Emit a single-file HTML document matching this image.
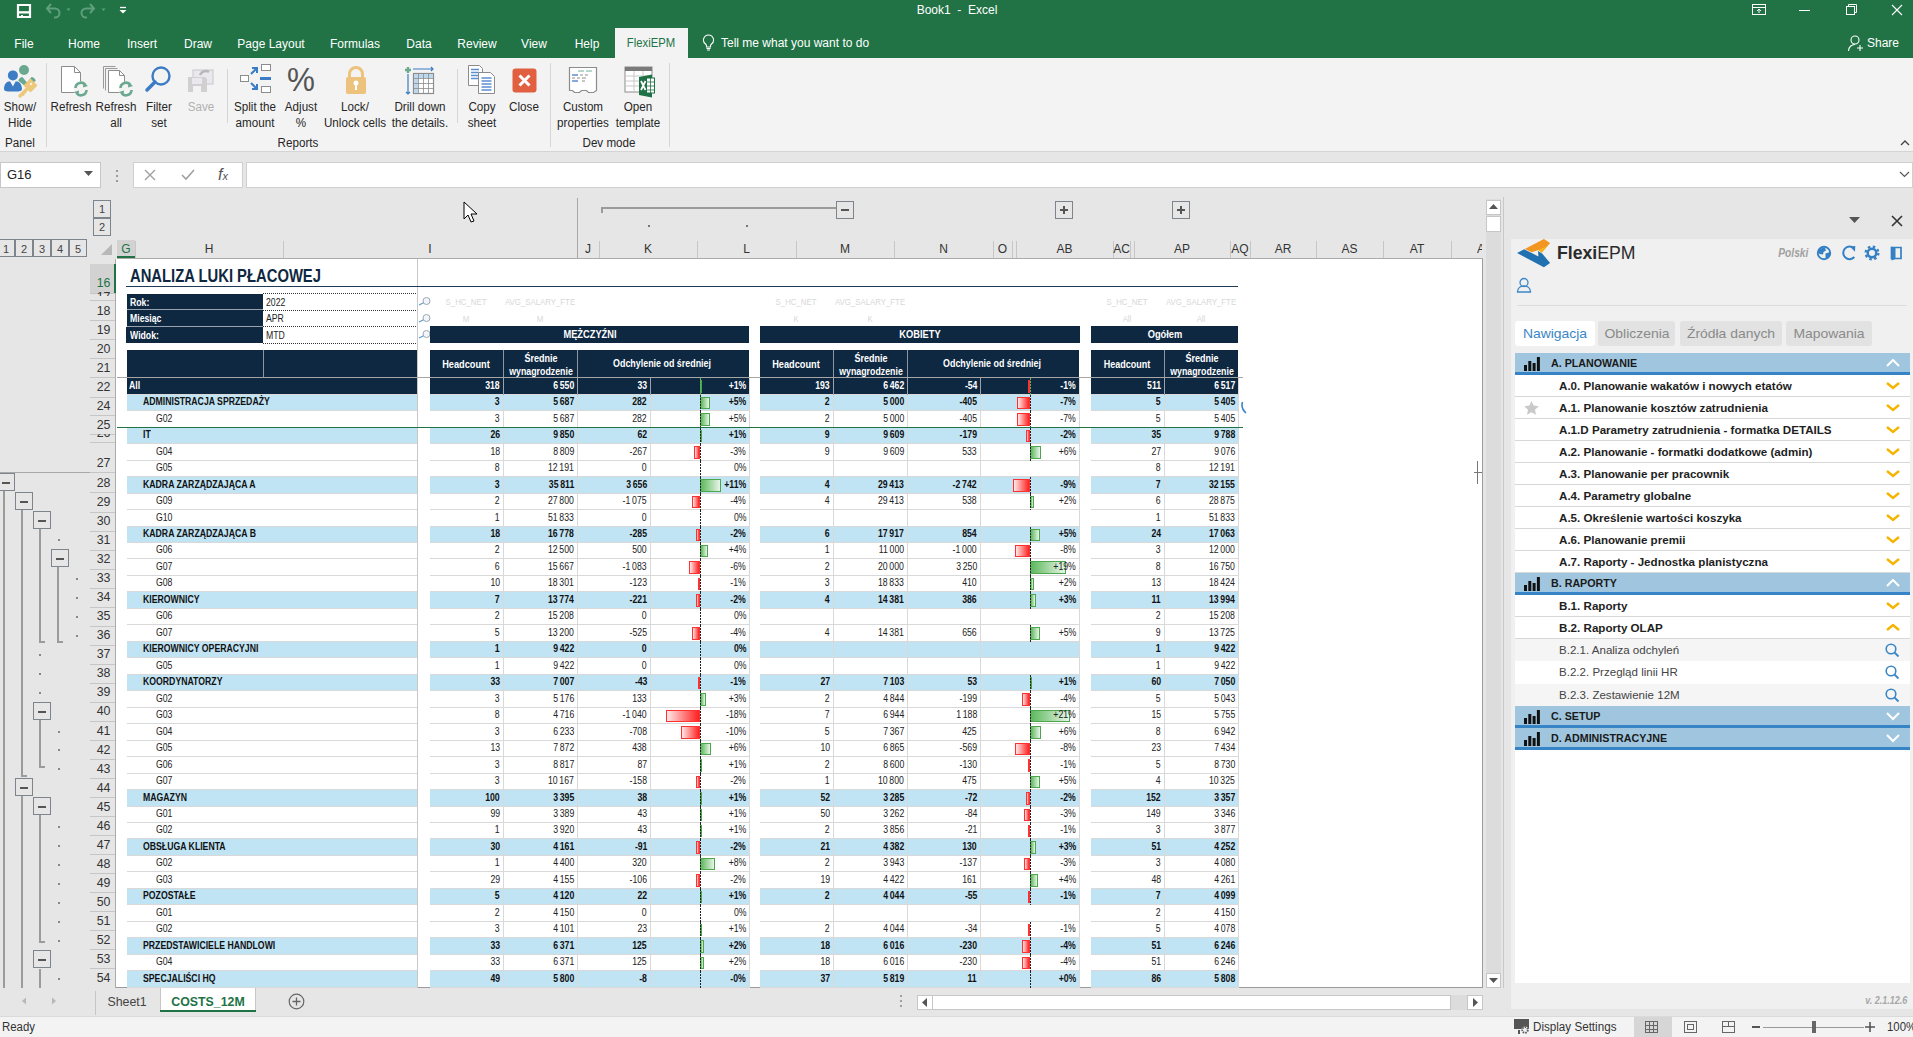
<!DOCTYPE html>
<html><head><meta charset="utf-8"><style>*{margin:0;padding:0}
html,body{width:1913px;height:1037px;overflow:hidden;background:#fff;font-family:"Liberation Sans", sans-serif;}
body div{position:absolute}
svg{display:block}
</style></head><body>
<div style="left:0px;top:0px;width:1913px;height:58px;background:#217346"></div>
<svg style="position:absolute;left:16px;top:3px" width="16" height="16" viewBox="0 0 16 16"><path d="M2 2h12v12H2z" fill="none" stroke="#fff" stroke-width="2.2"/><path d="M1 8.2h14v2.3H1z" fill="#fff"/><path d="M3 8.2l1.5 2.3M13 8.2l-1.5 2.3" stroke="#217346" stroke-width="0"/><rect x="5" y="12" width="2" height="3" fill="#fff"/></svg>
<svg style="position:absolute;left:44px;top:1px" width="100" height="18" viewBox="0 0 100 18"><path d="M7 3L3 7.5 7 12M3.5 7.5H11a4.5 4.5 0 0 1 0 9H10" fill="none" stroke="#5f9f7c" stroke-width="2"/><path d="M22.5 7.5h4l-2 2.5z" fill="#5f9f7c"/><path d="M46 3l4 4.5-4 4.5M49.5 7.5H42a4.5 4.5 0 0 0 0 9h1" fill="none" stroke="#5f9f7c" stroke-width="2"/><path d="M57.5 7.5h4l-2 2.5z" fill="#5f9f7c"/><path d="M76 6.5h6" stroke="#fff" stroke-width="1.3"/><path d="M75.5 9h7l-3.5 3.5z" fill="#fff"/></svg>
<div style="left:957px;top:0.0px;height:20px;line-height:20px;white-space:nowrap;transform:translateX(-50%) scaleX(1.0);color:#fff;font-size:12px;">Book1&nbsp; -&nbsp; Excel</div>
<svg style="position:absolute;left:1740px;top:0" width="173" height="20" viewBox="0 0 173 20"><rect x="12.5" y="4.5" width="13" height="10" fill="none" stroke="#fff"/><path d="M12.5 7.5h13M19 13V9M17 11l2-2 2 2" fill="none" stroke="#fff"/><path d="M59 10.5h11" stroke="#fff" stroke-width="1"/><rect x="106.5" y="6.5" width="8" height="8" fill="none" stroke="#fff"/><path d="M108.5 6.5v-2h8v8h-2" fill="none" stroke="#fff"/><path d="M152 5l10 10M162 5l-10 10" stroke="#fff" stroke-width="1.1"/></svg>
<div style="left:24px;top:33.5px;height:20px;line-height:20px;white-space:nowrap;transform:translateX(-50%) scaleX(1.0);color:#fff;font-size:12px;">File</div>
<div style="left:84px;top:33.5px;height:20px;line-height:20px;white-space:nowrap;transform:translateX(-50%) scaleX(1.0);color:#fff;font-size:12px;">Home</div>
<div style="left:142px;top:33.5px;height:20px;line-height:20px;white-space:nowrap;transform:translateX(-50%) scaleX(1.0);color:#fff;font-size:12px;">Insert</div>
<div style="left:198px;top:33.5px;height:20px;line-height:20px;white-space:nowrap;transform:translateX(-50%) scaleX(1.0);color:#fff;font-size:12px;">Draw</div>
<div style="left:271px;top:33.5px;height:20px;line-height:20px;white-space:nowrap;transform:translateX(-50%) scaleX(1.0);color:#fff;font-size:12px;">Page Layout</div>
<div style="left:355px;top:33.5px;height:20px;line-height:20px;white-space:nowrap;transform:translateX(-50%) scaleX(1.0);color:#fff;font-size:12px;">Formulas</div>
<div style="left:419px;top:33.5px;height:20px;line-height:20px;white-space:nowrap;transform:translateX(-50%) scaleX(1.0);color:#fff;font-size:12px;">Data</div>
<div style="left:477px;top:33.5px;height:20px;line-height:20px;white-space:nowrap;transform:translateX(-50%) scaleX(1.0);color:#fff;font-size:12px;">Review</div>
<div style="left:534px;top:33.5px;height:20px;line-height:20px;white-space:nowrap;transform:translateX(-50%) scaleX(1.0);color:#fff;font-size:12px;">View</div>
<div style="left:587px;top:33.5px;height:20px;line-height:20px;white-space:nowrap;transform:translateX(-50%) scaleX(1.0);color:#fff;font-size:12px;">Help</div>
<div style="left:615px;top:28px;width:73px;height:31px;background:#f3f3f3"></div>
<div style="left:651px;top:33.0px;height:20px;line-height:20px;white-space:nowrap;transform:translateX(-50%) scaleX(0.94);color:#217346;font-size:12px;">FlexiEPM</div>
<svg style="position:absolute;left:702px;top:34px" width="13" height="17" viewBox="0 0 13 17"><path d="M6.5 1a5 5 0 0 0-3 9c.7.6 1 1.3 1 2v1h4v-1c0-.7.3-1.4 1-2a5 5 0 0 0-3-9z" fill="none" stroke="#fff" stroke-width="1.1"/><path d="M4.5 14.5h4M5 16h3" stroke="#fff" stroke-width="1"/></svg>
<div style="left:721px;top:33.0px;height:20px;line-height:20px;white-space:nowrap;color:#fff;font-size:12px;">Tell me what you want to do</div>
<svg style="position:absolute;left:1847px;top:34px" width="18" height="18" viewBox="0 0 18 18"><circle cx="8" cy="6" r="4" fill="none" stroke="#fff" stroke-width="1.1"/><path d="M1.5 17c0-4 3-6.5 6.5-6.5" fill="none" stroke="#fff" stroke-width="1.1"/><path d="M13 11v6M10 14h6" stroke="#fff" stroke-width="1.1"/></svg>
<div style="left:1867px;top:33.0px;height:20px;line-height:20px;white-space:nowrap;color:#fff;font-size:12px;">Share</div>
<div style="left:0px;top:58px;width:1913px;height:93px;background:#f3f3f3"></div>
<div style="left:0px;top:151px;width:1913px;height:1px;background:#d4d4d4"></div>
<div style="left:46px;top:63px;width:1px;height:84px;background:#d6d6d6"></div>
<div style="left:550px;top:63px;width:1px;height:84px;background:#d6d6d6"></div>
<div style="left:669px;top:63px;width:1px;height:84px;background:#d6d6d6"></div>
<div style="left:227px;top:69px;width:1px;height:54px;background:#d6d6d6"></div>
<div style="left:457px;top:69px;width:1px;height:54px;background:#d6d6d6"></div>
<div style="left:20px;top:97.0px;height:20px;line-height:20px;white-space:nowrap;transform:translateX(-50%) scaleX(0.97);color:#262626;font-size:12px;">Show/</div>
<div style="left:20px;top:113.0px;height:20px;line-height:20px;white-space:nowrap;transform:translateX(-50%) scaleX(0.97);color:#262626;font-size:12px;">Hide</div>
<div style="left:71px;top:97.0px;height:20px;line-height:20px;white-space:nowrap;transform:translateX(-50%) scaleX(0.97);color:#262626;font-size:12px;">Refresh</div>
<div style="left:116px;top:97.0px;height:20px;line-height:20px;white-space:nowrap;transform:translateX(-50%) scaleX(0.97);color:#262626;font-size:12px;">Refresh</div>
<div style="left:116px;top:113.0px;height:20px;line-height:20px;white-space:nowrap;transform:translateX(-50%) scaleX(0.97);color:#262626;font-size:12px;">all</div>
<div style="left:159px;top:97.0px;height:20px;line-height:20px;white-space:nowrap;transform:translateX(-50%) scaleX(0.97);color:#262626;font-size:12px;">Filter</div>
<div style="left:159px;top:113.0px;height:20px;line-height:20px;white-space:nowrap;transform:translateX(-50%) scaleX(0.97);color:#262626;font-size:12px;">set</div>
<div style="left:201px;top:97.0px;height:20px;line-height:20px;white-space:nowrap;transform:translateX(-50%) scaleX(0.97);color:#b1b1b1;font-size:12px;">Save</div>
<div style="left:255px;top:97.0px;height:20px;line-height:20px;white-space:nowrap;transform:translateX(-50%) scaleX(0.97);color:#262626;font-size:12px;">Split the</div>
<div style="left:255px;top:113.0px;height:20px;line-height:20px;white-space:nowrap;transform:translateX(-50%) scaleX(0.97);color:#262626;font-size:12px;">amount</div>
<div style="left:301px;top:97.0px;height:20px;line-height:20px;white-space:nowrap;transform:translateX(-50%) scaleX(0.97);color:#262626;font-size:12px;">Adjust</div>
<div style="left:301px;top:113.0px;height:20px;line-height:20px;white-space:nowrap;transform:translateX(-50%) scaleX(0.97);color:#262626;font-size:12px;">%</div>
<div style="left:355px;top:97.0px;height:20px;line-height:20px;white-space:nowrap;transform:translateX(-50%) scaleX(0.97);color:#262626;font-size:12px;">Lock/</div>
<div style="left:355px;top:113.0px;height:20px;line-height:20px;white-space:nowrap;transform:translateX(-50%) scaleX(0.97);color:#262626;font-size:12px;">Unlock cells</div>
<div style="left:420px;top:97.0px;height:20px;line-height:20px;white-space:nowrap;transform:translateX(-50%) scaleX(0.97);color:#262626;font-size:12px;">Drill down</div>
<div style="left:420px;top:113.0px;height:20px;line-height:20px;white-space:nowrap;transform:translateX(-50%) scaleX(0.97);color:#262626;font-size:12px;">the details.</div>
<div style="left:482px;top:97.0px;height:20px;line-height:20px;white-space:nowrap;transform:translateX(-50%) scaleX(0.97);color:#262626;font-size:12px;">Copy</div>
<div style="left:482px;top:113.0px;height:20px;line-height:20px;white-space:nowrap;transform:translateX(-50%) scaleX(0.97);color:#262626;font-size:12px;">sheet</div>
<div style="left:524px;top:97.0px;height:20px;line-height:20px;white-space:nowrap;transform:translateX(-50%) scaleX(0.97);color:#262626;font-size:12px;">Close</div>
<div style="left:583px;top:97.0px;height:20px;line-height:20px;white-space:nowrap;transform:translateX(-50%) scaleX(0.97);color:#262626;font-size:12px;">Custom</div>
<div style="left:583px;top:113.0px;height:20px;line-height:20px;white-space:nowrap;transform:translateX(-50%) scaleX(0.97);color:#262626;font-size:12px;">properties</div>
<div style="left:638px;top:97.0px;height:20px;line-height:20px;white-space:nowrap;transform:translateX(-50%) scaleX(0.97);color:#262626;font-size:12px;">Open</div>
<div style="left:638px;top:113.0px;height:20px;line-height:20px;white-space:nowrap;transform:translateX(-50%) scaleX(0.97);color:#262626;font-size:12px;">template</div>
<div style="left:20px;top:133.0px;height:20px;line-height:20px;white-space:nowrap;transform:translateX(-50%) scaleX(0.97);color:#262626;font-size:12px;">Panel</div>
<div style="left:298px;top:133.0px;height:20px;line-height:20px;white-space:nowrap;transform:translateX(-50%) scaleX(0.97);color:#262626;font-size:12px;">Reports</div>
<div style="left:609px;top:133.0px;height:20px;line-height:20px;white-space:nowrap;transform:translateX(-50%) scaleX(0.97);color:#262626;font-size:12px;">Dev mode</div>
<svg style="position:absolute;left:3px;top:64px" width="36" height="34" viewBox="0 0 36 34"><circle cx="21" cy="6" r="5" fill="#6aa88f"/><path d="M15.2 16.8c1-2.6 2.6-3.8 4.2-3.8l4.6 5.6 4.6-5.6c1.6 0 3.2 1.2 4.2 3.8l-8.8 6.8z" fill="#6aa88f"/><circle cx="9.9" cy="11.4" r="5" fill="#3b7cc4"/><path d="M1 25c0-5 3-7.7 6-7.7l2.9 5.1 2.9-5.1c3 0 6.2 2.7 6.2 7.7 0 2.4-4 2.6-9 2.6s-9-.2-9-2.6z" fill="#3b7cc4"/><path d="M27.5 15.5l6 6-6 6-6-6z" fill="#edc77a" stroke="#edc77a" stroke-width="1.5" stroke-linejoin="round"/><circle cx="28" cy="20" r="1.2" fill="#f8f0e0"/><path d="M24.5 24.5l-7.5 7.5" stroke="#edc77a" stroke-width="3.2" stroke-linecap="round"/><path d="M19.5 29.5l1.8 1.8M21.5 27.5l1.5 1.5" stroke="#edc77a" stroke-width="1.8"/></svg>
<svg style="position:absolute;left:59px;top:65px" width="30" height="32" viewBox="0 0 30 32"><path d="M2.5 1.5h13l6 6v20h-19z" fill="#fff" stroke="#8c8c8c"/><path d="M15.5 1.5v6h6" fill="none" stroke="#8c8c8c"/><circle cx="22" cy="24" r="7.5" fill="#f3f3f3"/><path d="M16.5 23a5.5 5.5 0 0 1 10-3M27.5 25a5.5 5.5 0 0 1-10 3" fill="none" stroke="#6aa88f" stroke-width="2.6"/><path d="M24.5 17.5l4.5 3.5-5 1.5zM19.5 30.5l-4.5-3.5 5-1.5z" fill="#6aa88f"/></svg>
<svg style="position:absolute;left:102px;top:65px" width="34" height="34" viewBox="0 0 34 34"><path d="M1.5 1.5h12M1.5 1.5v22M3.5 3.5h12M3.5 3.5v22" fill="none" stroke="#9a9a9a"/><path d="M6.5 5.5h11l5 5v17h-16z" fill="#fff" stroke="#8c8c8c"/><path d="M17.5 5.5v5h5" fill="none" stroke="#8c8c8c"/><circle cx="24" cy="24" r="7.5" fill="#f3f3f3"/><path d="M18.5 23a5.5 5.5 0 0 1 10-3M29.5 25a5.5 5.5 0 0 1-10 3" fill="none" stroke="#6aa88f" stroke-width="2.6"/><path d="M26.5 17.5l4.5 3.5-5 1.5zM21.5 30.5l-4.5-3.5 5-1.5z" fill="#6aa88f"/></svg>
<svg style="position:absolute;left:144px;top:65px" width="30" height="30" viewBox="0 0 30 30"><circle cx="17" cy="11" r="8.5" fill="none" stroke="#3b7cc4" stroke-width="2.4"/><path d="M11 17L3 25" stroke="#3b7cc4" stroke-width="3.5" stroke-linecap="round"/></svg>
<svg style="position:absolute;left:186px;top:66px" width="30" height="30" viewBox="0 0 30 30"><rect x="7" y="4" width="20" height="14" fill="#ebe7ee" stroke="#c8c8c8"/><path d="M2 11h17l2 2v13H2z" fill="#d0d0d0"/><rect x="6" y="12" width="10" height="6" fill="#ebe7ee"/><rect x="7" y="20" width="8" height="6" fill="#f3f3f3"/><path d="M14 9c2-4 6-5 9-3" fill="none" stroke="#b8b8b8" stroke-width="2.5"/></svg>
<svg style="position:absolute;left:239px;top:63px" width="34" height="34" viewBox="0 0 34 34"><rect x="1.5" y="12.5" width="8" height="6" fill="#fff" stroke="#8c8c8c"/><rect x="22.5" y="1.5" width="9" height="6" fill="#fff" stroke="#8c8c8c"/><rect x="22.5" y="23.5" width="9" height="6" fill="#fff" stroke="#8c8c8c"/><rect x="21" y="14" width="11" height="3" fill="#3b7cc4"/><path d="M12 11l6-6M13 5h5v5M12 20l6 6M13 26h5v-5" fill="none" stroke="#3b7cc4" stroke-width="2"/></svg>
<div style="left:284px;top:60px;width:34px;height:40px;font:normal 33px/40px 'Liberation Sans',sans-serif;color:#555;text-align:center;transform:scaleX(0.95)">%</div>
<svg style="position:absolute;left:344px;top:65px" width="24" height="30" viewBox="0 0 24 30"><path d="M5.5 13V9a6.5 6.5 0 0 1 13 0v4" fill="none" stroke="#ecc27c" stroke-width="3"/><rect x="2" y="12" width="20" height="17" rx="2" fill="#ecc27c"/><circle cx="12" cy="18" r="2.5" fill="#fff"/><rect x="11" y="19" width="2" height="6" fill="#fff"/></svg>
<svg style="position:absolute;left:404px;top:64px" width="32" height="32" viewBox="0 0 32 32"><path d="M4 3v6M1 6h6" stroke="#6aa88f" stroke-width="2.4"/><path d="M9 5h20M27 3l2 2-2 2" fill="none" stroke="#3b7cc4" stroke-width="1.2"/><path d="M4 10v20M2 28l2 2 2-2" fill="none" stroke="#3b7cc4" stroke-width="1.2"/><rect x="9.5" y="9.5" width="20" height="20" fill="#fff" stroke="#8c8c8c" stroke-width="1.2"/><path d="M10 10h19v4H14v15h-4z" fill="#bdd7ee"/><path d="M14.5 10v19M19.5 10v19M24.5 10v19M10 14.5h19M10 19.5h19M10 24.5h19" stroke="#8c8c8c" stroke-width="0.8"/></svg>
<svg style="position:absolute;left:467px;top:64px" width="32" height="34" viewBox="0 0 32 34"><path d="M1.5 1.5h11l3 3v17h-14z" fill="#fff" stroke="#8c8c8c"/><path d="M4 5.5h8M4 8.5h8M4 11.5h8M4 14.5h8" stroke="#5b8fd0" stroke-width="1.3"/><path d="M11.5 8.5h12l4 4v17h-16z" fill="#fff" stroke="#8c8c8c"/><path d="M14.5 14h10M14.5 17h10M14.5 20h10M14.5 23h10M14.5 26h10" stroke="#5b8fd0" stroke-width="1.3"/></svg>
<svg style="position:absolute;left:512px;top:68px" width="25" height="25" viewBox="0 0 25 25"><rect x="0.5" y="0.5" width="24" height="24" rx="3" fill="#e06040"/><path d="M7.5 7.5l10 10M17.5 7.5l-10 10" stroke="#fff" stroke-width="3"/></svg>
<svg style="position:absolute;left:568px;top:66px" width="30" height="28" viewBox="0 0 30 28"><path d="M1.5 1.5h27v23l-3 2h-5l-2-2h-5l-2 2h-5l-2-2h-3z" fill="#fff" stroke="#8c8c8c" stroke-width="1.2"/><path d="M10 5h6M18 5h6" stroke="#9fcab9" stroke-width="1.6"/><path d="M4 9h6M4 15h6" stroke="#5b8fd0" stroke-width="1.6"/><path d="M12 9h3M17 9h3M4 12h3M9 12h3M14 12h4M14 15h3" stroke="#b5b5b5" stroke-width="1.6"/></svg>
<svg style="position:absolute;left:624px;top:66px" width="34" height="34" viewBox="0 0 34 34"><rect x="1" y="1" width="27" height="25" fill="#fff" stroke="#8c8c8c"/><rect x="1" y="1" width="27" height="4" fill="#7a7a7a"/><path d="M1 10h27M1 15h27M1 20h27M10 5v21M19 5v21" stroke="#c8c8c8"/><path d="M15 11l13-2.5v23L15 29z" fill="#1e7145"/><rect x="22.5" y="12" width="8" height="15" fill="#fff" stroke="#1e7145"/><path d="M22.5 16h8M22.5 20h8M22.5 24h8M26.5 12v15" stroke="#1e7145" stroke-width="0.8"/><path d="M17 15l4.5 9M21.5 15l-4.5 9" stroke="#fff" stroke-width="1.8"/></svg>
<svg style="position:absolute;left:1899px;top:138px" width="12" height="10" viewBox="0 0 12 10"><path d="M2 7l4-4 4 4" fill="none" stroke="#444" stroke-width="1.3"/></svg>
<div style="left:0px;top:152px;width:1913px;height:45px;background:#e6e6e6"></div>
<div style="left:0px;top:162px;width:101px;height:26px;background:#fff;border:1px solid #c6c6c6;box-sizing:border-box"></div>
<div style="left:7px;top:165.0px;height:20px;line-height:20px;white-space:nowrap;color:#222;font-size:13px;">G16</div>
<svg style="position:absolute;left:84px;top:171px" width="10" height="6"><path d="M0 0h9l-4.5 5z" fill="#555"/></svg>
<div style="left:116px;top:170px;width:2px;height:2px;background:#9a9a9a"></div>
<div style="left:116px;top:175px;width:2px;height:2px;background:#9a9a9a"></div>
<div style="left:116px;top:180px;width:2px;height:2px;background:#9a9a9a"></div>
<div style="left:133px;top:162px;width:110px;height:26px;background:#fff;border:1px solid #d0d0d0;box-sizing:border-box"></div>
<svg style="position:absolute;left:143px;top:168px" width="100" height="14" viewBox="0 0 100 14"><path d="M2 2l10 10M12 2L2 12" stroke="#a0a0a0" stroke-width="1.4"/><path d="M39 7l4 4 8-9" fill="none" stroke="#a0a0a0" stroke-width="1.6"/></svg>
<div style="left:223px;top:165.0px;height:20px;line-height:20px;white-space:nowrap;transform:translateX(-50%) scaleX(1.0);color:#555;font:14px "Liberation Serif",serif;"><i>f<span style="font-size:11px">x</span></i></div>
<div style="left:246px;top:162px;width:1667px;height:26px;background:#fff;border:1px solid #d0d0d0;box-sizing:border-box"></div>
<svg style="position:absolute;left:1899px;top:171px" width="11" height="7"><path d="M1 1l4.5 4.5L10 1" fill="none" stroke="#555" stroke-width="1.2"/></svg>
<div style="left:0px;top:197px;width:1505px;height:791px;background:#e6e6e6"></div>
<div style="left:93px;top:200px;width:18px;height:18px;border:1px solid #7d848c;box-sizing:border-box;background:#e6e6e6"></div>
<div style="left:102px;top:199.0px;height:20px;line-height:20px;white-space:nowrap;transform:translateX(-50%) scaleX(1.0);color:#444;font-size:11px;">1</div>
<div style="left:93px;top:218px;width:18px;height:18px;border:1px solid #7d848c;box-sizing:border-box;background:#e6e6e6"></div>
<div style="left:102px;top:217.0px;height:20px;line-height:20px;white-space:nowrap;transform:translateX(-50%) scaleX(1.0);color:#444;font-size:11px;">2</div>
<div style="left:-3px;top:239px;width:18px;height:18px;border:1px solid #7d848c;box-sizing:border-box;background:#e6e6e6"></div>
<div style="left:6px;top:238.5px;height:20px;line-height:20px;white-space:nowrap;transform:translateX(-50%) scaleX(1.0);color:#444;font-size:11px;">1</div>
<div style="left:15px;top:239px;width:18px;height:18px;border:1px solid #7d848c;box-sizing:border-box;background:#e6e6e6"></div>
<div style="left:24px;top:238.5px;height:20px;line-height:20px;white-space:nowrap;transform:translateX(-50%) scaleX(1.0);color:#444;font-size:11px;">2</div>
<div style="left:33px;top:239px;width:18px;height:18px;border:1px solid #7d848c;box-sizing:border-box;background:#e6e6e6"></div>
<div style="left:42px;top:238.5px;height:20px;line-height:20px;white-space:nowrap;transform:translateX(-50%) scaleX(1.0);color:#444;font-size:11px;">3</div>
<div style="left:51px;top:239px;width:18px;height:18px;border:1px solid #7d848c;box-sizing:border-box;background:#e6e6e6"></div>
<div style="left:60px;top:238.5px;height:20px;line-height:20px;white-space:nowrap;transform:translateX(-50%) scaleX(1.0);color:#444;font-size:11px;">4</div>
<div style="left:69px;top:239px;width:18px;height:18px;border:1px solid #7d848c;box-sizing:border-box;background:#e6e6e6"></div>
<div style="left:78px;top:238.5px;height:20px;line-height:20px;white-space:nowrap;transform:translateX(-50%) scaleX(1.0);color:#444;font-size:11px;">5</div>
<svg style="position:absolute;left:100px;top:243px" width="13" height="13"><path d="M12 1v11H1z" fill="#b8b8b8"/></svg>
<div style="left:117px;top:258px;width:1366px;height:1px;background:#ababab"></div>
<div style="left:117px;top:240px;width:18px;height:18px;background:#d2d2d2"></div>
<div style="left:117px;top:256px;width:18px;height:2px;background:#217346"></div>
<div style="left:135px;top:241px;width:1px;height:17px;background:#c6c6c6"></div>
<div style="left:126.0px;top:239.0px;height:20px;line-height:20px;white-space:nowrap;transform:translateX(-50%) scaleX(1.0);color:#217346;font-size:12px;">G</div>
<div style="left:283px;top:241px;width:1px;height:17px;background:#c6c6c6"></div>
<div style="left:209.0px;top:239.0px;height:20px;line-height:20px;white-space:nowrap;transform:translateX(-50%) scaleX(1.0);color:#333;font-size:12px;">H</div>
<div style="left:577px;top:241px;width:1px;height:17px;background:#c6c6c6"></div>
<div style="left:430.0px;top:239.0px;height:20px;line-height:20px;white-space:nowrap;transform:translateX(-50%) scaleX(1.0);color:#333;font-size:12px;">I</div>
<div style="left:599px;top:241px;width:1px;height:17px;background:#c6c6c6"></div>
<div style="left:588.0px;top:239.0px;height:20px;line-height:20px;white-space:nowrap;transform:translateX(-50%) scaleX(1.0);color:#333;font-size:12px;">J</div>
<div style="left:697px;top:241px;width:1px;height:17px;background:#c6c6c6"></div>
<div style="left:648.0px;top:239.0px;height:20px;line-height:20px;white-space:nowrap;transform:translateX(-50%) scaleX(1.0);color:#333;font-size:12px;">K</div>
<div style="left:796px;top:241px;width:1px;height:17px;background:#c6c6c6"></div>
<div style="left:746.5px;top:239.0px;height:20px;line-height:20px;white-space:nowrap;transform:translateX(-50%) scaleX(1.0);color:#333;font-size:12px;">L</div>
<div style="left:894px;top:241px;width:1px;height:17px;background:#c6c6c6"></div>
<div style="left:845.0px;top:239.0px;height:20px;line-height:20px;white-space:nowrap;transform:translateX(-50%) scaleX(1.0);color:#333;font-size:12px;">M</div>
<div style="left:993px;top:241px;width:1px;height:17px;background:#c6c6c6"></div>
<div style="left:943.5px;top:239.0px;height:20px;line-height:20px;white-space:nowrap;transform:translateX(-50%) scaleX(1.0);color:#333;font-size:12px;">N</div>
<div style="left:1012px;top:241px;width:1px;height:17px;background:#c6c6c6"></div>
<div style="left:1002.5px;top:239.0px;height:20px;line-height:20px;white-space:nowrap;transform:translateX(-50%) scaleX(1.0);color:#333;font-size:12px;">O</div>
<div style="left:1113px;top:241px;width:1px;height:17px;background:#c6c6c6"></div>
<div style="left:1064.5px;top:239.0px;height:20px;line-height:20px;white-space:nowrap;transform:translateX(-50%) scaleX(1.0);color:#333;font-size:12px;">AB</div>
<div style="left:1130px;top:241px;width:1px;height:17px;background:#c6c6c6"></div>
<div style="left:1121.5px;top:239.0px;height:20px;line-height:20px;white-space:nowrap;transform:translateX(-50%) scaleX(1.0);color:#333;font-size:12px;">AC</div>
<div style="left:1230px;top:241px;width:1px;height:17px;background:#c6c6c6"></div>
<div style="left:1182.0px;top:239.0px;height:20px;line-height:20px;white-space:nowrap;transform:translateX(-50%) scaleX(1.0);color:#333;font-size:12px;">AP</div>
<div style="left:1250px;top:241px;width:1px;height:17px;background:#c6c6c6"></div>
<div style="left:1240.0px;top:239.0px;height:20px;line-height:20px;white-space:nowrap;transform:translateX(-50%) scaleX(1.0);color:#333;font-size:12px;">AQ</div>
<div style="left:1316px;top:241px;width:1px;height:17px;background:#c6c6c6"></div>
<div style="left:1283.0px;top:239.0px;height:20px;line-height:20px;white-space:nowrap;transform:translateX(-50%) scaleX(1.0);color:#333;font-size:12px;">AR</div>
<div style="left:1383px;top:241px;width:1px;height:17px;background:#c6c6c6"></div>
<div style="left:1349.5px;top:239.0px;height:20px;line-height:20px;white-space:nowrap;transform:translateX(-50%) scaleX(1.0);color:#333;font-size:12px;">AS</div>
<div style="left:1451px;top:241px;width:1px;height:17px;background:#c6c6c6"></div>
<div style="left:1417.0px;top:239.0px;height:20px;line-height:20px;white-space:nowrap;transform:translateX(-50%) scaleX(1.0);color:#333;font-size:12px;">AT</div>
<div style="left:1477px;top:239.0px;height:20px;line-height:20px;white-space:nowrap;color:#333;font-size:12px;width:5px;overflow:hidden">A</div>
<div style="left:1012px;top:241px;width:1px;height:17px;background:#c6c6c6"></div>
<div style="left:1016px;top:241px;width:1px;height:17px;background:#c6c6c6"></div>
<div style="left:1130px;top:241px;width:1px;height:17px;background:#c6c6c6"></div>
<div style="left:1134px;top:241px;width:1px;height:17px;background:#c6c6c6"></div>
<div style="left:577px;top:198px;width:1px;height:61px;background:#a8a8a8"></div>
<div style="left:601px;top:207px;width:236px;height:2px;background:#9b9b9b"></div>
<div style="left:601px;top:207px;width:2px;height:6px;background:#9b9b9b"></div>
<div style="left:836px;top:201px;width:18px;height:18px;border:1px solid #7d848c;box-sizing:border-box;background:#e6e6e6"></div>
<div style="left:841px;top:209px;width:8px;height:2px;background:#555"></div>
<div style="left:1055px;top:201px;width:18px;height:18px;border:1px solid #7d848c;box-sizing:border-box;background:#e6e6e6"></div>
<div style="left:1060px;top:209px;width:8px;height:2px;background:#555"></div>
<div style="left:1063px;top:206px;width:2px;height:8px;background:#555"></div>
<div style="left:1172px;top:201px;width:18px;height:18px;border:1px solid #7d848c;box-sizing:border-box;background:#e6e6e6"></div>
<div style="left:1177px;top:209px;width:8px;height:2px;background:#555"></div>
<div style="left:1180px;top:206px;width:2px;height:8px;background:#555"></div>
<div style="left:648px;top:225px;width:2px;height:2px;background:#777"></div>
<div style="left:746px;top:225px;width:2px;height:2px;background:#777"></div>
<div style="left:115px;top:259px;width:1px;height:729px;background:#ababab"></div>
<div style="left:90px;top:264px;width:25px;height:29px;background:#d2d2d2"></div>
<div style="left:114px;top:264px;width:2px;height:29px;background:#217346"></div>
<div style="left:90px;top:293px;width:25px;height:1px;background:#c6c6c6"></div>
<div style="left:90px;top:300px;width:25px;height:1px;background:#c6c6c6"></div>
<div style="left:90px;top:320px;width:25px;height:1px;background:#c6c6c6"></div>
<div style="left:90px;top:339px;width:25px;height:1px;background:#c6c6c6"></div>
<div style="left:90px;top:358px;width:25px;height:1px;background:#c6c6c6"></div>
<div style="left:90px;top:377px;width:25px;height:1px;background:#c6c6c6"></div>
<div style="left:90px;top:397px;width:25px;height:1px;background:#c6c6c6"></div>
<div style="left:90px;top:415px;width:25px;height:1px;background:#c6c6c6"></div>
<div style="left:90px;top:434px;width:25px;height:1px;background:#c6c6c6"></div>
<div style="left:90px;top:442px;width:25px;height:1px;background:#c6c6c6"></div>
<div style="left:90px;top:472px;width:25px;height:1px;background:#c6c6c6"></div>
<div style="left:90px;top:492px;width:25px;height:1px;background:#c6c6c6"></div>
<div style="left:90px;top:512px;width:25px;height:1px;background:#c6c6c6"></div>
<div style="left:90px;top:531px;width:25px;height:1px;background:#c6c6c6"></div>
<div style="left:90px;top:550px;width:25px;height:1px;background:#c6c6c6"></div>
<div style="left:90px;top:569px;width:25px;height:1px;background:#c6c6c6"></div>
<div style="left:90px;top:588px;width:25px;height:1px;background:#c6c6c6"></div>
<div style="left:90px;top:607px;width:25px;height:1px;background:#c6c6c6"></div>
<div style="left:90px;top:626px;width:25px;height:1px;background:#c6c6c6"></div>
<div style="left:90px;top:645px;width:25px;height:1px;background:#c6c6c6"></div>
<div style="left:90px;top:664px;width:25px;height:1px;background:#c6c6c6"></div>
<div style="left:90px;top:683px;width:25px;height:1px;background:#c6c6c6"></div>
<div style="left:90px;top:702px;width:25px;height:1px;background:#c6c6c6"></div>
<div style="left:90px;top:721px;width:25px;height:1px;background:#c6c6c6"></div>
<div style="left:90px;top:740px;width:25px;height:1px;background:#c6c6c6"></div>
<div style="left:90px;top:759px;width:25px;height:1px;background:#c6c6c6"></div>
<div style="left:90px;top:778px;width:25px;height:1px;background:#c6c6c6"></div>
<div style="left:90px;top:797px;width:25px;height:1px;background:#c6c6c6"></div>
<div style="left:90px;top:816px;width:25px;height:1px;background:#c6c6c6"></div>
<div style="left:90px;top:835px;width:25px;height:1px;background:#c6c6c6"></div>
<div style="left:90px;top:854px;width:25px;height:1px;background:#c6c6c6"></div>
<div style="left:90px;top:873px;width:25px;height:1px;background:#c6c6c6"></div>
<div style="left:90px;top:892px;width:25px;height:1px;background:#c6c6c6"></div>
<div style="left:90px;top:911px;width:25px;height:1px;background:#c6c6c6"></div>
<div style="left:90px;top:930px;width:25px;height:1px;background:#c6c6c6"></div>
<div style="left:90px;top:949px;width:25px;height:1px;background:#c6c6c6"></div>
<div style="left:90px;top:968px;width:25px;height:1px;background:#c6c6c6"></div>
<div style="left:90px;top:988px;width:25px;height:1px;background:#c6c6c6"></div>
<div style="right:1802.5px;top:273.0px;height:20px;line-height:20px;white-space:nowrap;transform:scaleX(0.95);transform-origin:right;color:#217346;font-size:13px;">16</div>
<div style="right:1802.5px;top:301.0px;height:20px;line-height:20px;white-space:nowrap;transform:scaleX(0.95);transform-origin:right;color:#333;font-size:13px;">18</div>
<div style="right:1802.5px;top:320.0px;height:20px;line-height:20px;white-space:nowrap;transform:scaleX(0.95);transform-origin:right;color:#333;font-size:13px;">19</div>
<div style="right:1802.5px;top:339.0px;height:20px;line-height:20px;white-space:nowrap;transform:scaleX(0.95);transform-origin:right;color:#333;font-size:13px;">20</div>
<div style="right:1802.5px;top:358.0px;height:20px;line-height:20px;white-space:nowrap;transform:scaleX(0.95);transform-origin:right;color:#333;font-size:13px;">21</div>
<div style="right:1802.5px;top:377.0px;height:20px;line-height:20px;white-space:nowrap;transform:scaleX(0.95);transform-origin:right;color:#333;font-size:13px;">22</div>
<div style="right:1802.5px;top:396.0px;height:20px;line-height:20px;white-space:nowrap;transform:scaleX(0.95);transform-origin:right;color:#333;font-size:13px;">24</div>
<div style="right:1802.5px;top:415.0px;height:20px;line-height:20px;white-space:nowrap;transform:scaleX(0.95);transform-origin:right;color:#333;font-size:13px;">25</div>
<div style="right:1802.5px;top:453.0px;height:20px;line-height:20px;white-space:nowrap;transform:scaleX(0.95);transform-origin:right;color:#333;font-size:13px;">27</div>
<div style="right:1802.5px;top:473.0px;height:20px;line-height:20px;white-space:nowrap;transform:scaleX(0.95);transform-origin:right;color:#333;font-size:13px;">28</div>
<div style="right:1802.5px;top:492.04px;height:20px;line-height:20px;white-space:nowrap;transform:scaleX(0.95);transform-origin:right;color:#333;font-size:13px;">29</div>
<div style="right:1802.5px;top:511.08000000000004px;height:20px;line-height:20px;white-space:nowrap;transform:scaleX(0.95);transform-origin:right;color:#333;font-size:13px;">30</div>
<div style="right:1802.5px;top:530.12px;height:20px;line-height:20px;white-space:nowrap;transform:scaleX(0.95);transform-origin:right;color:#333;font-size:13px;">31</div>
<div style="right:1802.5px;top:549.16px;height:20px;line-height:20px;white-space:nowrap;transform:scaleX(0.95);transform-origin:right;color:#333;font-size:13px;">32</div>
<div style="right:1802.5px;top:568.2px;height:20px;line-height:20px;white-space:nowrap;transform:scaleX(0.95);transform-origin:right;color:#333;font-size:13px;">33</div>
<div style="right:1802.5px;top:587.24px;height:20px;line-height:20px;white-space:nowrap;transform:scaleX(0.95);transform-origin:right;color:#333;font-size:13px;">34</div>
<div style="right:1802.5px;top:606.28px;height:20px;line-height:20px;white-space:nowrap;transform:scaleX(0.95);transform-origin:right;color:#333;font-size:13px;">35</div>
<div style="right:1802.5px;top:625.3199999999999px;height:20px;line-height:20px;white-space:nowrap;transform:scaleX(0.95);transform-origin:right;color:#333;font-size:13px;">36</div>
<div style="right:1802.5px;top:644.36px;height:20px;line-height:20px;white-space:nowrap;transform:scaleX(0.95);transform-origin:right;color:#333;font-size:13px;">37</div>
<div style="right:1802.5px;top:663.4px;height:20px;line-height:20px;white-space:nowrap;transform:scaleX(0.95);transform-origin:right;color:#333;font-size:13px;">38</div>
<div style="right:1802.5px;top:682.44px;height:20px;line-height:20px;white-space:nowrap;transform:scaleX(0.95);transform-origin:right;color:#333;font-size:13px;">39</div>
<div style="right:1802.5px;top:701.48px;height:20px;line-height:20px;white-space:nowrap;transform:scaleX(0.95);transform-origin:right;color:#333;font-size:13px;">40</div>
<div style="right:1802.5px;top:720.52px;height:20px;line-height:20px;white-space:nowrap;transform:scaleX(0.95);transform-origin:right;color:#333;font-size:13px;">41</div>
<div style="right:1802.5px;top:739.56px;height:20px;line-height:20px;white-space:nowrap;transform:scaleX(0.95);transform-origin:right;color:#333;font-size:13px;">42</div>
<div style="right:1802.5px;top:758.5999999999999px;height:20px;line-height:20px;white-space:nowrap;transform:scaleX(0.95);transform-origin:right;color:#333;font-size:13px;">43</div>
<div style="right:1802.5px;top:777.64px;height:20px;line-height:20px;white-space:nowrap;transform:scaleX(0.95);transform-origin:right;color:#333;font-size:13px;">44</div>
<div style="right:1802.5px;top:796.6800000000001px;height:20px;line-height:20px;white-space:nowrap;transform:scaleX(0.95);transform-origin:right;color:#333;font-size:13px;">45</div>
<div style="right:1802.5px;top:815.72px;height:20px;line-height:20px;white-space:nowrap;transform:scaleX(0.95);transform-origin:right;color:#333;font-size:13px;">46</div>
<div style="right:1802.5px;top:834.76px;height:20px;line-height:20px;white-space:nowrap;transform:scaleX(0.95);transform-origin:right;color:#333;font-size:13px;">47</div>
<div style="right:1802.5px;top:853.8px;height:20px;line-height:20px;white-space:nowrap;transform:scaleX(0.95);transform-origin:right;color:#333;font-size:13px;">48</div>
<div style="right:1802.5px;top:872.8399999999999px;height:20px;line-height:20px;white-space:nowrap;transform:scaleX(0.95);transform-origin:right;color:#333;font-size:13px;">49</div>
<div style="right:1802.5px;top:891.88px;height:20px;line-height:20px;white-space:nowrap;transform:scaleX(0.95);transform-origin:right;color:#333;font-size:13px;">50</div>
<div style="right:1802.5px;top:910.92px;height:20px;line-height:20px;white-space:nowrap;transform:scaleX(0.95);transform-origin:right;color:#333;font-size:13px;">51</div>
<div style="right:1802.5px;top:929.96px;height:20px;line-height:20px;white-space:nowrap;transform:scaleX(0.95);transform-origin:right;color:#333;font-size:13px;">52</div>
<div style="right:1802.5px;top:949.0px;height:20px;line-height:20px;white-space:nowrap;transform:scaleX(0.95);transform-origin:right;color:#333;font-size:13px;">53</div>
<div style="right:1802.5px;top:968.04px;height:20px;line-height:20px;white-space:nowrap;transform:scaleX(0.95);transform-origin:right;color:#333;font-size:13px;">54</div>
<div style="right:1802.5px;top:287.0px;height:20px;line-height:20px;white-space:nowrap;transform:scaleX(0.95);transform-origin:right;color:#333;font-size:13px;clip-path:inset(0 0 11px 0)">17</div>
<div style="right:1802.5px;top:423.0px;height:20px;line-height:20px;white-space:nowrap;transform:scaleX(0.95);transform-origin:right;color:#333;font-size:13px;clip-path:inset(11px 0 0 0)">26</div>
<div style="left:0px;top:472px;width:90px;height:1px;background:#a8a8a8"></div>
<div style="left:3px;top:490px;width:2px;height:498px;background:#9b9b9b"></div>
<div style="left:21px;top:509px;width:2px;height:268px;background:#9b9b9b"></div>
<div style="left:21px;top:775px;width:6px;height:2px;background:#9b9b9b"></div>
<div style="left:21px;top:795px;width:2px;height:193px;background:#9b9b9b"></div>
<div style="left:39px;top:528px;width:2px;height:115px;background:#9b9b9b"></div>
<div style="left:39px;top:641px;width:6px;height:2px;background:#9b9b9b"></div>
<div style="left:57px;top:567px;width:2px;height:76px;background:#9b9b9b"></div>
<div style="left:57px;top:641px;width:6px;height:2px;background:#9b9b9b"></div>
<div style="left:39px;top:719px;width:2px;height:49px;background:#9b9b9b"></div>
<div style="left:39px;top:766px;width:6px;height:2px;background:#9b9b9b"></div>
<div style="left:39px;top:815px;width:2px;height:128px;background:#9b9b9b"></div>
<div style="left:39px;top:941px;width:6px;height:2px;background:#9b9b9b"></div>
<div style="left:39px;top:969px;width:2px;height:19px;background:#9b9b9b"></div>
<div style="left:-3px;top:473px;width:18px;height:18px;border:1px solid #7d848c;box-sizing:border-box;background:#e6e6e6"></div>
<div style="left:2px;top:482px;width:8px;height:2px;background:#555"></div>
<div style="left:15px;top:492px;width:18px;height:18px;border:1px solid #7d848c;box-sizing:border-box;background:#e6e6e6"></div>
<div style="left:20px;top:501px;width:8px;height:2px;background:#555"></div>
<div style="left:33px;top:511px;width:18px;height:18px;border:1px solid #7d848c;box-sizing:border-box;background:#e6e6e6"></div>
<div style="left:38px;top:520px;width:8px;height:2px;background:#555"></div>
<div style="left:51px;top:549px;width:18px;height:18px;border:1px solid #7d848c;box-sizing:border-box;background:#e6e6e6"></div>
<div style="left:56px;top:558px;width:8px;height:2px;background:#555"></div>
<div style="left:33px;top:702px;width:18px;height:18px;border:1px solid #7d848c;box-sizing:border-box;background:#e6e6e6"></div>
<div style="left:38px;top:711px;width:8px;height:2px;background:#555"></div>
<div style="left:15px;top:778px;width:18px;height:18px;border:1px solid #7d848c;box-sizing:border-box;background:#e6e6e6"></div>
<div style="left:20px;top:787px;width:8px;height:2px;background:#555"></div>
<div style="left:33px;top:797px;width:18px;height:18px;border:1px solid #7d848c;box-sizing:border-box;background:#e6e6e6"></div>
<div style="left:38px;top:806px;width:8px;height:2px;background:#555"></div>
<div style="left:33px;top:950px;width:18px;height:18px;border:1px solid #7d848c;box-sizing:border-box;background:#e6e6e6"></div>
<div style="left:38px;top:959px;width:8px;height:2px;background:#555"></div>
<div style="left:58px;top:539px;width:2px;height:2px;background:#888"></div>
<div style="left:39px;top:654px;width:2px;height:2px;background:#888"></div>
<div style="left:39px;top:673px;width:2px;height:2px;background:#888"></div>
<div style="left:39px;top:692px;width:2px;height:2px;background:#888"></div>
<div style="left:76px;top:578px;width:2px;height:2px;background:#888"></div>
<div style="left:76px;top:597px;width:2px;height:2px;background:#888"></div>
<div style="left:76px;top:616px;width:2px;height:2px;background:#888"></div>
<div style="left:76px;top:635px;width:2px;height:2px;background:#888"></div>
<div style="left:58px;top:731px;width:2px;height:2px;background:#888"></div>
<div style="left:58px;top:749px;width:2px;height:2px;background:#888"></div>
<div style="left:58px;top:768px;width:2px;height:2px;background:#888"></div>
<div style="left:58px;top:826px;width:2px;height:2px;background:#888"></div>
<div style="left:58px;top:845px;width:2px;height:2px;background:#888"></div>
<div style="left:58px;top:864px;width:2px;height:2px;background:#888"></div>
<div style="left:58px;top:883px;width:2px;height:2px;background:#888"></div>
<div style="left:58px;top:902px;width:2px;height:2px;background:#888"></div>
<div style="left:58px;top:921px;width:2px;height:2px;background:#888"></div>
<div style="left:58px;top:940px;width:2px;height:2px;background:#888"></div>
<div style="left:58px;top:978px;width:2px;height:2px;background:#888"></div>
<div style="left:1486px;top:199px;width:15px;height:789px;background:#dcdcdc"></div>
<div style="left:1486px;top:200px;width:15px;height:15px;background:#fff;border:1px solid #c6c6c6;box-sizing:border-box"></div>
<svg style="position:absolute;left:1489px;top:204px" width="9" height="6"><path d="M0 5h9L4.5 0z" fill="#555"/></svg>
<div style="left:1486px;top:216px;width:15px;height:16px;background:#fff;border:1px solid #c6c6c6;box-sizing:border-box"></div>
<div style="left:1486px;top:973px;width:15px;height:15px;background:#fff;border:1px solid #c6c6c6;box-sizing:border-box"></div>
<svg style="position:absolute;left:1489px;top:978px" width="9" height="6"><path d="M0 0h9L4.5 5z" fill="#555"/></svg>
<div style="left:1503px;top:197px;width:1px;height:813px;background:#c8c8c8"></div>
<div style="left:116px;top:259px;width:1367px;height:729px;background:#fff"></div>
<div style="left:1482px;top:259px;width:1px;height:729px;background:#9b9b9b"></div>
<div style="left:116px;top:987px;width:1367px;height:1px;background:#9b9b9b"></div>
<div style="left:417px;top:259px;width:1px;height:729px;background:#c8c8c8"></div>
<div style="left:130px;top:265.7px;height:20px;line-height:20px;white-space:nowrap;transform:scaleX(0.822);transform-origin:left;color:#0e2841;font-size:18px;font-weight:bold;">ANALIZA LUKI PŁACOWEJ</div>
<div style="left:126px;top:286px;width:1112px;height:1px;background:#1f3a55"></div>
<div style="left:127px;top:294px;width:136px;height:15px;background:#0e2841"></div>
<div style="left:130px;top:292.5px;height:20px;line-height:20px;white-space:nowrap;transform:scaleX(0.87);transform-origin:left;color:#fff;font-size:10px;font-weight:bold;">Rok:</div>
<div style="left:266px;top:292.8px;height:20px;line-height:20px;white-space:nowrap;transform:scaleX(0.87);transform-origin:left;color:#222;font-size:10px;">2022</div>
<div style="left:127px;top:310px;width:136px;height:16px;background:#0e2841"></div>
<div style="left:130px;top:309.0px;height:20px;line-height:20px;white-space:nowrap;transform:scaleX(0.87);transform-origin:left;color:#fff;font-size:10px;font-weight:bold;">Miesiąc</div>
<div style="left:266px;top:309.3px;height:20px;line-height:20px;white-space:nowrap;transform:scaleX(0.87);transform-origin:left;color:#222;font-size:10px;">APR</div>
<div style="left:126px;top:327px;width:137px;height:16px;background:#0e2841"></div>
<div style="left:130px;top:326.0px;height:20px;line-height:20px;white-space:nowrap;transform:scaleX(0.87);transform-origin:left;color:#fff;font-size:10px;font-weight:bold;">Widok:</div>
<div style="left:266px;top:326.3px;height:20px;line-height:20px;white-space:nowrap;transform:scaleX(0.87);transform-origin:left;color:#222;font-size:10px;">MTD</div>
<div style="left:263px;top:293px;width:154px;height:1px;background:repeating-linear-gradient(90deg,#333 0 1px,transparent 1px 2px)"></div>
<div style="left:263px;top:310px;width:154px;height:1px;background:repeating-linear-gradient(90deg,#333 0 1px,transparent 1px 2px)"></div>
<div style="left:263px;top:326px;width:154px;height:1px;background:repeating-linear-gradient(90deg,#333 0 1px,transparent 1px 2px)"></div>
<div style="left:263px;top:343px;width:154px;height:1px;background:repeating-linear-gradient(90deg,#333 0 1px,transparent 1px 2px)"></div>
<div style="left:127px;top:309px;width:136px;height:1px;background:#9aa3ad"></div>
<div style="left:127px;top:326px;width:136px;height:1px;background:#9aa3ad"></div>
<svg style="position:absolute;left:418px;top:296.0px" width="13" height="12"><path d="M1 9c2-1 4-2 6-3" stroke="#5b9bd5" stroke-width="1.2" fill="none"/><circle cx="8.5" cy="5" r="3.5" fill="#f4f4ff" stroke="#9aa" stroke-width="1"/></svg>
<svg style="position:absolute;left:418px;top:312.5px" width="13" height="12"><path d="M1 9c2-1 4-2 6-3" stroke="#5b9bd5" stroke-width="1.2" fill="none"/><circle cx="8.5" cy="5" r="3.5" fill="#f4f4ff" stroke="#9aa" stroke-width="1"/></svg>
<svg style="position:absolute;left:418px;top:329.0px" width="13" height="12"><path d="M1 9c2-1 4-2 6-3" stroke="#5b9bd5" stroke-width="1.2" fill="none"/><circle cx="8.5" cy="5" r="3.5" fill="#f4f4ff" stroke="#9aa" stroke-width="1"/></svg>
<div style="left:127px;top:350px;width:290px;height:27px;background:#0e2841"></div>
<div style="left:263px;top:350px;width:1px;height:27px;background:#8a96a3"></div>
<div style="left:430px;top:326px;width:319px;height:17px;background:#0e2841"></div>
<div style="left:589.5px;top:325.0px;height:20px;line-height:20px;white-space:nowrap;transform:translateX(-50%) scaleX(0.93);color:#fff;font-size:10px;font-weight:bold;">MĘŻCZYŹNI</div>
<div style="left:760px;top:326px;width:320px;height:17px;background:#0e2841"></div>
<div style="left:920.0px;top:325.0px;height:20px;line-height:20px;white-space:nowrap;transform:translateX(-50%) scaleX(0.93);color:#fff;font-size:10px;font-weight:bold;">KOBIETY</div>
<div style="left:1091px;top:326px;width:147px;height:17px;background:#0e2841"></div>
<div style="left:1164.5px;top:325.0px;height:20px;line-height:20px;white-space:nowrap;transform:translateX(-50%) scaleX(0.93);color:#fff;font-size:10px;font-weight:bold;">Ogółem</div>
<div style="left:466px;top:292.0px;height:20px;line-height:20px;white-space:nowrap;transform:translateX(-50%) scaleX(0.87);color:#d8d8d8;font-size:9px;">S_HC_NET</div>
<div style="left:540px;top:292.0px;height:20px;line-height:20px;white-space:nowrap;transform:translateX(-50%) scaleX(0.87);color:#d8d8d8;font-size:9px;">AVG_SALARY_FTE</div>
<div style="left:466px;top:309.0px;height:20px;line-height:20px;white-space:nowrap;transform:translateX(-50%) scaleX(0.87);color:#d8d8d8;font-size:9px;">M</div>
<div style="left:540px;top:309.0px;height:20px;line-height:20px;white-space:nowrap;transform:translateX(-50%) scaleX(0.87);color:#d8d8d8;font-size:9px;">M</div>
<div style="left:796px;top:292.0px;height:20px;line-height:20px;white-space:nowrap;transform:translateX(-50%) scaleX(0.87);color:#d8d8d8;font-size:9px;">S_HC_NET</div>
<div style="left:870px;top:292.0px;height:20px;line-height:20px;white-space:nowrap;transform:translateX(-50%) scaleX(0.87);color:#d8d8d8;font-size:9px;">AVG_SALARY_FTE</div>
<div style="left:796px;top:309.0px;height:20px;line-height:20px;white-space:nowrap;transform:translateX(-50%) scaleX(0.87);color:#d8d8d8;font-size:9px;">K</div>
<div style="left:870px;top:309.0px;height:20px;line-height:20px;white-space:nowrap;transform:translateX(-50%) scaleX(0.87);color:#d8d8d8;font-size:9px;">K</div>
<div style="left:1127px;top:292.0px;height:20px;line-height:20px;white-space:nowrap;transform:translateX(-50%) scaleX(0.87);color:#d8d8d8;font-size:9px;">S_HC_NET</div>
<div style="left:1201px;top:292.0px;height:20px;line-height:20px;white-space:nowrap;transform:translateX(-50%) scaleX(0.87);color:#d8d8d8;font-size:9px;">AVG_SALARY_FTE</div>
<div style="left:1127px;top:309.0px;height:20px;line-height:20px;white-space:nowrap;transform:translateX(-50%) scaleX(0.87);color:#d8d8d8;font-size:9px;">All</div>
<div style="left:1201px;top:309.0px;height:20px;line-height:20px;white-space:nowrap;transform:translateX(-50%) scaleX(0.87);color:#d8d8d8;font-size:9px;">All</div>
<div style="left:430px;top:350px;width:319px;height:27px;background:#0e2841"></div>
<div style="left:503px;top:350px;width:1px;height:27px;background:#8a96a3"></div>
<div style="left:577px;top:350px;width:1px;height:27px;background:#8a96a3"></div>
<div style="left:466.0px;top:355.0px;height:20px;line-height:20px;white-space:nowrap;transform:translateX(-50%) scaleX(0.92);color:#fff;font-size:10px;font-weight:bold;">Headcount</div>
<div style="left:541.0px;top:352.5px;height:12px;line-height:12px;white-space:nowrap;transform:translateX(-50%) scaleX(0.9);color:#fff;font-size:10px;font-weight:bold;">Średnie</div>
<div style="left:541.0px;top:366.0px;height:12px;line-height:12px;white-space:nowrap;transform:translateX(-50%) scaleX(0.88);color:#fff;font-size:10px;font-weight:bold;">wynagrodzenie</div>
<div style="left:662.0px;top:354.0px;height:20px;line-height:20px;white-space:nowrap;transform:translateX(-50%) scaleX(0.89);color:#fff;font-size:10px;font-weight:bold;">Odchylenie od średniej</div>
<div style="left:760px;top:350px;width:319px;height:27px;background:#0e2841"></div>
<div style="left:833px;top:350px;width:1px;height:27px;background:#8a96a3"></div>
<div style="left:907px;top:350px;width:1px;height:27px;background:#8a96a3"></div>
<div style="left:796.0px;top:355.0px;height:20px;line-height:20px;white-space:nowrap;transform:translateX(-50%) scaleX(0.92);color:#fff;font-size:10px;font-weight:bold;">Headcount</div>
<div style="left:871.0px;top:352.5px;height:12px;line-height:12px;white-space:nowrap;transform:translateX(-50%) scaleX(0.9);color:#fff;font-size:10px;font-weight:bold;">Średnie</div>
<div style="left:871.0px;top:366.0px;height:12px;line-height:12px;white-space:nowrap;transform:translateX(-50%) scaleX(0.88);color:#fff;font-size:10px;font-weight:bold;">wynagrodzenie</div>
<div style="left:992.0px;top:354.0px;height:20px;line-height:20px;white-space:nowrap;transform:translateX(-50%) scaleX(0.89);color:#fff;font-size:10px;font-weight:bold;">Odchylenie od średniej</div>
<div style="left:1091px;top:350px;width:147px;height:27px;background:#0e2841"></div>
<div style="left:1164px;top:350px;width:1px;height:27px;background:#8a96a3"></div>
<div style="left:1127px;top:355.0px;height:20px;line-height:20px;white-space:nowrap;transform:translateX(-50%) scaleX(0.9);color:#fff;font-size:10px;font-weight:bold;">Headcount</div>
<div style="left:1201.5px;top:352.5px;height:12px;line-height:12px;white-space:nowrap;transform:translateX(-50%) scaleX(0.9);color:#fff;font-size:10px;font-weight:bold;">Średnie</div>
<div style="left:1201.5px;top:366.0px;height:12px;line-height:12px;white-space:nowrap;transform:translateX(-50%) scaleX(0.88);color:#fff;font-size:10px;font-weight:bold;">wynagrodzenie</div>
<div style="left:127px;top:378px;width:290px;height:16px;background:#0e2841"></div>
<div style="left:127px;top:394px;width:290px;height:1px;background:#d9d9d9"></div>
<div style="left:129px;top:375.9px;height:20px;line-height:20px;white-space:nowrap;transform:scaleX(0.87);transform-origin:left;color:#fff;font-size:10px;font-weight:bold;">All</div>
<div style="left:430px;top:378px;width:319px;height:16px;background:#0e2841"></div>
<div style="left:430px;top:394px;width:319px;height:1px;background:#d9d9d9"></div>
<div style="left:503px;top:378px;width:1px;height:17px;background:#9aa3ad"></div>
<div style="left:577px;top:378px;width:1px;height:17px;background:#9aa3ad"></div>
<div style="left:650px;top:378px;width:1px;height:17px;background:#9aa3ad"></div>
<div style="left:749px;top:378px;width:1px;height:17px;background:#d9d9d9"></div>
<div style="right:1413px;top:375.9px;height:20px;line-height:20px;white-space:nowrap;transform:scaleX(0.87);transform-origin:right;color:#fff;font-size:10px;font-weight:bold;">318</div>
<div style="right:1339px;top:375.9px;height:20px;line-height:20px;white-space:nowrap;transform:scaleX(0.87);transform-origin:right;color:#fff;font-size:10px;font-weight:bold;">6<span style="display:inline-block;width:2px"></span>550</div>
<div style="right:1266px;top:375.9px;height:20px;line-height:20px;white-space:nowrap;transform:scaleX(0.87);transform-origin:right;color:#fff;font-size:10px;font-weight:bold;">33</div>
<div style="left:700px;top:380px;width:1.9px;height:13px;background:linear-gradient(90deg,#5cb85c,#e8f5e8);border:1px solid #4ca64c;box-sizing:border-box"></div>
<div style="left:700px;top:378px;width:1px;height:17px;background:repeating-linear-gradient(180deg,#5cb85c 0 2px,transparent 2px 3px)"></div>
<div style="right:1167px;top:375.9px;height:20px;line-height:20px;white-space:nowrap;transform:scaleX(0.87);transform-origin:right;color:#fff;font-size:10px;font-weight:bold;">+1%</div>
<div style="left:760px;top:378px;width:319px;height:16px;background:#0e2841"></div>
<div style="left:760px;top:394px;width:319px;height:1px;background:#d9d9d9"></div>
<div style="left:833px;top:378px;width:1px;height:17px;background:#9aa3ad"></div>
<div style="left:907px;top:378px;width:1px;height:17px;background:#9aa3ad"></div>
<div style="left:980px;top:378px;width:1px;height:17px;background:#9aa3ad"></div>
<div style="left:1079px;top:378px;width:1px;height:17px;background:#d9d9d9"></div>
<div style="right:1083px;top:375.9px;height:20px;line-height:20px;white-space:nowrap;transform:scaleX(0.87);transform-origin:right;color:#fff;font-size:10px;font-weight:bold;">193</div>
<div style="right:1009px;top:375.9px;height:20px;line-height:20px;white-space:nowrap;transform:scaleX(0.87);transform-origin:right;color:#fff;font-size:10px;font-weight:bold;">6<span style="display:inline-block;width:2px"></span>462</div>
<div style="right:936px;top:375.9px;height:20px;line-height:20px;white-space:nowrap;transform:scaleX(0.87);transform-origin:right;color:#fff;font-size:10px;font-weight:bold;">-54</div>
<div style="left:1028.1px;top:380px;width:1.9px;height:13px;background:linear-gradient(90deg,#ffe8e8,#ff2020);border:1px solid #ff3030;box-sizing:border-box"></div>
<div style="left:1030px;top:378px;width:1px;height:17px;background:repeating-linear-gradient(180deg,#5cb85c 0 2px,transparent 2px 3px)"></div>
<div style="right:837px;top:375.9px;height:20px;line-height:20px;white-space:nowrap;transform:scaleX(0.87);transform-origin:right;color:#fff;font-size:10px;font-weight:bold;">-1%</div>
<div style="left:1091px;top:378px;width:147px;height:16px;background:#0e2841"></div>
<div style="left:1091px;top:394px;width:147px;height:1px;background:#d9d9d9"></div>
<div style="left:1164px;top:378px;width:1px;height:17px;background:#9aa3ad"></div>
<div style="left:1238px;top:378px;width:1px;height:17px;background:#d9d9d9"></div>
<div style="right:752px;top:375.9px;height:20px;line-height:20px;white-space:nowrap;transform:scaleX(0.87);transform-origin:right;color:#fff;font-size:10px;font-weight:bold;">511</div>
<div style="right:678px;top:375.9px;height:20px;line-height:20px;white-space:nowrap;transform:scaleX(0.87);transform-origin:right;color:#fff;font-size:10px;font-weight:bold;">6<span style="display:inline-block;width:2px"></span>517</div>
<div style="left:127px;top:395px;width:290px;height:15px;background:#c1e4f5"></div>
<div style="left:127px;top:410px;width:290px;height:1px;background:#d9d9d9"></div>
<div style="left:143px;top:392.4px;height:20px;line-height:20px;white-space:nowrap;transform:scaleX(0.87);transform-origin:left;color:#111;font-size:10px;font-weight:bold;">ADMINISTRACJA SPRZEDAŻY</div>
<div style="left:430px;top:395px;width:319px;height:15px;background:#c1e4f5"></div>
<div style="left:430px;top:410px;width:319px;height:1px;background:#d9d9d9"></div>
<div style="left:503px;top:395px;width:1px;height:16px;background:#d9d9d9"></div>
<div style="left:577px;top:395px;width:1px;height:16px;background:#d9d9d9"></div>
<div style="left:650px;top:395px;width:1px;height:16px;background:#d9d9d9"></div>
<div style="left:749px;top:395px;width:1px;height:16px;background:#d9d9d9"></div>
<div style="right:1413px;top:392.4px;height:20px;line-height:20px;white-space:nowrap;transform:scaleX(0.87);transform-origin:right;color:#111;font-size:10px;font-weight:bold;">3</div>
<div style="right:1339px;top:392.4px;height:20px;line-height:20px;white-space:nowrap;transform:scaleX(0.87);transform-origin:right;color:#111;font-size:10px;font-weight:bold;">5<span style="display:inline-block;width:2px"></span>687</div>
<div style="right:1266px;top:392.4px;height:20px;line-height:20px;white-space:nowrap;transform:scaleX(0.87);transform-origin:right;color:#111;font-size:10px;font-weight:bold;">282</div>
<div style="left:700px;top:397px;width:9.5px;height:12px;background:linear-gradient(90deg,#5cb85c,#e8f5e8);border:1px solid #4ca64c;box-sizing:border-box"></div>
<div style="left:700px;top:395px;width:1px;height:16px;background:repeating-linear-gradient(180deg,#222 0 2px,transparent 2px 3px)"></div>
<div style="right:1167px;top:392.4px;height:20px;line-height:20px;white-space:nowrap;transform:scaleX(0.87);transform-origin:right;color:#111;font-size:10px;font-weight:bold;">+5%</div>
<div style="left:760px;top:395px;width:319px;height:15px;background:#c1e4f5"></div>
<div style="left:760px;top:410px;width:319px;height:1px;background:#d9d9d9"></div>
<div style="left:833px;top:395px;width:1px;height:16px;background:#d9d9d9"></div>
<div style="left:907px;top:395px;width:1px;height:16px;background:#d9d9d9"></div>
<div style="left:980px;top:395px;width:1px;height:16px;background:#d9d9d9"></div>
<div style="left:1079px;top:395px;width:1px;height:16px;background:#d9d9d9"></div>
<div style="right:1083px;top:392.4px;height:20px;line-height:20px;white-space:nowrap;transform:scaleX(0.87);transform-origin:right;color:#111;font-size:10px;font-weight:bold;">2</div>
<div style="right:1009px;top:392.4px;height:20px;line-height:20px;white-space:nowrap;transform:scaleX(0.87);transform-origin:right;color:#111;font-size:10px;font-weight:bold;">5<span style="display:inline-block;width:2px"></span>000</div>
<div style="right:936px;top:392.4px;height:20px;line-height:20px;white-space:nowrap;transform:scaleX(0.87);transform-origin:right;color:#111;font-size:10px;font-weight:bold;">-405</div>
<div style="left:1016.7px;top:397px;width:13.299999999999999px;height:12px;background:linear-gradient(90deg,#ffe8e8,#ff2020);border:1px solid #ff3030;box-sizing:border-box"></div>
<div style="left:1030px;top:395px;width:1px;height:16px;background:repeating-linear-gradient(180deg,#222 0 2px,transparent 2px 3px)"></div>
<div style="right:837px;top:392.4px;height:20px;line-height:20px;white-space:nowrap;transform:scaleX(0.87);transform-origin:right;color:#111;font-size:10px;font-weight:bold;">-7%</div>
<div style="left:1091px;top:395px;width:147px;height:15px;background:#c1e4f5"></div>
<div style="left:1091px;top:410px;width:147px;height:1px;background:#d9d9d9"></div>
<div style="left:1164px;top:395px;width:1px;height:16px;background:#d9d9d9"></div>
<div style="left:1238px;top:395px;width:1px;height:16px;background:#d9d9d9"></div>
<div style="right:752px;top:392.4px;height:20px;line-height:20px;white-space:nowrap;transform:scaleX(0.87);transform-origin:right;color:#111;font-size:10px;font-weight:bold;">5</div>
<div style="right:678px;top:392.4px;height:20px;line-height:20px;white-space:nowrap;transform:scaleX(0.87);transform-origin:right;color:#111;font-size:10px;font-weight:bold;">5<span style="display:inline-block;width:2px"></span>405</div>
<div style="left:127px;top:411px;width:290px;height:16px;background:#fff"></div>
<div style="left:127px;top:427px;width:290px;height:1px;background:#d9d9d9"></div>
<div style="left:156px;top:408.9px;height:20px;line-height:20px;white-space:nowrap;transform:scaleX(0.87);transform-origin:left;color:#222;font-size:10px;">G02</div>
<div style="left:430px;top:411px;width:319px;height:16px;background:#fff"></div>
<div style="left:430px;top:427px;width:319px;height:1px;background:#d9d9d9"></div>
<div style="left:503px;top:411px;width:1px;height:17px;background:#d9d9d9"></div>
<div style="left:577px;top:411px;width:1px;height:17px;background:#d9d9d9"></div>
<div style="left:650px;top:411px;width:1px;height:17px;background:#d9d9d9"></div>
<div style="left:749px;top:411px;width:1px;height:17px;background:#d9d9d9"></div>
<div style="right:1413px;top:408.9px;height:20px;line-height:20px;white-space:nowrap;transform:scaleX(0.87);transform-origin:right;color:#222;font-size:10px;">3</div>
<div style="right:1339px;top:408.9px;height:20px;line-height:20px;white-space:nowrap;transform:scaleX(0.87);transform-origin:right;color:#222;font-size:10px;">5<span style="display:inline-block;width:2px"></span>687</div>
<div style="right:1266px;top:408.9px;height:20px;line-height:20px;white-space:nowrap;transform:scaleX(0.87);transform-origin:right;color:#222;font-size:10px;">282</div>
<div style="left:700px;top:413px;width:9.5px;height:13px;background:linear-gradient(90deg,#5cb85c,#e8f5e8);border:1px solid #4ca64c;box-sizing:border-box"></div>
<div style="left:700px;top:411px;width:1px;height:17px;background:repeating-linear-gradient(180deg,#222 0 2px,transparent 2px 3px)"></div>
<div style="right:1167px;top:408.9px;height:20px;line-height:20px;white-space:nowrap;transform:scaleX(0.87);transform-origin:right;color:#222;font-size:10px;">+5%</div>
<div style="left:760px;top:411px;width:319px;height:16px;background:#fff"></div>
<div style="left:760px;top:427px;width:319px;height:1px;background:#d9d9d9"></div>
<div style="left:833px;top:411px;width:1px;height:17px;background:#d9d9d9"></div>
<div style="left:907px;top:411px;width:1px;height:17px;background:#d9d9d9"></div>
<div style="left:980px;top:411px;width:1px;height:17px;background:#d9d9d9"></div>
<div style="left:1079px;top:411px;width:1px;height:17px;background:#d9d9d9"></div>
<div style="right:1083px;top:408.9px;height:20px;line-height:20px;white-space:nowrap;transform:scaleX(0.87);transform-origin:right;color:#222;font-size:10px;">2</div>
<div style="right:1009px;top:408.9px;height:20px;line-height:20px;white-space:nowrap;transform:scaleX(0.87);transform-origin:right;color:#222;font-size:10px;">5<span style="display:inline-block;width:2px"></span>000</div>
<div style="right:936px;top:408.9px;height:20px;line-height:20px;white-space:nowrap;transform:scaleX(0.87);transform-origin:right;color:#222;font-size:10px;">-405</div>
<div style="left:1016.7px;top:413px;width:13.299999999999999px;height:13px;background:linear-gradient(90deg,#ffe8e8,#ff2020);border:1px solid #ff3030;box-sizing:border-box"></div>
<div style="left:1030px;top:411px;width:1px;height:17px;background:repeating-linear-gradient(180deg,#222 0 2px,transparent 2px 3px)"></div>
<div style="right:837px;top:408.9px;height:20px;line-height:20px;white-space:nowrap;transform:scaleX(0.87);transform-origin:right;color:#222;font-size:10px;">-7%</div>
<div style="left:1091px;top:411px;width:147px;height:16px;background:#fff"></div>
<div style="left:1091px;top:427px;width:147px;height:1px;background:#d9d9d9"></div>
<div style="left:1164px;top:411px;width:1px;height:17px;background:#d9d9d9"></div>
<div style="left:1238px;top:411px;width:1px;height:17px;background:#d9d9d9"></div>
<div style="right:752px;top:408.9px;height:20px;line-height:20px;white-space:nowrap;transform:scaleX(0.87);transform-origin:right;color:#222;font-size:10px;">5</div>
<div style="right:678px;top:408.9px;height:20px;line-height:20px;white-space:nowrap;transform:scaleX(0.87);transform-origin:right;color:#222;font-size:10px;">5<span style="display:inline-block;width:2px"></span>405</div>
<div style="left:127px;top:428px;width:290px;height:15px;background:#c1e4f5"></div>
<div style="left:127px;top:443px;width:290px;height:1px;background:#d9d9d9"></div>
<div style="left:143px;top:425.4px;height:20px;line-height:20px;white-space:nowrap;transform:scaleX(0.87);transform-origin:left;color:#111;font-size:10px;font-weight:bold;">IT</div>
<div style="left:430px;top:428px;width:319px;height:15px;background:#c1e4f5"></div>
<div style="left:430px;top:443px;width:319px;height:1px;background:#d9d9d9"></div>
<div style="left:503px;top:428px;width:1px;height:16px;background:#d9d9d9"></div>
<div style="left:577px;top:428px;width:1px;height:16px;background:#d9d9d9"></div>
<div style="left:650px;top:428px;width:1px;height:16px;background:#d9d9d9"></div>
<div style="left:749px;top:428px;width:1px;height:16px;background:#d9d9d9"></div>
<div style="right:1413px;top:425.4px;height:20px;line-height:20px;white-space:nowrap;transform:scaleX(0.87);transform-origin:right;color:#111;font-size:10px;font-weight:bold;">26</div>
<div style="right:1339px;top:425.4px;height:20px;line-height:20px;white-space:nowrap;transform:scaleX(0.87);transform-origin:right;color:#111;font-size:10px;font-weight:bold;">9<span style="display:inline-block;width:2px"></span>850</div>
<div style="right:1266px;top:425.4px;height:20px;line-height:20px;white-space:nowrap;transform:scaleX(0.87);transform-origin:right;color:#111;font-size:10px;font-weight:bold;">62</div>
<div style="left:700px;top:430px;width:1.9px;height:12px;background:linear-gradient(90deg,#5cb85c,#e8f5e8);border:1px solid #4ca64c;box-sizing:border-box"></div>
<div style="left:700px;top:428px;width:1px;height:16px;background:repeating-linear-gradient(180deg,#222 0 2px,transparent 2px 3px)"></div>
<div style="right:1167px;top:425.4px;height:20px;line-height:20px;white-space:nowrap;transform:scaleX(0.87);transform-origin:right;color:#111;font-size:10px;font-weight:bold;">+1%</div>
<div style="left:760px;top:428px;width:319px;height:15px;background:#c1e4f5"></div>
<div style="left:760px;top:443px;width:319px;height:1px;background:#d9d9d9"></div>
<div style="left:833px;top:428px;width:1px;height:16px;background:#d9d9d9"></div>
<div style="left:907px;top:428px;width:1px;height:16px;background:#d9d9d9"></div>
<div style="left:980px;top:428px;width:1px;height:16px;background:#d9d9d9"></div>
<div style="left:1079px;top:428px;width:1px;height:16px;background:#d9d9d9"></div>
<div style="right:1083px;top:425.4px;height:20px;line-height:20px;white-space:nowrap;transform:scaleX(0.87);transform-origin:right;color:#111;font-size:10px;font-weight:bold;">9</div>
<div style="right:1009px;top:425.4px;height:20px;line-height:20px;white-space:nowrap;transform:scaleX(0.87);transform-origin:right;color:#111;font-size:10px;font-weight:bold;">9<span style="display:inline-block;width:2px"></span>609</div>
<div style="right:936px;top:425.4px;height:20px;line-height:20px;white-space:nowrap;transform:scaleX(0.87);transform-origin:right;color:#111;font-size:10px;font-weight:bold;">-179</div>
<div style="left:1026.2px;top:430px;width:3.8px;height:12px;background:linear-gradient(90deg,#ffe8e8,#ff2020);border:1px solid #ff3030;box-sizing:border-box"></div>
<div style="left:1030px;top:428px;width:1px;height:16px;background:repeating-linear-gradient(180deg,#222 0 2px,transparent 2px 3px)"></div>
<div style="right:837px;top:425.4px;height:20px;line-height:20px;white-space:nowrap;transform:scaleX(0.87);transform-origin:right;color:#111;font-size:10px;font-weight:bold;">-2%</div>
<div style="left:1091px;top:428px;width:147px;height:15px;background:#c1e4f5"></div>
<div style="left:1091px;top:443px;width:147px;height:1px;background:#d9d9d9"></div>
<div style="left:1164px;top:428px;width:1px;height:16px;background:#d9d9d9"></div>
<div style="left:1238px;top:428px;width:1px;height:16px;background:#d9d9d9"></div>
<div style="right:752px;top:425.4px;height:20px;line-height:20px;white-space:nowrap;transform:scaleX(0.87);transform-origin:right;color:#111;font-size:10px;font-weight:bold;">35</div>
<div style="right:678px;top:425.4px;height:20px;line-height:20px;white-space:nowrap;transform:scaleX(0.87);transform-origin:right;color:#111;font-size:10px;font-weight:bold;">9<span style="display:inline-block;width:2px"></span>788</div>
<div style="left:127px;top:444px;width:290px;height:16px;background:#fff"></div>
<div style="left:127px;top:460px;width:290px;height:1px;background:#d9d9d9"></div>
<div style="left:156px;top:441.9px;height:20px;line-height:20px;white-space:nowrap;transform:scaleX(0.87);transform-origin:left;color:#222;font-size:10px;">G04</div>
<div style="left:430px;top:444px;width:319px;height:16px;background:#fff"></div>
<div style="left:430px;top:460px;width:319px;height:1px;background:#d9d9d9"></div>
<div style="left:503px;top:444px;width:1px;height:17px;background:#d9d9d9"></div>
<div style="left:577px;top:444px;width:1px;height:17px;background:#d9d9d9"></div>
<div style="left:650px;top:444px;width:1px;height:17px;background:#d9d9d9"></div>
<div style="left:749px;top:444px;width:1px;height:17px;background:#d9d9d9"></div>
<div style="right:1413px;top:441.9px;height:20px;line-height:20px;white-space:nowrap;transform:scaleX(0.87);transform-origin:right;color:#222;font-size:10px;">18</div>
<div style="right:1339px;top:441.9px;height:20px;line-height:20px;white-space:nowrap;transform:scaleX(0.87);transform-origin:right;color:#222;font-size:10px;">8<span style="display:inline-block;width:2px"></span>809</div>
<div style="right:1266px;top:441.9px;height:20px;line-height:20px;white-space:nowrap;transform:scaleX(0.87);transform-origin:right;color:#222;font-size:10px;">-267</div>
<div style="left:694.3px;top:446px;width:5.699999999999999px;height:13px;background:linear-gradient(90deg,#ffe8e8,#ff2020);border:1px solid #ff3030;box-sizing:border-box"></div>
<div style="left:700px;top:444px;width:1px;height:17px;background:repeating-linear-gradient(180deg,#222 0 2px,transparent 2px 3px)"></div>
<div style="right:1167px;top:441.9px;height:20px;line-height:20px;white-space:nowrap;transform:scaleX(0.87);transform-origin:right;color:#222;font-size:10px;">-3%</div>
<div style="left:760px;top:444px;width:319px;height:16px;background:#fff"></div>
<div style="left:760px;top:460px;width:319px;height:1px;background:#d9d9d9"></div>
<div style="left:833px;top:444px;width:1px;height:17px;background:#d9d9d9"></div>
<div style="left:907px;top:444px;width:1px;height:17px;background:#d9d9d9"></div>
<div style="left:980px;top:444px;width:1px;height:17px;background:#d9d9d9"></div>
<div style="left:1079px;top:444px;width:1px;height:17px;background:#d9d9d9"></div>
<div style="right:1083px;top:441.9px;height:20px;line-height:20px;white-space:nowrap;transform:scaleX(0.87);transform-origin:right;color:#222;font-size:10px;">9</div>
<div style="right:1009px;top:441.9px;height:20px;line-height:20px;white-space:nowrap;transform:scaleX(0.87);transform-origin:right;color:#222;font-size:10px;">9<span style="display:inline-block;width:2px"></span>609</div>
<div style="right:936px;top:441.9px;height:20px;line-height:20px;white-space:nowrap;transform:scaleX(0.87);transform-origin:right;color:#222;font-size:10px;">533</div>
<div style="left:1030px;top:446px;width:11.399999999999999px;height:13px;background:linear-gradient(90deg,#5cb85c,#e8f5e8);border:1px solid #4ca64c;box-sizing:border-box"></div>
<div style="left:1030px;top:444px;width:1px;height:17px;background:repeating-linear-gradient(180deg,#222 0 2px,transparent 2px 3px)"></div>
<div style="right:837px;top:441.9px;height:20px;line-height:20px;white-space:nowrap;transform:scaleX(0.87);transform-origin:right;color:#222;font-size:10px;">+6%</div>
<div style="left:1091px;top:444px;width:147px;height:16px;background:#fff"></div>
<div style="left:1091px;top:460px;width:147px;height:1px;background:#d9d9d9"></div>
<div style="left:1164px;top:444px;width:1px;height:17px;background:#d9d9d9"></div>
<div style="left:1238px;top:444px;width:1px;height:17px;background:#d9d9d9"></div>
<div style="right:752px;top:441.9px;height:20px;line-height:20px;white-space:nowrap;transform:scaleX(0.87);transform-origin:right;color:#222;font-size:10px;">27</div>
<div style="right:678px;top:441.9px;height:20px;line-height:20px;white-space:nowrap;transform:scaleX(0.87);transform-origin:right;color:#222;font-size:10px;">9<span style="display:inline-block;width:2px"></span>076</div>
<div style="left:127px;top:461px;width:290px;height:15px;background:#fff"></div>
<div style="left:127px;top:476px;width:290px;height:1px;background:#d9d9d9"></div>
<div style="left:156px;top:458.4px;height:20px;line-height:20px;white-space:nowrap;transform:scaleX(0.87);transform-origin:left;color:#222;font-size:10px;">G05</div>
<div style="left:430px;top:461px;width:319px;height:15px;background:#fff"></div>
<div style="left:430px;top:476px;width:319px;height:1px;background:#d9d9d9"></div>
<div style="left:503px;top:461px;width:1px;height:16px;background:#d9d9d9"></div>
<div style="left:577px;top:461px;width:1px;height:16px;background:#d9d9d9"></div>
<div style="left:650px;top:461px;width:1px;height:16px;background:#d9d9d9"></div>
<div style="left:749px;top:461px;width:1px;height:16px;background:#d9d9d9"></div>
<div style="right:1413px;top:458.4px;height:20px;line-height:20px;white-space:nowrap;transform:scaleX(0.87);transform-origin:right;color:#222;font-size:10px;">8</div>
<div style="right:1339px;top:458.4px;height:20px;line-height:20px;white-space:nowrap;transform:scaleX(0.87);transform-origin:right;color:#222;font-size:10px;">12<span style="display:inline-block;width:2px"></span>191</div>
<div style="right:1266px;top:458.4px;height:20px;line-height:20px;white-space:nowrap;transform:scaleX(0.87);transform-origin:right;color:#222;font-size:10px;">0</div>
<div style="left:700px;top:461px;width:1px;height:16px;background:repeating-linear-gradient(180deg,#222 0 2px,transparent 2px 3px)"></div>
<div style="right:1167px;top:458.4px;height:20px;line-height:20px;white-space:nowrap;transform:scaleX(0.87);transform-origin:right;color:#222;font-size:10px;">0%</div>
<div style="left:760px;top:461px;width:319px;height:15px;background:#fff"></div>
<div style="left:760px;top:476px;width:319px;height:1px;background:#d9d9d9"></div>
<div style="left:833px;top:461px;width:1px;height:16px;background:#d9d9d9"></div>
<div style="left:907px;top:461px;width:1px;height:16px;background:#d9d9d9"></div>
<div style="left:980px;top:461px;width:1px;height:16px;background:#d9d9d9"></div>
<div style="left:1079px;top:461px;width:1px;height:16px;background:#d9d9d9"></div>
<div style="left:1091px;top:461px;width:147px;height:15px;background:#fff"></div>
<div style="left:1091px;top:476px;width:147px;height:1px;background:#d9d9d9"></div>
<div style="left:1164px;top:461px;width:1px;height:16px;background:#d9d9d9"></div>
<div style="left:1238px;top:461px;width:1px;height:16px;background:#d9d9d9"></div>
<div style="right:752px;top:458.4px;height:20px;line-height:20px;white-space:nowrap;transform:scaleX(0.87);transform-origin:right;color:#222;font-size:10px;">8</div>
<div style="right:678px;top:458.4px;height:20px;line-height:20px;white-space:nowrap;transform:scaleX(0.87);transform-origin:right;color:#222;font-size:10px;">12<span style="display:inline-block;width:2px"></span>191</div>
<div style="left:127px;top:477px;width:290px;height:16px;background:#c1e4f5"></div>
<div style="left:127px;top:493px;width:290px;height:1px;background:#d9d9d9"></div>
<div style="left:143px;top:474.9px;height:20px;line-height:20px;white-space:nowrap;transform:scaleX(0.87);transform-origin:left;color:#111;font-size:10px;font-weight:bold;">KADRA ZARZĄDZAJĄCA A</div>
<div style="left:430px;top:477px;width:319px;height:16px;background:#c1e4f5"></div>
<div style="left:430px;top:493px;width:319px;height:1px;background:#d9d9d9"></div>
<div style="left:503px;top:477px;width:1px;height:17px;background:#d9d9d9"></div>
<div style="left:577px;top:477px;width:1px;height:17px;background:#d9d9d9"></div>
<div style="left:650px;top:477px;width:1px;height:17px;background:#d9d9d9"></div>
<div style="left:749px;top:477px;width:1px;height:17px;background:#d9d9d9"></div>
<div style="right:1413px;top:474.9px;height:20px;line-height:20px;white-space:nowrap;transform:scaleX(0.87);transform-origin:right;color:#111;font-size:10px;font-weight:bold;">3</div>
<div style="right:1339px;top:474.9px;height:20px;line-height:20px;white-space:nowrap;transform:scaleX(0.87);transform-origin:right;color:#111;font-size:10px;font-weight:bold;">35<span style="display:inline-block;width:2px"></span>811</div>
<div style="right:1266px;top:474.9px;height:20px;line-height:20px;white-space:nowrap;transform:scaleX(0.87);transform-origin:right;color:#111;font-size:10px;font-weight:bold;">3<span style="display:inline-block;width:2px"></span>656</div>
<div style="left:700px;top:479px;width:20.9px;height:13px;background:linear-gradient(90deg,#5cb85c,#e8f5e8);border:1px solid #4ca64c;box-sizing:border-box"></div>
<div style="left:700px;top:477px;width:1px;height:17px;background:repeating-linear-gradient(180deg,#222 0 2px,transparent 2px 3px)"></div>
<div style="right:1167px;top:474.9px;height:20px;line-height:20px;white-space:nowrap;transform:scaleX(0.87);transform-origin:right;color:#111;font-size:10px;font-weight:bold;">+11%</div>
<div style="left:760px;top:477px;width:319px;height:16px;background:#c1e4f5"></div>
<div style="left:760px;top:493px;width:319px;height:1px;background:#d9d9d9"></div>
<div style="left:833px;top:477px;width:1px;height:17px;background:#d9d9d9"></div>
<div style="left:907px;top:477px;width:1px;height:17px;background:#d9d9d9"></div>
<div style="left:980px;top:477px;width:1px;height:17px;background:#d9d9d9"></div>
<div style="left:1079px;top:477px;width:1px;height:17px;background:#d9d9d9"></div>
<div style="right:1083px;top:474.9px;height:20px;line-height:20px;white-space:nowrap;transform:scaleX(0.87);transform-origin:right;color:#111;font-size:10px;font-weight:bold;">4</div>
<div style="right:1009px;top:474.9px;height:20px;line-height:20px;white-space:nowrap;transform:scaleX(0.87);transform-origin:right;color:#111;font-size:10px;font-weight:bold;">29<span style="display:inline-block;width:2px"></span>413</div>
<div style="right:936px;top:474.9px;height:20px;line-height:20px;white-space:nowrap;transform:scaleX(0.87);transform-origin:right;color:#111;font-size:10px;font-weight:bold;">-2<span style="display:inline-block;width:2px"></span>742</div>
<div style="left:1012.9px;top:479px;width:17.099999999999998px;height:13px;background:linear-gradient(90deg,#ffe8e8,#ff2020);border:1px solid #ff3030;box-sizing:border-box"></div>
<div style="left:1030px;top:477px;width:1px;height:17px;background:repeating-linear-gradient(180deg,#222 0 2px,transparent 2px 3px)"></div>
<div style="right:837px;top:474.9px;height:20px;line-height:20px;white-space:nowrap;transform:scaleX(0.87);transform-origin:right;color:#111;font-size:10px;font-weight:bold;">-9%</div>
<div style="left:1091px;top:477px;width:147px;height:16px;background:#c1e4f5"></div>
<div style="left:1091px;top:493px;width:147px;height:1px;background:#d9d9d9"></div>
<div style="left:1164px;top:477px;width:1px;height:17px;background:#d9d9d9"></div>
<div style="left:1238px;top:477px;width:1px;height:17px;background:#d9d9d9"></div>
<div style="right:752px;top:474.9px;height:20px;line-height:20px;white-space:nowrap;transform:scaleX(0.87);transform-origin:right;color:#111;font-size:10px;font-weight:bold;">7</div>
<div style="right:678px;top:474.9px;height:20px;line-height:20px;white-space:nowrap;transform:scaleX(0.87);transform-origin:right;color:#111;font-size:10px;font-weight:bold;">32<span style="display:inline-block;width:2px"></span>155</div>
<div style="left:127px;top:494px;width:290px;height:15px;background:#fff"></div>
<div style="left:127px;top:509px;width:290px;height:1px;background:#d9d9d9"></div>
<div style="left:156px;top:491.4px;height:20px;line-height:20px;white-space:nowrap;transform:scaleX(0.87);transform-origin:left;color:#222;font-size:10px;">G09</div>
<div style="left:430px;top:494px;width:319px;height:15px;background:#fff"></div>
<div style="left:430px;top:509px;width:319px;height:1px;background:#d9d9d9"></div>
<div style="left:503px;top:494px;width:1px;height:16px;background:#d9d9d9"></div>
<div style="left:577px;top:494px;width:1px;height:16px;background:#d9d9d9"></div>
<div style="left:650px;top:494px;width:1px;height:16px;background:#d9d9d9"></div>
<div style="left:749px;top:494px;width:1px;height:16px;background:#d9d9d9"></div>
<div style="right:1413px;top:491.4px;height:20px;line-height:20px;white-space:nowrap;transform:scaleX(0.87);transform-origin:right;color:#222;font-size:10px;">2</div>
<div style="right:1339px;top:491.4px;height:20px;line-height:20px;white-space:nowrap;transform:scaleX(0.87);transform-origin:right;color:#222;font-size:10px;">27<span style="display:inline-block;width:2px"></span>800</div>
<div style="right:1266px;top:491.4px;height:20px;line-height:20px;white-space:nowrap;transform:scaleX(0.87);transform-origin:right;color:#222;font-size:10px;">-1<span style="display:inline-block;width:2px"></span>075</div>
<div style="left:692.4px;top:496px;width:7.6px;height:12px;background:linear-gradient(90deg,#ffe8e8,#ff2020);border:1px solid #ff3030;box-sizing:border-box"></div>
<div style="left:700px;top:494px;width:1px;height:16px;background:repeating-linear-gradient(180deg,#222 0 2px,transparent 2px 3px)"></div>
<div style="right:1167px;top:491.4px;height:20px;line-height:20px;white-space:nowrap;transform:scaleX(0.87);transform-origin:right;color:#222;font-size:10px;">-4%</div>
<div style="left:760px;top:494px;width:319px;height:15px;background:#fff"></div>
<div style="left:760px;top:509px;width:319px;height:1px;background:#d9d9d9"></div>
<div style="left:833px;top:494px;width:1px;height:16px;background:#d9d9d9"></div>
<div style="left:907px;top:494px;width:1px;height:16px;background:#d9d9d9"></div>
<div style="left:980px;top:494px;width:1px;height:16px;background:#d9d9d9"></div>
<div style="left:1079px;top:494px;width:1px;height:16px;background:#d9d9d9"></div>
<div style="right:1083px;top:491.4px;height:20px;line-height:20px;white-space:nowrap;transform:scaleX(0.87);transform-origin:right;color:#222;font-size:10px;">4</div>
<div style="right:1009px;top:491.4px;height:20px;line-height:20px;white-space:nowrap;transform:scaleX(0.87);transform-origin:right;color:#222;font-size:10px;">29<span style="display:inline-block;width:2px"></span>413</div>
<div style="right:936px;top:491.4px;height:20px;line-height:20px;white-space:nowrap;transform:scaleX(0.87);transform-origin:right;color:#222;font-size:10px;">538</div>
<div style="left:1030px;top:496px;width:3.8px;height:12px;background:linear-gradient(90deg,#5cb85c,#e8f5e8);border:1px solid #4ca64c;box-sizing:border-box"></div>
<div style="left:1030px;top:494px;width:1px;height:16px;background:repeating-linear-gradient(180deg,#222 0 2px,transparent 2px 3px)"></div>
<div style="right:837px;top:491.4px;height:20px;line-height:20px;white-space:nowrap;transform:scaleX(0.87);transform-origin:right;color:#222;font-size:10px;">+2%</div>
<div style="left:1091px;top:494px;width:147px;height:15px;background:#fff"></div>
<div style="left:1091px;top:509px;width:147px;height:1px;background:#d9d9d9"></div>
<div style="left:1164px;top:494px;width:1px;height:16px;background:#d9d9d9"></div>
<div style="left:1238px;top:494px;width:1px;height:16px;background:#d9d9d9"></div>
<div style="right:752px;top:491.4px;height:20px;line-height:20px;white-space:nowrap;transform:scaleX(0.87);transform-origin:right;color:#222;font-size:10px;">6</div>
<div style="right:678px;top:491.4px;height:20px;line-height:20px;white-space:nowrap;transform:scaleX(0.87);transform-origin:right;color:#222;font-size:10px;">28<span style="display:inline-block;width:2px"></span>875</div>
<div style="left:127px;top:510px;width:290px;height:16px;background:#fff"></div>
<div style="left:127px;top:526px;width:290px;height:1px;background:#d9d9d9"></div>
<div style="left:156px;top:507.9px;height:20px;line-height:20px;white-space:nowrap;transform:scaleX(0.87);transform-origin:left;color:#222;font-size:10px;">G10</div>
<div style="left:430px;top:510px;width:319px;height:16px;background:#fff"></div>
<div style="left:430px;top:526px;width:319px;height:1px;background:#d9d9d9"></div>
<div style="left:503px;top:510px;width:1px;height:17px;background:#d9d9d9"></div>
<div style="left:577px;top:510px;width:1px;height:17px;background:#d9d9d9"></div>
<div style="left:650px;top:510px;width:1px;height:17px;background:#d9d9d9"></div>
<div style="left:749px;top:510px;width:1px;height:17px;background:#d9d9d9"></div>
<div style="right:1413px;top:507.9px;height:20px;line-height:20px;white-space:nowrap;transform:scaleX(0.87);transform-origin:right;color:#222;font-size:10px;">1</div>
<div style="right:1339px;top:507.9px;height:20px;line-height:20px;white-space:nowrap;transform:scaleX(0.87);transform-origin:right;color:#222;font-size:10px;">51<span style="display:inline-block;width:2px"></span>833</div>
<div style="right:1266px;top:507.9px;height:20px;line-height:20px;white-space:nowrap;transform:scaleX(0.87);transform-origin:right;color:#222;font-size:10px;">0</div>
<div style="left:700px;top:510px;width:1px;height:17px;background:repeating-linear-gradient(180deg,#222 0 2px,transparent 2px 3px)"></div>
<div style="right:1167px;top:507.9px;height:20px;line-height:20px;white-space:nowrap;transform:scaleX(0.87);transform-origin:right;color:#222;font-size:10px;">0%</div>
<div style="left:760px;top:510px;width:319px;height:16px;background:#fff"></div>
<div style="left:760px;top:526px;width:319px;height:1px;background:#d9d9d9"></div>
<div style="left:833px;top:510px;width:1px;height:17px;background:#d9d9d9"></div>
<div style="left:907px;top:510px;width:1px;height:17px;background:#d9d9d9"></div>
<div style="left:980px;top:510px;width:1px;height:17px;background:#d9d9d9"></div>
<div style="left:1079px;top:510px;width:1px;height:17px;background:#d9d9d9"></div>
<div style="left:1091px;top:510px;width:147px;height:16px;background:#fff"></div>
<div style="left:1091px;top:526px;width:147px;height:1px;background:#d9d9d9"></div>
<div style="left:1164px;top:510px;width:1px;height:17px;background:#d9d9d9"></div>
<div style="left:1238px;top:510px;width:1px;height:17px;background:#d9d9d9"></div>
<div style="right:752px;top:507.9px;height:20px;line-height:20px;white-space:nowrap;transform:scaleX(0.87);transform-origin:right;color:#222;font-size:10px;">1</div>
<div style="right:678px;top:507.9px;height:20px;line-height:20px;white-space:nowrap;transform:scaleX(0.87);transform-origin:right;color:#222;font-size:10px;">51<span style="display:inline-block;width:2px"></span>833</div>
<div style="left:127px;top:527px;width:290px;height:15px;background:#c1e4f5"></div>
<div style="left:127px;top:542px;width:290px;height:1px;background:#d9d9d9"></div>
<div style="left:143px;top:524.4px;height:20px;line-height:20px;white-space:nowrap;transform:scaleX(0.87);transform-origin:left;color:#111;font-size:10px;font-weight:bold;">KADRA ZARZĄDZAJĄCA B</div>
<div style="left:430px;top:527px;width:319px;height:15px;background:#c1e4f5"></div>
<div style="left:430px;top:542px;width:319px;height:1px;background:#d9d9d9"></div>
<div style="left:503px;top:527px;width:1px;height:16px;background:#d9d9d9"></div>
<div style="left:577px;top:527px;width:1px;height:16px;background:#d9d9d9"></div>
<div style="left:650px;top:527px;width:1px;height:16px;background:#d9d9d9"></div>
<div style="left:749px;top:527px;width:1px;height:16px;background:#d9d9d9"></div>
<div style="right:1413px;top:524.4px;height:20px;line-height:20px;white-space:nowrap;transform:scaleX(0.87);transform-origin:right;color:#111;font-size:10px;font-weight:bold;">18</div>
<div style="right:1339px;top:524.4px;height:20px;line-height:20px;white-space:nowrap;transform:scaleX(0.87);transform-origin:right;color:#111;font-size:10px;font-weight:bold;">16<span style="display:inline-block;width:2px"></span>778</div>
<div style="right:1266px;top:524.4px;height:20px;line-height:20px;white-space:nowrap;transform:scaleX(0.87);transform-origin:right;color:#111;font-size:10px;font-weight:bold;">-285</div>
<div style="left:696.2px;top:529px;width:3.8px;height:12px;background:linear-gradient(90deg,#ffe8e8,#ff2020);border:1px solid #ff3030;box-sizing:border-box"></div>
<div style="left:700px;top:527px;width:1px;height:16px;background:repeating-linear-gradient(180deg,#222 0 2px,transparent 2px 3px)"></div>
<div style="right:1167px;top:524.4px;height:20px;line-height:20px;white-space:nowrap;transform:scaleX(0.87);transform-origin:right;color:#111;font-size:10px;font-weight:bold;">-2%</div>
<div style="left:760px;top:527px;width:319px;height:15px;background:#c1e4f5"></div>
<div style="left:760px;top:542px;width:319px;height:1px;background:#d9d9d9"></div>
<div style="left:833px;top:527px;width:1px;height:16px;background:#d9d9d9"></div>
<div style="left:907px;top:527px;width:1px;height:16px;background:#d9d9d9"></div>
<div style="left:980px;top:527px;width:1px;height:16px;background:#d9d9d9"></div>
<div style="left:1079px;top:527px;width:1px;height:16px;background:#d9d9d9"></div>
<div style="right:1083px;top:524.4px;height:20px;line-height:20px;white-space:nowrap;transform:scaleX(0.87);transform-origin:right;color:#111;font-size:10px;font-weight:bold;">6</div>
<div style="right:1009px;top:524.4px;height:20px;line-height:20px;white-space:nowrap;transform:scaleX(0.87);transform-origin:right;color:#111;font-size:10px;font-weight:bold;">17<span style="display:inline-block;width:2px"></span>917</div>
<div style="right:936px;top:524.4px;height:20px;line-height:20px;white-space:nowrap;transform:scaleX(0.87);transform-origin:right;color:#111;font-size:10px;font-weight:bold;">854</div>
<div style="left:1030px;top:529px;width:9.5px;height:12px;background:linear-gradient(90deg,#5cb85c,#e8f5e8);border:1px solid #4ca64c;box-sizing:border-box"></div>
<div style="left:1030px;top:527px;width:1px;height:16px;background:repeating-linear-gradient(180deg,#222 0 2px,transparent 2px 3px)"></div>
<div style="right:837px;top:524.4px;height:20px;line-height:20px;white-space:nowrap;transform:scaleX(0.87);transform-origin:right;color:#111;font-size:10px;font-weight:bold;">+5%</div>
<div style="left:1091px;top:527px;width:147px;height:15px;background:#c1e4f5"></div>
<div style="left:1091px;top:542px;width:147px;height:1px;background:#d9d9d9"></div>
<div style="left:1164px;top:527px;width:1px;height:16px;background:#d9d9d9"></div>
<div style="left:1238px;top:527px;width:1px;height:16px;background:#d9d9d9"></div>
<div style="right:752px;top:524.4px;height:20px;line-height:20px;white-space:nowrap;transform:scaleX(0.87);transform-origin:right;color:#111;font-size:10px;font-weight:bold;">24</div>
<div style="right:678px;top:524.4px;height:20px;line-height:20px;white-space:nowrap;transform:scaleX(0.87);transform-origin:right;color:#111;font-size:10px;font-weight:bold;">17<span style="display:inline-block;width:2px"></span>063</div>
<div style="left:127px;top:543px;width:290px;height:15px;background:#fff"></div>
<div style="left:127px;top:558px;width:290px;height:1px;background:#d9d9d9"></div>
<div style="left:156px;top:540.4px;height:20px;line-height:20px;white-space:nowrap;transform:scaleX(0.87);transform-origin:left;color:#222;font-size:10px;">G06</div>
<div style="left:430px;top:543px;width:319px;height:15px;background:#fff"></div>
<div style="left:430px;top:558px;width:319px;height:1px;background:#d9d9d9"></div>
<div style="left:503px;top:543px;width:1px;height:16px;background:#d9d9d9"></div>
<div style="left:577px;top:543px;width:1px;height:16px;background:#d9d9d9"></div>
<div style="left:650px;top:543px;width:1px;height:16px;background:#d9d9d9"></div>
<div style="left:749px;top:543px;width:1px;height:16px;background:#d9d9d9"></div>
<div style="right:1413px;top:540.4px;height:20px;line-height:20px;white-space:nowrap;transform:scaleX(0.87);transform-origin:right;color:#222;font-size:10px;">2</div>
<div style="right:1339px;top:540.4px;height:20px;line-height:20px;white-space:nowrap;transform:scaleX(0.87);transform-origin:right;color:#222;font-size:10px;">12<span style="display:inline-block;width:2px"></span>500</div>
<div style="right:1266px;top:540.4px;height:20px;line-height:20px;white-space:nowrap;transform:scaleX(0.87);transform-origin:right;color:#222;font-size:10px;">500</div>
<div style="left:700px;top:545px;width:7.6px;height:12px;background:linear-gradient(90deg,#5cb85c,#e8f5e8);border:1px solid #4ca64c;box-sizing:border-box"></div>
<div style="left:700px;top:543px;width:1px;height:16px;background:repeating-linear-gradient(180deg,#222 0 2px,transparent 2px 3px)"></div>
<div style="right:1167px;top:540.4px;height:20px;line-height:20px;white-space:nowrap;transform:scaleX(0.87);transform-origin:right;color:#222;font-size:10px;">+4%</div>
<div style="left:760px;top:543px;width:319px;height:15px;background:#fff"></div>
<div style="left:760px;top:558px;width:319px;height:1px;background:#d9d9d9"></div>
<div style="left:833px;top:543px;width:1px;height:16px;background:#d9d9d9"></div>
<div style="left:907px;top:543px;width:1px;height:16px;background:#d9d9d9"></div>
<div style="left:980px;top:543px;width:1px;height:16px;background:#d9d9d9"></div>
<div style="left:1079px;top:543px;width:1px;height:16px;background:#d9d9d9"></div>
<div style="right:1083px;top:540.4px;height:20px;line-height:20px;white-space:nowrap;transform:scaleX(0.87);transform-origin:right;color:#222;font-size:10px;">1</div>
<div style="right:1009px;top:540.4px;height:20px;line-height:20px;white-space:nowrap;transform:scaleX(0.87);transform-origin:right;color:#222;font-size:10px;">11<span style="display:inline-block;width:2px"></span>000</div>
<div style="right:936px;top:540.4px;height:20px;line-height:20px;white-space:nowrap;transform:scaleX(0.87);transform-origin:right;color:#222;font-size:10px;">-1<span style="display:inline-block;width:2px"></span>000</div>
<div style="left:1014.8px;top:545px;width:15.2px;height:12px;background:linear-gradient(90deg,#ffe8e8,#ff2020);border:1px solid #ff3030;box-sizing:border-box"></div>
<div style="left:1030px;top:543px;width:1px;height:16px;background:repeating-linear-gradient(180deg,#222 0 2px,transparent 2px 3px)"></div>
<div style="right:837px;top:540.4px;height:20px;line-height:20px;white-space:nowrap;transform:scaleX(0.87);transform-origin:right;color:#222;font-size:10px;">-8%</div>
<div style="left:1091px;top:543px;width:147px;height:15px;background:#fff"></div>
<div style="left:1091px;top:558px;width:147px;height:1px;background:#d9d9d9"></div>
<div style="left:1164px;top:543px;width:1px;height:16px;background:#d9d9d9"></div>
<div style="left:1238px;top:543px;width:1px;height:16px;background:#d9d9d9"></div>
<div style="right:752px;top:540.4px;height:20px;line-height:20px;white-space:nowrap;transform:scaleX(0.87);transform-origin:right;color:#222;font-size:10px;">3</div>
<div style="right:678px;top:540.4px;height:20px;line-height:20px;white-space:nowrap;transform:scaleX(0.87);transform-origin:right;color:#222;font-size:10px;">12<span style="display:inline-block;width:2px"></span>000</div>
<div style="left:127px;top:559px;width:290px;height:16px;background:#fff"></div>
<div style="left:127px;top:575px;width:290px;height:1px;background:#d9d9d9"></div>
<div style="left:156px;top:556.9px;height:20px;line-height:20px;white-space:nowrap;transform:scaleX(0.87);transform-origin:left;color:#222;font-size:10px;">G07</div>
<div style="left:430px;top:559px;width:319px;height:16px;background:#fff"></div>
<div style="left:430px;top:575px;width:319px;height:1px;background:#d9d9d9"></div>
<div style="left:503px;top:559px;width:1px;height:17px;background:#d9d9d9"></div>
<div style="left:577px;top:559px;width:1px;height:17px;background:#d9d9d9"></div>
<div style="left:650px;top:559px;width:1px;height:17px;background:#d9d9d9"></div>
<div style="left:749px;top:559px;width:1px;height:17px;background:#d9d9d9"></div>
<div style="right:1413px;top:556.9px;height:20px;line-height:20px;white-space:nowrap;transform:scaleX(0.87);transform-origin:right;color:#222;font-size:10px;">6</div>
<div style="right:1339px;top:556.9px;height:20px;line-height:20px;white-space:nowrap;transform:scaleX(0.87);transform-origin:right;color:#222;font-size:10px;">15<span style="display:inline-block;width:2px"></span>667</div>
<div style="right:1266px;top:556.9px;height:20px;line-height:20px;white-space:nowrap;transform:scaleX(0.87);transform-origin:right;color:#222;font-size:10px;">-1<span style="display:inline-block;width:2px"></span>083</div>
<div style="left:688.6px;top:561px;width:11.399999999999999px;height:13px;background:linear-gradient(90deg,#ffe8e8,#ff2020);border:1px solid #ff3030;box-sizing:border-box"></div>
<div style="left:700px;top:559px;width:1px;height:17px;background:repeating-linear-gradient(180deg,#222 0 2px,transparent 2px 3px)"></div>
<div style="right:1167px;top:556.9px;height:20px;line-height:20px;white-space:nowrap;transform:scaleX(0.87);transform-origin:right;color:#222;font-size:10px;">-6%</div>
<div style="left:760px;top:559px;width:319px;height:16px;background:#fff"></div>
<div style="left:760px;top:575px;width:319px;height:1px;background:#d9d9d9"></div>
<div style="left:833px;top:559px;width:1px;height:17px;background:#d9d9d9"></div>
<div style="left:907px;top:559px;width:1px;height:17px;background:#d9d9d9"></div>
<div style="left:980px;top:559px;width:1px;height:17px;background:#d9d9d9"></div>
<div style="left:1079px;top:559px;width:1px;height:17px;background:#d9d9d9"></div>
<div style="right:1083px;top:556.9px;height:20px;line-height:20px;white-space:nowrap;transform:scaleX(0.87);transform-origin:right;color:#222;font-size:10px;">2</div>
<div style="right:1009px;top:556.9px;height:20px;line-height:20px;white-space:nowrap;transform:scaleX(0.87);transform-origin:right;color:#222;font-size:10px;">20<span style="display:inline-block;width:2px"></span>000</div>
<div style="right:936px;top:556.9px;height:20px;line-height:20px;white-space:nowrap;transform:scaleX(0.87);transform-origin:right;color:#222;font-size:10px;">3<span style="display:inline-block;width:2px"></span>250</div>
<div style="left:1030px;top:561px;width:36.1px;height:13px;background:linear-gradient(90deg,#5cb85c,#e8f5e8);border:1px solid #4ca64c;box-sizing:border-box"></div>
<div style="left:1030px;top:559px;width:1px;height:17px;background:repeating-linear-gradient(180deg,#222 0 2px,transparent 2px 3px)"></div>
<div style="right:837px;top:556.9px;height:20px;line-height:20px;white-space:nowrap;transform:scaleX(0.87);transform-origin:right;color:#222;font-size:10px;">+19%</div>
<div style="left:1091px;top:559px;width:147px;height:16px;background:#fff"></div>
<div style="left:1091px;top:575px;width:147px;height:1px;background:#d9d9d9"></div>
<div style="left:1164px;top:559px;width:1px;height:17px;background:#d9d9d9"></div>
<div style="left:1238px;top:559px;width:1px;height:17px;background:#d9d9d9"></div>
<div style="right:752px;top:556.9px;height:20px;line-height:20px;white-space:nowrap;transform:scaleX(0.87);transform-origin:right;color:#222;font-size:10px;">8</div>
<div style="right:678px;top:556.9px;height:20px;line-height:20px;white-space:nowrap;transform:scaleX(0.87);transform-origin:right;color:#222;font-size:10px;">16<span style="display:inline-block;width:2px"></span>750</div>
<div style="left:127px;top:576px;width:290px;height:15px;background:#fff"></div>
<div style="left:127px;top:591px;width:290px;height:1px;background:#d9d9d9"></div>
<div style="left:156px;top:573.4px;height:20px;line-height:20px;white-space:nowrap;transform:scaleX(0.87);transform-origin:left;color:#222;font-size:10px;">G08</div>
<div style="left:430px;top:576px;width:319px;height:15px;background:#fff"></div>
<div style="left:430px;top:591px;width:319px;height:1px;background:#d9d9d9"></div>
<div style="left:503px;top:576px;width:1px;height:16px;background:#d9d9d9"></div>
<div style="left:577px;top:576px;width:1px;height:16px;background:#d9d9d9"></div>
<div style="left:650px;top:576px;width:1px;height:16px;background:#d9d9d9"></div>
<div style="left:749px;top:576px;width:1px;height:16px;background:#d9d9d9"></div>
<div style="right:1413px;top:573.4px;height:20px;line-height:20px;white-space:nowrap;transform:scaleX(0.87);transform-origin:right;color:#222;font-size:10px;">10</div>
<div style="right:1339px;top:573.4px;height:20px;line-height:20px;white-space:nowrap;transform:scaleX(0.87);transform-origin:right;color:#222;font-size:10px;">18<span style="display:inline-block;width:2px"></span>301</div>
<div style="right:1266px;top:573.4px;height:20px;line-height:20px;white-space:nowrap;transform:scaleX(0.87);transform-origin:right;color:#222;font-size:10px;">-123</div>
<div style="left:698.1px;top:578px;width:1.9px;height:12px;background:linear-gradient(90deg,#ffe8e8,#ff2020);border:1px solid #ff3030;box-sizing:border-box"></div>
<div style="left:700px;top:576px;width:1px;height:16px;background:repeating-linear-gradient(180deg,#222 0 2px,transparent 2px 3px)"></div>
<div style="right:1167px;top:573.4px;height:20px;line-height:20px;white-space:nowrap;transform:scaleX(0.87);transform-origin:right;color:#222;font-size:10px;">-1%</div>
<div style="left:760px;top:576px;width:319px;height:15px;background:#fff"></div>
<div style="left:760px;top:591px;width:319px;height:1px;background:#d9d9d9"></div>
<div style="left:833px;top:576px;width:1px;height:16px;background:#d9d9d9"></div>
<div style="left:907px;top:576px;width:1px;height:16px;background:#d9d9d9"></div>
<div style="left:980px;top:576px;width:1px;height:16px;background:#d9d9d9"></div>
<div style="left:1079px;top:576px;width:1px;height:16px;background:#d9d9d9"></div>
<div style="right:1083px;top:573.4px;height:20px;line-height:20px;white-space:nowrap;transform:scaleX(0.87);transform-origin:right;color:#222;font-size:10px;">3</div>
<div style="right:1009px;top:573.4px;height:20px;line-height:20px;white-space:nowrap;transform:scaleX(0.87);transform-origin:right;color:#222;font-size:10px;">18<span style="display:inline-block;width:2px"></span>833</div>
<div style="right:936px;top:573.4px;height:20px;line-height:20px;white-space:nowrap;transform:scaleX(0.87);transform-origin:right;color:#222;font-size:10px;">410</div>
<div style="left:1030px;top:578px;width:3.8px;height:12px;background:linear-gradient(90deg,#5cb85c,#e8f5e8);border:1px solid #4ca64c;box-sizing:border-box"></div>
<div style="left:1030px;top:576px;width:1px;height:16px;background:repeating-linear-gradient(180deg,#222 0 2px,transparent 2px 3px)"></div>
<div style="right:837px;top:573.4px;height:20px;line-height:20px;white-space:nowrap;transform:scaleX(0.87);transform-origin:right;color:#222;font-size:10px;">+2%</div>
<div style="left:1091px;top:576px;width:147px;height:15px;background:#fff"></div>
<div style="left:1091px;top:591px;width:147px;height:1px;background:#d9d9d9"></div>
<div style="left:1164px;top:576px;width:1px;height:16px;background:#d9d9d9"></div>
<div style="left:1238px;top:576px;width:1px;height:16px;background:#d9d9d9"></div>
<div style="right:752px;top:573.4px;height:20px;line-height:20px;white-space:nowrap;transform:scaleX(0.87);transform-origin:right;color:#222;font-size:10px;">13</div>
<div style="right:678px;top:573.4px;height:20px;line-height:20px;white-space:nowrap;transform:scaleX(0.87);transform-origin:right;color:#222;font-size:10px;">18<span style="display:inline-block;width:2px"></span>424</div>
<div style="left:127px;top:592px;width:290px;height:16px;background:#c1e4f5"></div>
<div style="left:127px;top:608px;width:290px;height:1px;background:#d9d9d9"></div>
<div style="left:143px;top:589.9px;height:20px;line-height:20px;white-space:nowrap;transform:scaleX(0.87);transform-origin:left;color:#111;font-size:10px;font-weight:bold;">KIEROWNICY</div>
<div style="left:430px;top:592px;width:319px;height:16px;background:#c1e4f5"></div>
<div style="left:430px;top:608px;width:319px;height:1px;background:#d9d9d9"></div>
<div style="left:503px;top:592px;width:1px;height:17px;background:#d9d9d9"></div>
<div style="left:577px;top:592px;width:1px;height:17px;background:#d9d9d9"></div>
<div style="left:650px;top:592px;width:1px;height:17px;background:#d9d9d9"></div>
<div style="left:749px;top:592px;width:1px;height:17px;background:#d9d9d9"></div>
<div style="right:1413px;top:589.9px;height:20px;line-height:20px;white-space:nowrap;transform:scaleX(0.87);transform-origin:right;color:#111;font-size:10px;font-weight:bold;">7</div>
<div style="right:1339px;top:589.9px;height:20px;line-height:20px;white-space:nowrap;transform:scaleX(0.87);transform-origin:right;color:#111;font-size:10px;font-weight:bold;">13<span style="display:inline-block;width:2px"></span>774</div>
<div style="right:1266px;top:589.9px;height:20px;line-height:20px;white-space:nowrap;transform:scaleX(0.87);transform-origin:right;color:#111;font-size:10px;font-weight:bold;">-221</div>
<div style="left:696.2px;top:594px;width:3.8px;height:13px;background:linear-gradient(90deg,#ffe8e8,#ff2020);border:1px solid #ff3030;box-sizing:border-box"></div>
<div style="left:700px;top:592px;width:1px;height:17px;background:repeating-linear-gradient(180deg,#222 0 2px,transparent 2px 3px)"></div>
<div style="right:1167px;top:589.9px;height:20px;line-height:20px;white-space:nowrap;transform:scaleX(0.87);transform-origin:right;color:#111;font-size:10px;font-weight:bold;">-2%</div>
<div style="left:760px;top:592px;width:319px;height:16px;background:#c1e4f5"></div>
<div style="left:760px;top:608px;width:319px;height:1px;background:#d9d9d9"></div>
<div style="left:833px;top:592px;width:1px;height:17px;background:#d9d9d9"></div>
<div style="left:907px;top:592px;width:1px;height:17px;background:#d9d9d9"></div>
<div style="left:980px;top:592px;width:1px;height:17px;background:#d9d9d9"></div>
<div style="left:1079px;top:592px;width:1px;height:17px;background:#d9d9d9"></div>
<div style="right:1083px;top:589.9px;height:20px;line-height:20px;white-space:nowrap;transform:scaleX(0.87);transform-origin:right;color:#111;font-size:10px;font-weight:bold;">4</div>
<div style="right:1009px;top:589.9px;height:20px;line-height:20px;white-space:nowrap;transform:scaleX(0.87);transform-origin:right;color:#111;font-size:10px;font-weight:bold;">14<span style="display:inline-block;width:2px"></span>381</div>
<div style="right:936px;top:589.9px;height:20px;line-height:20px;white-space:nowrap;transform:scaleX(0.87);transform-origin:right;color:#111;font-size:10px;font-weight:bold;">386</div>
<div style="left:1030px;top:594px;width:5.699999999999999px;height:13px;background:linear-gradient(90deg,#5cb85c,#e8f5e8);border:1px solid #4ca64c;box-sizing:border-box"></div>
<div style="left:1030px;top:592px;width:1px;height:17px;background:repeating-linear-gradient(180deg,#222 0 2px,transparent 2px 3px)"></div>
<div style="right:837px;top:589.9px;height:20px;line-height:20px;white-space:nowrap;transform:scaleX(0.87);transform-origin:right;color:#111;font-size:10px;font-weight:bold;">+3%</div>
<div style="left:1091px;top:592px;width:147px;height:16px;background:#c1e4f5"></div>
<div style="left:1091px;top:608px;width:147px;height:1px;background:#d9d9d9"></div>
<div style="left:1164px;top:592px;width:1px;height:17px;background:#d9d9d9"></div>
<div style="left:1238px;top:592px;width:1px;height:17px;background:#d9d9d9"></div>
<div style="right:752px;top:589.9px;height:20px;line-height:20px;white-space:nowrap;transform:scaleX(0.87);transform-origin:right;color:#111;font-size:10px;font-weight:bold;">11</div>
<div style="right:678px;top:589.9px;height:20px;line-height:20px;white-space:nowrap;transform:scaleX(0.87);transform-origin:right;color:#111;font-size:10px;font-weight:bold;">13<span style="display:inline-block;width:2px"></span>994</div>
<div style="left:127px;top:609px;width:290px;height:15px;background:#fff"></div>
<div style="left:127px;top:624px;width:290px;height:1px;background:#d9d9d9"></div>
<div style="left:156px;top:606.4px;height:20px;line-height:20px;white-space:nowrap;transform:scaleX(0.87);transform-origin:left;color:#222;font-size:10px;">G06</div>
<div style="left:430px;top:609px;width:319px;height:15px;background:#fff"></div>
<div style="left:430px;top:624px;width:319px;height:1px;background:#d9d9d9"></div>
<div style="left:503px;top:609px;width:1px;height:16px;background:#d9d9d9"></div>
<div style="left:577px;top:609px;width:1px;height:16px;background:#d9d9d9"></div>
<div style="left:650px;top:609px;width:1px;height:16px;background:#d9d9d9"></div>
<div style="left:749px;top:609px;width:1px;height:16px;background:#d9d9d9"></div>
<div style="right:1413px;top:606.4px;height:20px;line-height:20px;white-space:nowrap;transform:scaleX(0.87);transform-origin:right;color:#222;font-size:10px;">2</div>
<div style="right:1339px;top:606.4px;height:20px;line-height:20px;white-space:nowrap;transform:scaleX(0.87);transform-origin:right;color:#222;font-size:10px;">15<span style="display:inline-block;width:2px"></span>208</div>
<div style="right:1266px;top:606.4px;height:20px;line-height:20px;white-space:nowrap;transform:scaleX(0.87);transform-origin:right;color:#222;font-size:10px;">0</div>
<div style="left:700px;top:609px;width:1px;height:16px;background:repeating-linear-gradient(180deg,#222 0 2px,transparent 2px 3px)"></div>
<div style="right:1167px;top:606.4px;height:20px;line-height:20px;white-space:nowrap;transform:scaleX(0.87);transform-origin:right;color:#222;font-size:10px;">0%</div>
<div style="left:760px;top:609px;width:319px;height:15px;background:#fff"></div>
<div style="left:760px;top:624px;width:319px;height:1px;background:#d9d9d9"></div>
<div style="left:833px;top:609px;width:1px;height:16px;background:#d9d9d9"></div>
<div style="left:907px;top:609px;width:1px;height:16px;background:#d9d9d9"></div>
<div style="left:980px;top:609px;width:1px;height:16px;background:#d9d9d9"></div>
<div style="left:1079px;top:609px;width:1px;height:16px;background:#d9d9d9"></div>
<div style="left:1091px;top:609px;width:147px;height:15px;background:#fff"></div>
<div style="left:1091px;top:624px;width:147px;height:1px;background:#d9d9d9"></div>
<div style="left:1164px;top:609px;width:1px;height:16px;background:#d9d9d9"></div>
<div style="left:1238px;top:609px;width:1px;height:16px;background:#d9d9d9"></div>
<div style="right:752px;top:606.4px;height:20px;line-height:20px;white-space:nowrap;transform:scaleX(0.87);transform-origin:right;color:#222;font-size:10px;">2</div>
<div style="right:678px;top:606.4px;height:20px;line-height:20px;white-space:nowrap;transform:scaleX(0.87);transform-origin:right;color:#222;font-size:10px;">15<span style="display:inline-block;width:2px"></span>208</div>
<div style="left:127px;top:625px;width:290px;height:16px;background:#fff"></div>
<div style="left:127px;top:641px;width:290px;height:1px;background:#d9d9d9"></div>
<div style="left:156px;top:622.9px;height:20px;line-height:20px;white-space:nowrap;transform:scaleX(0.87);transform-origin:left;color:#222;font-size:10px;">G07</div>
<div style="left:430px;top:625px;width:319px;height:16px;background:#fff"></div>
<div style="left:430px;top:641px;width:319px;height:1px;background:#d9d9d9"></div>
<div style="left:503px;top:625px;width:1px;height:17px;background:#d9d9d9"></div>
<div style="left:577px;top:625px;width:1px;height:17px;background:#d9d9d9"></div>
<div style="left:650px;top:625px;width:1px;height:17px;background:#d9d9d9"></div>
<div style="left:749px;top:625px;width:1px;height:17px;background:#d9d9d9"></div>
<div style="right:1413px;top:622.9px;height:20px;line-height:20px;white-space:nowrap;transform:scaleX(0.87);transform-origin:right;color:#222;font-size:10px;">5</div>
<div style="right:1339px;top:622.9px;height:20px;line-height:20px;white-space:nowrap;transform:scaleX(0.87);transform-origin:right;color:#222;font-size:10px;">13<span style="display:inline-block;width:2px"></span>200</div>
<div style="right:1266px;top:622.9px;height:20px;line-height:20px;white-space:nowrap;transform:scaleX(0.87);transform-origin:right;color:#222;font-size:10px;">-525</div>
<div style="left:692.4px;top:627px;width:7.6px;height:13px;background:linear-gradient(90deg,#ffe8e8,#ff2020);border:1px solid #ff3030;box-sizing:border-box"></div>
<div style="left:700px;top:625px;width:1px;height:17px;background:repeating-linear-gradient(180deg,#222 0 2px,transparent 2px 3px)"></div>
<div style="right:1167px;top:622.9px;height:20px;line-height:20px;white-space:nowrap;transform:scaleX(0.87);transform-origin:right;color:#222;font-size:10px;">-4%</div>
<div style="left:760px;top:625px;width:319px;height:16px;background:#fff"></div>
<div style="left:760px;top:641px;width:319px;height:1px;background:#d9d9d9"></div>
<div style="left:833px;top:625px;width:1px;height:17px;background:#d9d9d9"></div>
<div style="left:907px;top:625px;width:1px;height:17px;background:#d9d9d9"></div>
<div style="left:980px;top:625px;width:1px;height:17px;background:#d9d9d9"></div>
<div style="left:1079px;top:625px;width:1px;height:17px;background:#d9d9d9"></div>
<div style="right:1083px;top:622.9px;height:20px;line-height:20px;white-space:nowrap;transform:scaleX(0.87);transform-origin:right;color:#222;font-size:10px;">4</div>
<div style="right:1009px;top:622.9px;height:20px;line-height:20px;white-space:nowrap;transform:scaleX(0.87);transform-origin:right;color:#222;font-size:10px;">14<span style="display:inline-block;width:2px"></span>381</div>
<div style="right:936px;top:622.9px;height:20px;line-height:20px;white-space:nowrap;transform:scaleX(0.87);transform-origin:right;color:#222;font-size:10px;">656</div>
<div style="left:1030px;top:627px;width:9.5px;height:13px;background:linear-gradient(90deg,#5cb85c,#e8f5e8);border:1px solid #4ca64c;box-sizing:border-box"></div>
<div style="left:1030px;top:625px;width:1px;height:17px;background:repeating-linear-gradient(180deg,#222 0 2px,transparent 2px 3px)"></div>
<div style="right:837px;top:622.9px;height:20px;line-height:20px;white-space:nowrap;transform:scaleX(0.87);transform-origin:right;color:#222;font-size:10px;">+5%</div>
<div style="left:1091px;top:625px;width:147px;height:16px;background:#fff"></div>
<div style="left:1091px;top:641px;width:147px;height:1px;background:#d9d9d9"></div>
<div style="left:1164px;top:625px;width:1px;height:17px;background:#d9d9d9"></div>
<div style="left:1238px;top:625px;width:1px;height:17px;background:#d9d9d9"></div>
<div style="right:752px;top:622.9px;height:20px;line-height:20px;white-space:nowrap;transform:scaleX(0.87);transform-origin:right;color:#222;font-size:10px;">9</div>
<div style="right:678px;top:622.9px;height:20px;line-height:20px;white-space:nowrap;transform:scaleX(0.87);transform-origin:right;color:#222;font-size:10px;">13<span style="display:inline-block;width:2px"></span>725</div>
<div style="left:127px;top:642px;width:290px;height:15px;background:#c1e4f5"></div>
<div style="left:127px;top:657px;width:290px;height:1px;background:#d9d9d9"></div>
<div style="left:143px;top:639.4px;height:20px;line-height:20px;white-space:nowrap;transform:scaleX(0.87);transform-origin:left;color:#111;font-size:10px;font-weight:bold;">KIEROWNICY OPERACYJNI</div>
<div style="left:430px;top:642px;width:319px;height:15px;background:#c1e4f5"></div>
<div style="left:430px;top:657px;width:319px;height:1px;background:#d9d9d9"></div>
<div style="left:503px;top:642px;width:1px;height:16px;background:#d9d9d9"></div>
<div style="left:577px;top:642px;width:1px;height:16px;background:#d9d9d9"></div>
<div style="left:650px;top:642px;width:1px;height:16px;background:#d9d9d9"></div>
<div style="left:749px;top:642px;width:1px;height:16px;background:#d9d9d9"></div>
<div style="right:1413px;top:639.4px;height:20px;line-height:20px;white-space:nowrap;transform:scaleX(0.87);transform-origin:right;color:#111;font-size:10px;font-weight:bold;">1</div>
<div style="right:1339px;top:639.4px;height:20px;line-height:20px;white-space:nowrap;transform:scaleX(0.87);transform-origin:right;color:#111;font-size:10px;font-weight:bold;">9<span style="display:inline-block;width:2px"></span>422</div>
<div style="right:1266px;top:639.4px;height:20px;line-height:20px;white-space:nowrap;transform:scaleX(0.87);transform-origin:right;color:#111;font-size:10px;font-weight:bold;">0</div>
<div style="left:700px;top:642px;width:1px;height:16px;background:repeating-linear-gradient(180deg,#222 0 2px,transparent 2px 3px)"></div>
<div style="right:1167px;top:639.4px;height:20px;line-height:20px;white-space:nowrap;transform:scaleX(0.87);transform-origin:right;color:#111;font-size:10px;font-weight:bold;">0%</div>
<div style="left:760px;top:642px;width:319px;height:15px;background:#c1e4f5"></div>
<div style="left:760px;top:657px;width:319px;height:1px;background:#d9d9d9"></div>
<div style="left:833px;top:642px;width:1px;height:16px;background:#d9d9d9"></div>
<div style="left:907px;top:642px;width:1px;height:16px;background:#d9d9d9"></div>
<div style="left:980px;top:642px;width:1px;height:16px;background:#d9d9d9"></div>
<div style="left:1079px;top:642px;width:1px;height:16px;background:#d9d9d9"></div>
<div style="left:1091px;top:642px;width:147px;height:15px;background:#c1e4f5"></div>
<div style="left:1091px;top:657px;width:147px;height:1px;background:#d9d9d9"></div>
<div style="left:1164px;top:642px;width:1px;height:16px;background:#d9d9d9"></div>
<div style="left:1238px;top:642px;width:1px;height:16px;background:#d9d9d9"></div>
<div style="right:752px;top:639.4px;height:20px;line-height:20px;white-space:nowrap;transform:scaleX(0.87);transform-origin:right;color:#111;font-size:10px;font-weight:bold;">1</div>
<div style="right:678px;top:639.4px;height:20px;line-height:20px;white-space:nowrap;transform:scaleX(0.87);transform-origin:right;color:#111;font-size:10px;font-weight:bold;">9<span style="display:inline-block;width:2px"></span>422</div>
<div style="left:127px;top:658px;width:290px;height:16px;background:#fff"></div>
<div style="left:127px;top:674px;width:290px;height:1px;background:#d9d9d9"></div>
<div style="left:156px;top:655.9px;height:20px;line-height:20px;white-space:nowrap;transform:scaleX(0.87);transform-origin:left;color:#222;font-size:10px;">G05</div>
<div style="left:430px;top:658px;width:319px;height:16px;background:#fff"></div>
<div style="left:430px;top:674px;width:319px;height:1px;background:#d9d9d9"></div>
<div style="left:503px;top:658px;width:1px;height:17px;background:#d9d9d9"></div>
<div style="left:577px;top:658px;width:1px;height:17px;background:#d9d9d9"></div>
<div style="left:650px;top:658px;width:1px;height:17px;background:#d9d9d9"></div>
<div style="left:749px;top:658px;width:1px;height:17px;background:#d9d9d9"></div>
<div style="right:1413px;top:655.9px;height:20px;line-height:20px;white-space:nowrap;transform:scaleX(0.87);transform-origin:right;color:#222;font-size:10px;">1</div>
<div style="right:1339px;top:655.9px;height:20px;line-height:20px;white-space:nowrap;transform:scaleX(0.87);transform-origin:right;color:#222;font-size:10px;">9<span style="display:inline-block;width:2px"></span>422</div>
<div style="right:1266px;top:655.9px;height:20px;line-height:20px;white-space:nowrap;transform:scaleX(0.87);transform-origin:right;color:#222;font-size:10px;">0</div>
<div style="left:700px;top:658px;width:1px;height:17px;background:repeating-linear-gradient(180deg,#222 0 2px,transparent 2px 3px)"></div>
<div style="right:1167px;top:655.9px;height:20px;line-height:20px;white-space:nowrap;transform:scaleX(0.87);transform-origin:right;color:#222;font-size:10px;">0%</div>
<div style="left:760px;top:658px;width:319px;height:16px;background:#fff"></div>
<div style="left:760px;top:674px;width:319px;height:1px;background:#d9d9d9"></div>
<div style="left:833px;top:658px;width:1px;height:17px;background:#d9d9d9"></div>
<div style="left:907px;top:658px;width:1px;height:17px;background:#d9d9d9"></div>
<div style="left:980px;top:658px;width:1px;height:17px;background:#d9d9d9"></div>
<div style="left:1079px;top:658px;width:1px;height:17px;background:#d9d9d9"></div>
<div style="left:1091px;top:658px;width:147px;height:16px;background:#fff"></div>
<div style="left:1091px;top:674px;width:147px;height:1px;background:#d9d9d9"></div>
<div style="left:1164px;top:658px;width:1px;height:17px;background:#d9d9d9"></div>
<div style="left:1238px;top:658px;width:1px;height:17px;background:#d9d9d9"></div>
<div style="right:752px;top:655.9px;height:20px;line-height:20px;white-space:nowrap;transform:scaleX(0.87);transform-origin:right;color:#222;font-size:10px;">1</div>
<div style="right:678px;top:655.9px;height:20px;line-height:20px;white-space:nowrap;transform:scaleX(0.87);transform-origin:right;color:#222;font-size:10px;">9<span style="display:inline-block;width:2px"></span>422</div>
<div style="left:127px;top:675px;width:290px;height:15px;background:#c1e4f5"></div>
<div style="left:127px;top:690px;width:290px;height:1px;background:#d9d9d9"></div>
<div style="left:143px;top:672.4px;height:20px;line-height:20px;white-space:nowrap;transform:scaleX(0.87);transform-origin:left;color:#111;font-size:10px;font-weight:bold;">KOORDYNATORZY</div>
<div style="left:430px;top:675px;width:319px;height:15px;background:#c1e4f5"></div>
<div style="left:430px;top:690px;width:319px;height:1px;background:#d9d9d9"></div>
<div style="left:503px;top:675px;width:1px;height:16px;background:#d9d9d9"></div>
<div style="left:577px;top:675px;width:1px;height:16px;background:#d9d9d9"></div>
<div style="left:650px;top:675px;width:1px;height:16px;background:#d9d9d9"></div>
<div style="left:749px;top:675px;width:1px;height:16px;background:#d9d9d9"></div>
<div style="right:1413px;top:672.4px;height:20px;line-height:20px;white-space:nowrap;transform:scaleX(0.87);transform-origin:right;color:#111;font-size:10px;font-weight:bold;">33</div>
<div style="right:1339px;top:672.4px;height:20px;line-height:20px;white-space:nowrap;transform:scaleX(0.87);transform-origin:right;color:#111;font-size:10px;font-weight:bold;">7<span style="display:inline-block;width:2px"></span>007</div>
<div style="right:1266px;top:672.4px;height:20px;line-height:20px;white-space:nowrap;transform:scaleX(0.87);transform-origin:right;color:#111;font-size:10px;font-weight:bold;">-43</div>
<div style="left:698.1px;top:677px;width:1.9px;height:12px;background:linear-gradient(90deg,#ffe8e8,#ff2020);border:1px solid #ff3030;box-sizing:border-box"></div>
<div style="left:700px;top:675px;width:1px;height:16px;background:repeating-linear-gradient(180deg,#222 0 2px,transparent 2px 3px)"></div>
<div style="right:1167px;top:672.4px;height:20px;line-height:20px;white-space:nowrap;transform:scaleX(0.87);transform-origin:right;color:#111;font-size:10px;font-weight:bold;">-1%</div>
<div style="left:760px;top:675px;width:319px;height:15px;background:#c1e4f5"></div>
<div style="left:760px;top:690px;width:319px;height:1px;background:#d9d9d9"></div>
<div style="left:833px;top:675px;width:1px;height:16px;background:#d9d9d9"></div>
<div style="left:907px;top:675px;width:1px;height:16px;background:#d9d9d9"></div>
<div style="left:980px;top:675px;width:1px;height:16px;background:#d9d9d9"></div>
<div style="left:1079px;top:675px;width:1px;height:16px;background:#d9d9d9"></div>
<div style="right:1083px;top:672.4px;height:20px;line-height:20px;white-space:nowrap;transform:scaleX(0.87);transform-origin:right;color:#111;font-size:10px;font-weight:bold;">27</div>
<div style="right:1009px;top:672.4px;height:20px;line-height:20px;white-space:nowrap;transform:scaleX(0.87);transform-origin:right;color:#111;font-size:10px;font-weight:bold;">7<span style="display:inline-block;width:2px"></span>103</div>
<div style="right:936px;top:672.4px;height:20px;line-height:20px;white-space:nowrap;transform:scaleX(0.87);transform-origin:right;color:#111;font-size:10px;font-weight:bold;">53</div>
<div style="left:1030px;top:677px;width:1.9px;height:12px;background:linear-gradient(90deg,#5cb85c,#e8f5e8);border:1px solid #4ca64c;box-sizing:border-box"></div>
<div style="left:1030px;top:675px;width:1px;height:16px;background:repeating-linear-gradient(180deg,#222 0 2px,transparent 2px 3px)"></div>
<div style="right:837px;top:672.4px;height:20px;line-height:20px;white-space:nowrap;transform:scaleX(0.87);transform-origin:right;color:#111;font-size:10px;font-weight:bold;">+1%</div>
<div style="left:1091px;top:675px;width:147px;height:15px;background:#c1e4f5"></div>
<div style="left:1091px;top:690px;width:147px;height:1px;background:#d9d9d9"></div>
<div style="left:1164px;top:675px;width:1px;height:16px;background:#d9d9d9"></div>
<div style="left:1238px;top:675px;width:1px;height:16px;background:#d9d9d9"></div>
<div style="right:752px;top:672.4px;height:20px;line-height:20px;white-space:nowrap;transform:scaleX(0.87);transform-origin:right;color:#111;font-size:10px;font-weight:bold;">60</div>
<div style="right:678px;top:672.4px;height:20px;line-height:20px;white-space:nowrap;transform:scaleX(0.87);transform-origin:right;color:#111;font-size:10px;font-weight:bold;">7<span style="display:inline-block;width:2px"></span>050</div>
<div style="left:127px;top:691px;width:290px;height:16px;background:#fff"></div>
<div style="left:127px;top:707px;width:290px;height:1px;background:#d9d9d9"></div>
<div style="left:156px;top:688.9px;height:20px;line-height:20px;white-space:nowrap;transform:scaleX(0.87);transform-origin:left;color:#222;font-size:10px;">G02</div>
<div style="left:430px;top:691px;width:319px;height:16px;background:#fff"></div>
<div style="left:430px;top:707px;width:319px;height:1px;background:#d9d9d9"></div>
<div style="left:503px;top:691px;width:1px;height:17px;background:#d9d9d9"></div>
<div style="left:577px;top:691px;width:1px;height:17px;background:#d9d9d9"></div>
<div style="left:650px;top:691px;width:1px;height:17px;background:#d9d9d9"></div>
<div style="left:749px;top:691px;width:1px;height:17px;background:#d9d9d9"></div>
<div style="right:1413px;top:688.9px;height:20px;line-height:20px;white-space:nowrap;transform:scaleX(0.87);transform-origin:right;color:#222;font-size:10px;">3</div>
<div style="right:1339px;top:688.9px;height:20px;line-height:20px;white-space:nowrap;transform:scaleX(0.87);transform-origin:right;color:#222;font-size:10px;">5<span style="display:inline-block;width:2px"></span>176</div>
<div style="right:1266px;top:688.9px;height:20px;line-height:20px;white-space:nowrap;transform:scaleX(0.87);transform-origin:right;color:#222;font-size:10px;">133</div>
<div style="left:700px;top:693px;width:5.699999999999999px;height:13px;background:linear-gradient(90deg,#5cb85c,#e8f5e8);border:1px solid #4ca64c;box-sizing:border-box"></div>
<div style="left:700px;top:691px;width:1px;height:17px;background:repeating-linear-gradient(180deg,#222 0 2px,transparent 2px 3px)"></div>
<div style="right:1167px;top:688.9px;height:20px;line-height:20px;white-space:nowrap;transform:scaleX(0.87);transform-origin:right;color:#222;font-size:10px;">+3%</div>
<div style="left:760px;top:691px;width:319px;height:16px;background:#fff"></div>
<div style="left:760px;top:707px;width:319px;height:1px;background:#d9d9d9"></div>
<div style="left:833px;top:691px;width:1px;height:17px;background:#d9d9d9"></div>
<div style="left:907px;top:691px;width:1px;height:17px;background:#d9d9d9"></div>
<div style="left:980px;top:691px;width:1px;height:17px;background:#d9d9d9"></div>
<div style="left:1079px;top:691px;width:1px;height:17px;background:#d9d9d9"></div>
<div style="right:1083px;top:688.9px;height:20px;line-height:20px;white-space:nowrap;transform:scaleX(0.87);transform-origin:right;color:#222;font-size:10px;">2</div>
<div style="right:1009px;top:688.9px;height:20px;line-height:20px;white-space:nowrap;transform:scaleX(0.87);transform-origin:right;color:#222;font-size:10px;">4<span style="display:inline-block;width:2px"></span>844</div>
<div style="right:936px;top:688.9px;height:20px;line-height:20px;white-space:nowrap;transform:scaleX(0.87);transform-origin:right;color:#222;font-size:10px;">-199</div>
<div style="left:1022.4px;top:693px;width:7.6px;height:13px;background:linear-gradient(90deg,#ffe8e8,#ff2020);border:1px solid #ff3030;box-sizing:border-box"></div>
<div style="left:1030px;top:691px;width:1px;height:17px;background:repeating-linear-gradient(180deg,#222 0 2px,transparent 2px 3px)"></div>
<div style="right:837px;top:688.9px;height:20px;line-height:20px;white-space:nowrap;transform:scaleX(0.87);transform-origin:right;color:#222;font-size:10px;">-4%</div>
<div style="left:1091px;top:691px;width:147px;height:16px;background:#fff"></div>
<div style="left:1091px;top:707px;width:147px;height:1px;background:#d9d9d9"></div>
<div style="left:1164px;top:691px;width:1px;height:17px;background:#d9d9d9"></div>
<div style="left:1238px;top:691px;width:1px;height:17px;background:#d9d9d9"></div>
<div style="right:752px;top:688.9px;height:20px;line-height:20px;white-space:nowrap;transform:scaleX(0.87);transform-origin:right;color:#222;font-size:10px;">5</div>
<div style="right:678px;top:688.9px;height:20px;line-height:20px;white-space:nowrap;transform:scaleX(0.87);transform-origin:right;color:#222;font-size:10px;">5<span style="display:inline-block;width:2px"></span>043</div>
<div style="left:127px;top:708px;width:290px;height:15px;background:#fff"></div>
<div style="left:127px;top:723px;width:290px;height:1px;background:#d9d9d9"></div>
<div style="left:156px;top:705.4px;height:20px;line-height:20px;white-space:nowrap;transform:scaleX(0.87);transform-origin:left;color:#222;font-size:10px;">G03</div>
<div style="left:430px;top:708px;width:319px;height:15px;background:#fff"></div>
<div style="left:430px;top:723px;width:319px;height:1px;background:#d9d9d9"></div>
<div style="left:503px;top:708px;width:1px;height:16px;background:#d9d9d9"></div>
<div style="left:577px;top:708px;width:1px;height:16px;background:#d9d9d9"></div>
<div style="left:650px;top:708px;width:1px;height:16px;background:#d9d9d9"></div>
<div style="left:749px;top:708px;width:1px;height:16px;background:#d9d9d9"></div>
<div style="right:1413px;top:705.4px;height:20px;line-height:20px;white-space:nowrap;transform:scaleX(0.87);transform-origin:right;color:#222;font-size:10px;">8</div>
<div style="right:1339px;top:705.4px;height:20px;line-height:20px;white-space:nowrap;transform:scaleX(0.87);transform-origin:right;color:#222;font-size:10px;">4<span style="display:inline-block;width:2px"></span>716</div>
<div style="right:1266px;top:705.4px;height:20px;line-height:20px;white-space:nowrap;transform:scaleX(0.87);transform-origin:right;color:#222;font-size:10px;">-1<span style="display:inline-block;width:2px"></span>040</div>
<div style="left:665.8px;top:710px;width:34.199999999999996px;height:12px;background:linear-gradient(90deg,#ffe8e8,#ff2020);border:1px solid #ff3030;box-sizing:border-box"></div>
<div style="left:700px;top:708px;width:1px;height:16px;background:repeating-linear-gradient(180deg,#222 0 2px,transparent 2px 3px)"></div>
<div style="right:1167px;top:705.4px;height:20px;line-height:20px;white-space:nowrap;transform:scaleX(0.87);transform-origin:right;color:#222;font-size:10px;">-18%</div>
<div style="left:760px;top:708px;width:319px;height:15px;background:#fff"></div>
<div style="left:760px;top:723px;width:319px;height:1px;background:#d9d9d9"></div>
<div style="left:833px;top:708px;width:1px;height:16px;background:#d9d9d9"></div>
<div style="left:907px;top:708px;width:1px;height:16px;background:#d9d9d9"></div>
<div style="left:980px;top:708px;width:1px;height:16px;background:#d9d9d9"></div>
<div style="left:1079px;top:708px;width:1px;height:16px;background:#d9d9d9"></div>
<div style="right:1083px;top:705.4px;height:20px;line-height:20px;white-space:nowrap;transform:scaleX(0.87);transform-origin:right;color:#222;font-size:10px;">7</div>
<div style="right:1009px;top:705.4px;height:20px;line-height:20px;white-space:nowrap;transform:scaleX(0.87);transform-origin:right;color:#222;font-size:10px;">6<span style="display:inline-block;width:2px"></span>944</div>
<div style="right:936px;top:705.4px;height:20px;line-height:20px;white-space:nowrap;transform:scaleX(0.87);transform-origin:right;color:#222;font-size:10px;">1<span style="display:inline-block;width:2px"></span>188</div>
<div style="left:1030px;top:710px;width:39.9px;height:12px;background:linear-gradient(90deg,#5cb85c,#e8f5e8);border:1px solid #4ca64c;box-sizing:border-box"></div>
<div style="left:1030px;top:708px;width:1px;height:16px;background:repeating-linear-gradient(180deg,#222 0 2px,transparent 2px 3px)"></div>
<div style="right:837px;top:705.4px;height:20px;line-height:20px;white-space:nowrap;transform:scaleX(0.87);transform-origin:right;color:#222;font-size:10px;">+21%</div>
<div style="left:1091px;top:708px;width:147px;height:15px;background:#fff"></div>
<div style="left:1091px;top:723px;width:147px;height:1px;background:#d9d9d9"></div>
<div style="left:1164px;top:708px;width:1px;height:16px;background:#d9d9d9"></div>
<div style="left:1238px;top:708px;width:1px;height:16px;background:#d9d9d9"></div>
<div style="right:752px;top:705.4px;height:20px;line-height:20px;white-space:nowrap;transform:scaleX(0.87);transform-origin:right;color:#222;font-size:10px;">15</div>
<div style="right:678px;top:705.4px;height:20px;line-height:20px;white-space:nowrap;transform:scaleX(0.87);transform-origin:right;color:#222;font-size:10px;">5<span style="display:inline-block;width:2px"></span>755</div>
<div style="left:127px;top:724px;width:290px;height:16px;background:#fff"></div>
<div style="left:127px;top:740px;width:290px;height:1px;background:#d9d9d9"></div>
<div style="left:156px;top:721.9px;height:20px;line-height:20px;white-space:nowrap;transform:scaleX(0.87);transform-origin:left;color:#222;font-size:10px;">G04</div>
<div style="left:430px;top:724px;width:319px;height:16px;background:#fff"></div>
<div style="left:430px;top:740px;width:319px;height:1px;background:#d9d9d9"></div>
<div style="left:503px;top:724px;width:1px;height:17px;background:#d9d9d9"></div>
<div style="left:577px;top:724px;width:1px;height:17px;background:#d9d9d9"></div>
<div style="left:650px;top:724px;width:1px;height:17px;background:#d9d9d9"></div>
<div style="left:749px;top:724px;width:1px;height:17px;background:#d9d9d9"></div>
<div style="right:1413px;top:721.9px;height:20px;line-height:20px;white-space:nowrap;transform:scaleX(0.87);transform-origin:right;color:#222;font-size:10px;">3</div>
<div style="right:1339px;top:721.9px;height:20px;line-height:20px;white-space:nowrap;transform:scaleX(0.87);transform-origin:right;color:#222;font-size:10px;">6<span style="display:inline-block;width:2px"></span>233</div>
<div style="right:1266px;top:721.9px;height:20px;line-height:20px;white-space:nowrap;transform:scaleX(0.87);transform-origin:right;color:#222;font-size:10px;">-708</div>
<div style="left:681.0px;top:726px;width:19.0px;height:13px;background:linear-gradient(90deg,#ffe8e8,#ff2020);border:1px solid #ff3030;box-sizing:border-box"></div>
<div style="left:700px;top:724px;width:1px;height:17px;background:repeating-linear-gradient(180deg,#222 0 2px,transparent 2px 3px)"></div>
<div style="right:1167px;top:721.9px;height:20px;line-height:20px;white-space:nowrap;transform:scaleX(0.87);transform-origin:right;color:#222;font-size:10px;">-10%</div>
<div style="left:760px;top:724px;width:319px;height:16px;background:#fff"></div>
<div style="left:760px;top:740px;width:319px;height:1px;background:#d9d9d9"></div>
<div style="left:833px;top:724px;width:1px;height:17px;background:#d9d9d9"></div>
<div style="left:907px;top:724px;width:1px;height:17px;background:#d9d9d9"></div>
<div style="left:980px;top:724px;width:1px;height:17px;background:#d9d9d9"></div>
<div style="left:1079px;top:724px;width:1px;height:17px;background:#d9d9d9"></div>
<div style="right:1083px;top:721.9px;height:20px;line-height:20px;white-space:nowrap;transform:scaleX(0.87);transform-origin:right;color:#222;font-size:10px;">5</div>
<div style="right:1009px;top:721.9px;height:20px;line-height:20px;white-space:nowrap;transform:scaleX(0.87);transform-origin:right;color:#222;font-size:10px;">7<span style="display:inline-block;width:2px"></span>367</div>
<div style="right:936px;top:721.9px;height:20px;line-height:20px;white-space:nowrap;transform:scaleX(0.87);transform-origin:right;color:#222;font-size:10px;">425</div>
<div style="left:1030px;top:726px;width:11.399999999999999px;height:13px;background:linear-gradient(90deg,#5cb85c,#e8f5e8);border:1px solid #4ca64c;box-sizing:border-box"></div>
<div style="left:1030px;top:724px;width:1px;height:17px;background:repeating-linear-gradient(180deg,#222 0 2px,transparent 2px 3px)"></div>
<div style="right:837px;top:721.9px;height:20px;line-height:20px;white-space:nowrap;transform:scaleX(0.87);transform-origin:right;color:#222;font-size:10px;">+6%</div>
<div style="left:1091px;top:724px;width:147px;height:16px;background:#fff"></div>
<div style="left:1091px;top:740px;width:147px;height:1px;background:#d9d9d9"></div>
<div style="left:1164px;top:724px;width:1px;height:17px;background:#d9d9d9"></div>
<div style="left:1238px;top:724px;width:1px;height:17px;background:#d9d9d9"></div>
<div style="right:752px;top:721.9px;height:20px;line-height:20px;white-space:nowrap;transform:scaleX(0.87);transform-origin:right;color:#222;font-size:10px;">8</div>
<div style="right:678px;top:721.9px;height:20px;line-height:20px;white-space:nowrap;transform:scaleX(0.87);transform-origin:right;color:#222;font-size:10px;">6<span style="display:inline-block;width:2px"></span>942</div>
<div style="left:127px;top:741px;width:290px;height:15px;background:#fff"></div>
<div style="left:127px;top:756px;width:290px;height:1px;background:#d9d9d9"></div>
<div style="left:156px;top:738.4px;height:20px;line-height:20px;white-space:nowrap;transform:scaleX(0.87);transform-origin:left;color:#222;font-size:10px;">G05</div>
<div style="left:430px;top:741px;width:319px;height:15px;background:#fff"></div>
<div style="left:430px;top:756px;width:319px;height:1px;background:#d9d9d9"></div>
<div style="left:503px;top:741px;width:1px;height:16px;background:#d9d9d9"></div>
<div style="left:577px;top:741px;width:1px;height:16px;background:#d9d9d9"></div>
<div style="left:650px;top:741px;width:1px;height:16px;background:#d9d9d9"></div>
<div style="left:749px;top:741px;width:1px;height:16px;background:#d9d9d9"></div>
<div style="right:1413px;top:738.4px;height:20px;line-height:20px;white-space:nowrap;transform:scaleX(0.87);transform-origin:right;color:#222;font-size:10px;">13</div>
<div style="right:1339px;top:738.4px;height:20px;line-height:20px;white-space:nowrap;transform:scaleX(0.87);transform-origin:right;color:#222;font-size:10px;">7<span style="display:inline-block;width:2px"></span>872</div>
<div style="right:1266px;top:738.4px;height:20px;line-height:20px;white-space:nowrap;transform:scaleX(0.87);transform-origin:right;color:#222;font-size:10px;">438</div>
<div style="left:700px;top:743px;width:11.399999999999999px;height:12px;background:linear-gradient(90deg,#5cb85c,#e8f5e8);border:1px solid #4ca64c;box-sizing:border-box"></div>
<div style="left:700px;top:741px;width:1px;height:16px;background:repeating-linear-gradient(180deg,#222 0 2px,transparent 2px 3px)"></div>
<div style="right:1167px;top:738.4px;height:20px;line-height:20px;white-space:nowrap;transform:scaleX(0.87);transform-origin:right;color:#222;font-size:10px;">+6%</div>
<div style="left:760px;top:741px;width:319px;height:15px;background:#fff"></div>
<div style="left:760px;top:756px;width:319px;height:1px;background:#d9d9d9"></div>
<div style="left:833px;top:741px;width:1px;height:16px;background:#d9d9d9"></div>
<div style="left:907px;top:741px;width:1px;height:16px;background:#d9d9d9"></div>
<div style="left:980px;top:741px;width:1px;height:16px;background:#d9d9d9"></div>
<div style="left:1079px;top:741px;width:1px;height:16px;background:#d9d9d9"></div>
<div style="right:1083px;top:738.4px;height:20px;line-height:20px;white-space:nowrap;transform:scaleX(0.87);transform-origin:right;color:#222;font-size:10px;">10</div>
<div style="right:1009px;top:738.4px;height:20px;line-height:20px;white-space:nowrap;transform:scaleX(0.87);transform-origin:right;color:#222;font-size:10px;">6<span style="display:inline-block;width:2px"></span>865</div>
<div style="right:936px;top:738.4px;height:20px;line-height:20px;white-space:nowrap;transform:scaleX(0.87);transform-origin:right;color:#222;font-size:10px;">-569</div>
<div style="left:1014.8px;top:743px;width:15.2px;height:12px;background:linear-gradient(90deg,#ffe8e8,#ff2020);border:1px solid #ff3030;box-sizing:border-box"></div>
<div style="left:1030px;top:741px;width:1px;height:16px;background:repeating-linear-gradient(180deg,#222 0 2px,transparent 2px 3px)"></div>
<div style="right:837px;top:738.4px;height:20px;line-height:20px;white-space:nowrap;transform:scaleX(0.87);transform-origin:right;color:#222;font-size:10px;">-8%</div>
<div style="left:1091px;top:741px;width:147px;height:15px;background:#fff"></div>
<div style="left:1091px;top:756px;width:147px;height:1px;background:#d9d9d9"></div>
<div style="left:1164px;top:741px;width:1px;height:16px;background:#d9d9d9"></div>
<div style="left:1238px;top:741px;width:1px;height:16px;background:#d9d9d9"></div>
<div style="right:752px;top:738.4px;height:20px;line-height:20px;white-space:nowrap;transform:scaleX(0.87);transform-origin:right;color:#222;font-size:10px;">23</div>
<div style="right:678px;top:738.4px;height:20px;line-height:20px;white-space:nowrap;transform:scaleX(0.87);transform-origin:right;color:#222;font-size:10px;">7<span style="display:inline-block;width:2px"></span>434</div>
<div style="left:127px;top:757px;width:290px;height:16px;background:#fff"></div>
<div style="left:127px;top:773px;width:290px;height:1px;background:#d9d9d9"></div>
<div style="left:156px;top:754.9px;height:20px;line-height:20px;white-space:nowrap;transform:scaleX(0.87);transform-origin:left;color:#222;font-size:10px;">G06</div>
<div style="left:430px;top:757px;width:319px;height:16px;background:#fff"></div>
<div style="left:430px;top:773px;width:319px;height:1px;background:#d9d9d9"></div>
<div style="left:503px;top:757px;width:1px;height:17px;background:#d9d9d9"></div>
<div style="left:577px;top:757px;width:1px;height:17px;background:#d9d9d9"></div>
<div style="left:650px;top:757px;width:1px;height:17px;background:#d9d9d9"></div>
<div style="left:749px;top:757px;width:1px;height:17px;background:#d9d9d9"></div>
<div style="right:1413px;top:754.9px;height:20px;line-height:20px;white-space:nowrap;transform:scaleX(0.87);transform-origin:right;color:#222;font-size:10px;">3</div>
<div style="right:1339px;top:754.9px;height:20px;line-height:20px;white-space:nowrap;transform:scaleX(0.87);transform-origin:right;color:#222;font-size:10px;">8<span style="display:inline-block;width:2px"></span>817</div>
<div style="right:1266px;top:754.9px;height:20px;line-height:20px;white-space:nowrap;transform:scaleX(0.87);transform-origin:right;color:#222;font-size:10px;">87</div>
<div style="left:700px;top:759px;width:1.9px;height:13px;background:linear-gradient(90deg,#5cb85c,#e8f5e8);border:1px solid #4ca64c;box-sizing:border-box"></div>
<div style="left:700px;top:757px;width:1px;height:17px;background:repeating-linear-gradient(180deg,#222 0 2px,transparent 2px 3px)"></div>
<div style="right:1167px;top:754.9px;height:20px;line-height:20px;white-space:nowrap;transform:scaleX(0.87);transform-origin:right;color:#222;font-size:10px;">+1%</div>
<div style="left:760px;top:757px;width:319px;height:16px;background:#fff"></div>
<div style="left:760px;top:773px;width:319px;height:1px;background:#d9d9d9"></div>
<div style="left:833px;top:757px;width:1px;height:17px;background:#d9d9d9"></div>
<div style="left:907px;top:757px;width:1px;height:17px;background:#d9d9d9"></div>
<div style="left:980px;top:757px;width:1px;height:17px;background:#d9d9d9"></div>
<div style="left:1079px;top:757px;width:1px;height:17px;background:#d9d9d9"></div>
<div style="right:1083px;top:754.9px;height:20px;line-height:20px;white-space:nowrap;transform:scaleX(0.87);transform-origin:right;color:#222;font-size:10px;">2</div>
<div style="right:1009px;top:754.9px;height:20px;line-height:20px;white-space:nowrap;transform:scaleX(0.87);transform-origin:right;color:#222;font-size:10px;">8<span style="display:inline-block;width:2px"></span>600</div>
<div style="right:936px;top:754.9px;height:20px;line-height:20px;white-space:nowrap;transform:scaleX(0.87);transform-origin:right;color:#222;font-size:10px;">-130</div>
<div style="left:1028.1px;top:759px;width:1.9px;height:13px;background:linear-gradient(90deg,#ffe8e8,#ff2020);border:1px solid #ff3030;box-sizing:border-box"></div>
<div style="left:1030px;top:757px;width:1px;height:17px;background:repeating-linear-gradient(180deg,#222 0 2px,transparent 2px 3px)"></div>
<div style="right:837px;top:754.9px;height:20px;line-height:20px;white-space:nowrap;transform:scaleX(0.87);transform-origin:right;color:#222;font-size:10px;">-1%</div>
<div style="left:1091px;top:757px;width:147px;height:16px;background:#fff"></div>
<div style="left:1091px;top:773px;width:147px;height:1px;background:#d9d9d9"></div>
<div style="left:1164px;top:757px;width:1px;height:17px;background:#d9d9d9"></div>
<div style="left:1238px;top:757px;width:1px;height:17px;background:#d9d9d9"></div>
<div style="right:752px;top:754.9px;height:20px;line-height:20px;white-space:nowrap;transform:scaleX(0.87);transform-origin:right;color:#222;font-size:10px;">5</div>
<div style="right:678px;top:754.9px;height:20px;line-height:20px;white-space:nowrap;transform:scaleX(0.87);transform-origin:right;color:#222;font-size:10px;">8<span style="display:inline-block;width:2px"></span>730</div>
<div style="left:127px;top:774px;width:290px;height:15px;background:#fff"></div>
<div style="left:127px;top:789px;width:290px;height:1px;background:#d9d9d9"></div>
<div style="left:156px;top:771.4px;height:20px;line-height:20px;white-space:nowrap;transform:scaleX(0.87);transform-origin:left;color:#222;font-size:10px;">G07</div>
<div style="left:430px;top:774px;width:319px;height:15px;background:#fff"></div>
<div style="left:430px;top:789px;width:319px;height:1px;background:#d9d9d9"></div>
<div style="left:503px;top:774px;width:1px;height:16px;background:#d9d9d9"></div>
<div style="left:577px;top:774px;width:1px;height:16px;background:#d9d9d9"></div>
<div style="left:650px;top:774px;width:1px;height:16px;background:#d9d9d9"></div>
<div style="left:749px;top:774px;width:1px;height:16px;background:#d9d9d9"></div>
<div style="right:1413px;top:771.4px;height:20px;line-height:20px;white-space:nowrap;transform:scaleX(0.87);transform-origin:right;color:#222;font-size:10px;">3</div>
<div style="right:1339px;top:771.4px;height:20px;line-height:20px;white-space:nowrap;transform:scaleX(0.87);transform-origin:right;color:#222;font-size:10px;">10<span style="display:inline-block;width:2px"></span>167</div>
<div style="right:1266px;top:771.4px;height:20px;line-height:20px;white-space:nowrap;transform:scaleX(0.87);transform-origin:right;color:#222;font-size:10px;">-158</div>
<div style="left:696.2px;top:776px;width:3.8px;height:12px;background:linear-gradient(90deg,#ffe8e8,#ff2020);border:1px solid #ff3030;box-sizing:border-box"></div>
<div style="left:700px;top:774px;width:1px;height:16px;background:repeating-linear-gradient(180deg,#222 0 2px,transparent 2px 3px)"></div>
<div style="right:1167px;top:771.4px;height:20px;line-height:20px;white-space:nowrap;transform:scaleX(0.87);transform-origin:right;color:#222;font-size:10px;">-2%</div>
<div style="left:760px;top:774px;width:319px;height:15px;background:#fff"></div>
<div style="left:760px;top:789px;width:319px;height:1px;background:#d9d9d9"></div>
<div style="left:833px;top:774px;width:1px;height:16px;background:#d9d9d9"></div>
<div style="left:907px;top:774px;width:1px;height:16px;background:#d9d9d9"></div>
<div style="left:980px;top:774px;width:1px;height:16px;background:#d9d9d9"></div>
<div style="left:1079px;top:774px;width:1px;height:16px;background:#d9d9d9"></div>
<div style="right:1083px;top:771.4px;height:20px;line-height:20px;white-space:nowrap;transform:scaleX(0.87);transform-origin:right;color:#222;font-size:10px;">1</div>
<div style="right:1009px;top:771.4px;height:20px;line-height:20px;white-space:nowrap;transform:scaleX(0.87);transform-origin:right;color:#222;font-size:10px;">10<span style="display:inline-block;width:2px"></span>800</div>
<div style="right:936px;top:771.4px;height:20px;line-height:20px;white-space:nowrap;transform:scaleX(0.87);transform-origin:right;color:#222;font-size:10px;">475</div>
<div style="left:1030px;top:776px;width:9.5px;height:12px;background:linear-gradient(90deg,#5cb85c,#e8f5e8);border:1px solid #4ca64c;box-sizing:border-box"></div>
<div style="left:1030px;top:774px;width:1px;height:16px;background:repeating-linear-gradient(180deg,#222 0 2px,transparent 2px 3px)"></div>
<div style="right:837px;top:771.4px;height:20px;line-height:20px;white-space:nowrap;transform:scaleX(0.87);transform-origin:right;color:#222;font-size:10px;">+5%</div>
<div style="left:1091px;top:774px;width:147px;height:15px;background:#fff"></div>
<div style="left:1091px;top:789px;width:147px;height:1px;background:#d9d9d9"></div>
<div style="left:1164px;top:774px;width:1px;height:16px;background:#d9d9d9"></div>
<div style="left:1238px;top:774px;width:1px;height:16px;background:#d9d9d9"></div>
<div style="right:752px;top:771.4px;height:20px;line-height:20px;white-space:nowrap;transform:scaleX(0.87);transform-origin:right;color:#222;font-size:10px;">4</div>
<div style="right:678px;top:771.4px;height:20px;line-height:20px;white-space:nowrap;transform:scaleX(0.87);transform-origin:right;color:#222;font-size:10px;">10<span style="display:inline-block;width:2px"></span>325</div>
<div style="left:127px;top:790px;width:290px;height:16px;background:#c1e4f5"></div>
<div style="left:127px;top:806px;width:290px;height:1px;background:#d9d9d9"></div>
<div style="left:143px;top:787.9px;height:20px;line-height:20px;white-space:nowrap;transform:scaleX(0.87);transform-origin:left;color:#111;font-size:10px;font-weight:bold;">MAGAZYN</div>
<div style="left:430px;top:790px;width:319px;height:16px;background:#c1e4f5"></div>
<div style="left:430px;top:806px;width:319px;height:1px;background:#d9d9d9"></div>
<div style="left:503px;top:790px;width:1px;height:17px;background:#d9d9d9"></div>
<div style="left:577px;top:790px;width:1px;height:17px;background:#d9d9d9"></div>
<div style="left:650px;top:790px;width:1px;height:17px;background:#d9d9d9"></div>
<div style="left:749px;top:790px;width:1px;height:17px;background:#d9d9d9"></div>
<div style="right:1413px;top:787.9px;height:20px;line-height:20px;white-space:nowrap;transform:scaleX(0.87);transform-origin:right;color:#111;font-size:10px;font-weight:bold;">100</div>
<div style="right:1339px;top:787.9px;height:20px;line-height:20px;white-space:nowrap;transform:scaleX(0.87);transform-origin:right;color:#111;font-size:10px;font-weight:bold;">3<span style="display:inline-block;width:2px"></span>395</div>
<div style="right:1266px;top:787.9px;height:20px;line-height:20px;white-space:nowrap;transform:scaleX(0.87);transform-origin:right;color:#111;font-size:10px;font-weight:bold;">38</div>
<div style="left:700px;top:792px;width:1.9px;height:13px;background:linear-gradient(90deg,#5cb85c,#e8f5e8);border:1px solid #4ca64c;box-sizing:border-box"></div>
<div style="left:700px;top:790px;width:1px;height:17px;background:repeating-linear-gradient(180deg,#222 0 2px,transparent 2px 3px)"></div>
<div style="right:1167px;top:787.9px;height:20px;line-height:20px;white-space:nowrap;transform:scaleX(0.87);transform-origin:right;color:#111;font-size:10px;font-weight:bold;">+1%</div>
<div style="left:760px;top:790px;width:319px;height:16px;background:#c1e4f5"></div>
<div style="left:760px;top:806px;width:319px;height:1px;background:#d9d9d9"></div>
<div style="left:833px;top:790px;width:1px;height:17px;background:#d9d9d9"></div>
<div style="left:907px;top:790px;width:1px;height:17px;background:#d9d9d9"></div>
<div style="left:980px;top:790px;width:1px;height:17px;background:#d9d9d9"></div>
<div style="left:1079px;top:790px;width:1px;height:17px;background:#d9d9d9"></div>
<div style="right:1083px;top:787.9px;height:20px;line-height:20px;white-space:nowrap;transform:scaleX(0.87);transform-origin:right;color:#111;font-size:10px;font-weight:bold;">52</div>
<div style="right:1009px;top:787.9px;height:20px;line-height:20px;white-space:nowrap;transform:scaleX(0.87);transform-origin:right;color:#111;font-size:10px;font-weight:bold;">3<span style="display:inline-block;width:2px"></span>285</div>
<div style="right:936px;top:787.9px;height:20px;line-height:20px;white-space:nowrap;transform:scaleX(0.87);transform-origin:right;color:#111;font-size:10px;font-weight:bold;">-72</div>
<div style="left:1026.2px;top:792px;width:3.8px;height:13px;background:linear-gradient(90deg,#ffe8e8,#ff2020);border:1px solid #ff3030;box-sizing:border-box"></div>
<div style="left:1030px;top:790px;width:1px;height:17px;background:repeating-linear-gradient(180deg,#222 0 2px,transparent 2px 3px)"></div>
<div style="right:837px;top:787.9px;height:20px;line-height:20px;white-space:nowrap;transform:scaleX(0.87);transform-origin:right;color:#111;font-size:10px;font-weight:bold;">-2%</div>
<div style="left:1091px;top:790px;width:147px;height:16px;background:#c1e4f5"></div>
<div style="left:1091px;top:806px;width:147px;height:1px;background:#d9d9d9"></div>
<div style="left:1164px;top:790px;width:1px;height:17px;background:#d9d9d9"></div>
<div style="left:1238px;top:790px;width:1px;height:17px;background:#d9d9d9"></div>
<div style="right:752px;top:787.9px;height:20px;line-height:20px;white-space:nowrap;transform:scaleX(0.87);transform-origin:right;color:#111;font-size:10px;font-weight:bold;">152</div>
<div style="right:678px;top:787.9px;height:20px;line-height:20px;white-space:nowrap;transform:scaleX(0.87);transform-origin:right;color:#111;font-size:10px;font-weight:bold;">3<span style="display:inline-block;width:2px"></span>357</div>
<div style="left:127px;top:807px;width:290px;height:15px;background:#fff"></div>
<div style="left:127px;top:822px;width:290px;height:1px;background:#d9d9d9"></div>
<div style="left:156px;top:804.4px;height:20px;line-height:20px;white-space:nowrap;transform:scaleX(0.87);transform-origin:left;color:#222;font-size:10px;">G01</div>
<div style="left:430px;top:807px;width:319px;height:15px;background:#fff"></div>
<div style="left:430px;top:822px;width:319px;height:1px;background:#d9d9d9"></div>
<div style="left:503px;top:807px;width:1px;height:16px;background:#d9d9d9"></div>
<div style="left:577px;top:807px;width:1px;height:16px;background:#d9d9d9"></div>
<div style="left:650px;top:807px;width:1px;height:16px;background:#d9d9d9"></div>
<div style="left:749px;top:807px;width:1px;height:16px;background:#d9d9d9"></div>
<div style="right:1413px;top:804.4px;height:20px;line-height:20px;white-space:nowrap;transform:scaleX(0.87);transform-origin:right;color:#222;font-size:10px;">99</div>
<div style="right:1339px;top:804.4px;height:20px;line-height:20px;white-space:nowrap;transform:scaleX(0.87);transform-origin:right;color:#222;font-size:10px;">3<span style="display:inline-block;width:2px"></span>389</div>
<div style="right:1266px;top:804.4px;height:20px;line-height:20px;white-space:nowrap;transform:scaleX(0.87);transform-origin:right;color:#222;font-size:10px;">43</div>
<div style="left:700px;top:809px;width:1.9px;height:12px;background:linear-gradient(90deg,#5cb85c,#e8f5e8);border:1px solid #4ca64c;box-sizing:border-box"></div>
<div style="left:700px;top:807px;width:1px;height:16px;background:repeating-linear-gradient(180deg,#222 0 2px,transparent 2px 3px)"></div>
<div style="right:1167px;top:804.4px;height:20px;line-height:20px;white-space:nowrap;transform:scaleX(0.87);transform-origin:right;color:#222;font-size:10px;">+1%</div>
<div style="left:760px;top:807px;width:319px;height:15px;background:#fff"></div>
<div style="left:760px;top:822px;width:319px;height:1px;background:#d9d9d9"></div>
<div style="left:833px;top:807px;width:1px;height:16px;background:#d9d9d9"></div>
<div style="left:907px;top:807px;width:1px;height:16px;background:#d9d9d9"></div>
<div style="left:980px;top:807px;width:1px;height:16px;background:#d9d9d9"></div>
<div style="left:1079px;top:807px;width:1px;height:16px;background:#d9d9d9"></div>
<div style="right:1083px;top:804.4px;height:20px;line-height:20px;white-space:nowrap;transform:scaleX(0.87);transform-origin:right;color:#222;font-size:10px;">50</div>
<div style="right:1009px;top:804.4px;height:20px;line-height:20px;white-space:nowrap;transform:scaleX(0.87);transform-origin:right;color:#222;font-size:10px;">3<span style="display:inline-block;width:2px"></span>262</div>
<div style="right:936px;top:804.4px;height:20px;line-height:20px;white-space:nowrap;transform:scaleX(0.87);transform-origin:right;color:#222;font-size:10px;">-84</div>
<div style="left:1024.3px;top:809px;width:5.699999999999999px;height:12px;background:linear-gradient(90deg,#ffe8e8,#ff2020);border:1px solid #ff3030;box-sizing:border-box"></div>
<div style="left:1030px;top:807px;width:1px;height:16px;background:repeating-linear-gradient(180deg,#222 0 2px,transparent 2px 3px)"></div>
<div style="right:837px;top:804.4px;height:20px;line-height:20px;white-space:nowrap;transform:scaleX(0.87);transform-origin:right;color:#222;font-size:10px;">-3%</div>
<div style="left:1091px;top:807px;width:147px;height:15px;background:#fff"></div>
<div style="left:1091px;top:822px;width:147px;height:1px;background:#d9d9d9"></div>
<div style="left:1164px;top:807px;width:1px;height:16px;background:#d9d9d9"></div>
<div style="left:1238px;top:807px;width:1px;height:16px;background:#d9d9d9"></div>
<div style="right:752px;top:804.4px;height:20px;line-height:20px;white-space:nowrap;transform:scaleX(0.87);transform-origin:right;color:#222;font-size:10px;">149</div>
<div style="right:678px;top:804.4px;height:20px;line-height:20px;white-space:nowrap;transform:scaleX(0.87);transform-origin:right;color:#222;font-size:10px;">3<span style="display:inline-block;width:2px"></span>346</div>
<div style="left:127px;top:823px;width:290px;height:15px;background:#fff"></div>
<div style="left:127px;top:838px;width:290px;height:1px;background:#d9d9d9"></div>
<div style="left:156px;top:820.4px;height:20px;line-height:20px;white-space:nowrap;transform:scaleX(0.87);transform-origin:left;color:#222;font-size:10px;">G02</div>
<div style="left:430px;top:823px;width:319px;height:15px;background:#fff"></div>
<div style="left:430px;top:838px;width:319px;height:1px;background:#d9d9d9"></div>
<div style="left:503px;top:823px;width:1px;height:16px;background:#d9d9d9"></div>
<div style="left:577px;top:823px;width:1px;height:16px;background:#d9d9d9"></div>
<div style="left:650px;top:823px;width:1px;height:16px;background:#d9d9d9"></div>
<div style="left:749px;top:823px;width:1px;height:16px;background:#d9d9d9"></div>
<div style="right:1413px;top:820.4px;height:20px;line-height:20px;white-space:nowrap;transform:scaleX(0.87);transform-origin:right;color:#222;font-size:10px;">1</div>
<div style="right:1339px;top:820.4px;height:20px;line-height:20px;white-space:nowrap;transform:scaleX(0.87);transform-origin:right;color:#222;font-size:10px;">3<span style="display:inline-block;width:2px"></span>920</div>
<div style="right:1266px;top:820.4px;height:20px;line-height:20px;white-space:nowrap;transform:scaleX(0.87);transform-origin:right;color:#222;font-size:10px;">43</div>
<div style="left:700px;top:825px;width:1.9px;height:12px;background:linear-gradient(90deg,#5cb85c,#e8f5e8);border:1px solid #4ca64c;box-sizing:border-box"></div>
<div style="left:700px;top:823px;width:1px;height:16px;background:repeating-linear-gradient(180deg,#222 0 2px,transparent 2px 3px)"></div>
<div style="right:1167px;top:820.4px;height:20px;line-height:20px;white-space:nowrap;transform:scaleX(0.87);transform-origin:right;color:#222;font-size:10px;">+1%</div>
<div style="left:760px;top:823px;width:319px;height:15px;background:#fff"></div>
<div style="left:760px;top:838px;width:319px;height:1px;background:#d9d9d9"></div>
<div style="left:833px;top:823px;width:1px;height:16px;background:#d9d9d9"></div>
<div style="left:907px;top:823px;width:1px;height:16px;background:#d9d9d9"></div>
<div style="left:980px;top:823px;width:1px;height:16px;background:#d9d9d9"></div>
<div style="left:1079px;top:823px;width:1px;height:16px;background:#d9d9d9"></div>
<div style="right:1083px;top:820.4px;height:20px;line-height:20px;white-space:nowrap;transform:scaleX(0.87);transform-origin:right;color:#222;font-size:10px;">2</div>
<div style="right:1009px;top:820.4px;height:20px;line-height:20px;white-space:nowrap;transform:scaleX(0.87);transform-origin:right;color:#222;font-size:10px;">3<span style="display:inline-block;width:2px"></span>856</div>
<div style="right:936px;top:820.4px;height:20px;line-height:20px;white-space:nowrap;transform:scaleX(0.87);transform-origin:right;color:#222;font-size:10px;">-21</div>
<div style="left:1028.1px;top:825px;width:1.9px;height:12px;background:linear-gradient(90deg,#ffe8e8,#ff2020);border:1px solid #ff3030;box-sizing:border-box"></div>
<div style="left:1030px;top:823px;width:1px;height:16px;background:repeating-linear-gradient(180deg,#222 0 2px,transparent 2px 3px)"></div>
<div style="right:837px;top:820.4px;height:20px;line-height:20px;white-space:nowrap;transform:scaleX(0.87);transform-origin:right;color:#222;font-size:10px;">-1%</div>
<div style="left:1091px;top:823px;width:147px;height:15px;background:#fff"></div>
<div style="left:1091px;top:838px;width:147px;height:1px;background:#d9d9d9"></div>
<div style="left:1164px;top:823px;width:1px;height:16px;background:#d9d9d9"></div>
<div style="left:1238px;top:823px;width:1px;height:16px;background:#d9d9d9"></div>
<div style="right:752px;top:820.4px;height:20px;line-height:20px;white-space:nowrap;transform:scaleX(0.87);transform-origin:right;color:#222;font-size:10px;">3</div>
<div style="right:678px;top:820.4px;height:20px;line-height:20px;white-space:nowrap;transform:scaleX(0.87);transform-origin:right;color:#222;font-size:10px;">3<span style="display:inline-block;width:2px"></span>877</div>
<div style="left:127px;top:839px;width:290px;height:16px;background:#c1e4f5"></div>
<div style="left:127px;top:855px;width:290px;height:1px;background:#d9d9d9"></div>
<div style="left:143px;top:836.9px;height:20px;line-height:20px;white-space:nowrap;transform:scaleX(0.87);transform-origin:left;color:#111;font-size:10px;font-weight:bold;">OBSŁUGA KLIENTA</div>
<div style="left:430px;top:839px;width:319px;height:16px;background:#c1e4f5"></div>
<div style="left:430px;top:855px;width:319px;height:1px;background:#d9d9d9"></div>
<div style="left:503px;top:839px;width:1px;height:17px;background:#d9d9d9"></div>
<div style="left:577px;top:839px;width:1px;height:17px;background:#d9d9d9"></div>
<div style="left:650px;top:839px;width:1px;height:17px;background:#d9d9d9"></div>
<div style="left:749px;top:839px;width:1px;height:17px;background:#d9d9d9"></div>
<div style="right:1413px;top:836.9px;height:20px;line-height:20px;white-space:nowrap;transform:scaleX(0.87);transform-origin:right;color:#111;font-size:10px;font-weight:bold;">30</div>
<div style="right:1339px;top:836.9px;height:20px;line-height:20px;white-space:nowrap;transform:scaleX(0.87);transform-origin:right;color:#111;font-size:10px;font-weight:bold;">4<span style="display:inline-block;width:2px"></span>161</div>
<div style="right:1266px;top:836.9px;height:20px;line-height:20px;white-space:nowrap;transform:scaleX(0.87);transform-origin:right;color:#111;font-size:10px;font-weight:bold;">-91</div>
<div style="left:696.2px;top:841px;width:3.8px;height:13px;background:linear-gradient(90deg,#ffe8e8,#ff2020);border:1px solid #ff3030;box-sizing:border-box"></div>
<div style="left:700px;top:839px;width:1px;height:17px;background:repeating-linear-gradient(180deg,#222 0 2px,transparent 2px 3px)"></div>
<div style="right:1167px;top:836.9px;height:20px;line-height:20px;white-space:nowrap;transform:scaleX(0.87);transform-origin:right;color:#111;font-size:10px;font-weight:bold;">-2%</div>
<div style="left:760px;top:839px;width:319px;height:16px;background:#c1e4f5"></div>
<div style="left:760px;top:855px;width:319px;height:1px;background:#d9d9d9"></div>
<div style="left:833px;top:839px;width:1px;height:17px;background:#d9d9d9"></div>
<div style="left:907px;top:839px;width:1px;height:17px;background:#d9d9d9"></div>
<div style="left:980px;top:839px;width:1px;height:17px;background:#d9d9d9"></div>
<div style="left:1079px;top:839px;width:1px;height:17px;background:#d9d9d9"></div>
<div style="right:1083px;top:836.9px;height:20px;line-height:20px;white-space:nowrap;transform:scaleX(0.87);transform-origin:right;color:#111;font-size:10px;font-weight:bold;">21</div>
<div style="right:1009px;top:836.9px;height:20px;line-height:20px;white-space:nowrap;transform:scaleX(0.87);transform-origin:right;color:#111;font-size:10px;font-weight:bold;">4<span style="display:inline-block;width:2px"></span>382</div>
<div style="right:936px;top:836.9px;height:20px;line-height:20px;white-space:nowrap;transform:scaleX(0.87);transform-origin:right;color:#111;font-size:10px;font-weight:bold;">130</div>
<div style="left:1030px;top:841px;width:5.699999999999999px;height:13px;background:linear-gradient(90deg,#5cb85c,#e8f5e8);border:1px solid #4ca64c;box-sizing:border-box"></div>
<div style="left:1030px;top:839px;width:1px;height:17px;background:repeating-linear-gradient(180deg,#222 0 2px,transparent 2px 3px)"></div>
<div style="right:837px;top:836.9px;height:20px;line-height:20px;white-space:nowrap;transform:scaleX(0.87);transform-origin:right;color:#111;font-size:10px;font-weight:bold;">+3%</div>
<div style="left:1091px;top:839px;width:147px;height:16px;background:#c1e4f5"></div>
<div style="left:1091px;top:855px;width:147px;height:1px;background:#d9d9d9"></div>
<div style="left:1164px;top:839px;width:1px;height:17px;background:#d9d9d9"></div>
<div style="left:1238px;top:839px;width:1px;height:17px;background:#d9d9d9"></div>
<div style="right:752px;top:836.9px;height:20px;line-height:20px;white-space:nowrap;transform:scaleX(0.87);transform-origin:right;color:#111;font-size:10px;font-weight:bold;">51</div>
<div style="right:678px;top:836.9px;height:20px;line-height:20px;white-space:nowrap;transform:scaleX(0.87);transform-origin:right;color:#111;font-size:10px;font-weight:bold;">4<span style="display:inline-block;width:2px"></span>252</div>
<div style="left:127px;top:856px;width:290px;height:15px;background:#fff"></div>
<div style="left:127px;top:871px;width:290px;height:1px;background:#d9d9d9"></div>
<div style="left:156px;top:853.4px;height:20px;line-height:20px;white-space:nowrap;transform:scaleX(0.87);transform-origin:left;color:#222;font-size:10px;">G02</div>
<div style="left:430px;top:856px;width:319px;height:15px;background:#fff"></div>
<div style="left:430px;top:871px;width:319px;height:1px;background:#d9d9d9"></div>
<div style="left:503px;top:856px;width:1px;height:16px;background:#d9d9d9"></div>
<div style="left:577px;top:856px;width:1px;height:16px;background:#d9d9d9"></div>
<div style="left:650px;top:856px;width:1px;height:16px;background:#d9d9d9"></div>
<div style="left:749px;top:856px;width:1px;height:16px;background:#d9d9d9"></div>
<div style="right:1413px;top:853.4px;height:20px;line-height:20px;white-space:nowrap;transform:scaleX(0.87);transform-origin:right;color:#222;font-size:10px;">1</div>
<div style="right:1339px;top:853.4px;height:20px;line-height:20px;white-space:nowrap;transform:scaleX(0.87);transform-origin:right;color:#222;font-size:10px;">4<span style="display:inline-block;width:2px"></span>400</div>
<div style="right:1266px;top:853.4px;height:20px;line-height:20px;white-space:nowrap;transform:scaleX(0.87);transform-origin:right;color:#222;font-size:10px;">320</div>
<div style="left:700px;top:858px;width:15.2px;height:12px;background:linear-gradient(90deg,#5cb85c,#e8f5e8);border:1px solid #4ca64c;box-sizing:border-box"></div>
<div style="left:700px;top:856px;width:1px;height:16px;background:repeating-linear-gradient(180deg,#222 0 2px,transparent 2px 3px)"></div>
<div style="right:1167px;top:853.4px;height:20px;line-height:20px;white-space:nowrap;transform:scaleX(0.87);transform-origin:right;color:#222;font-size:10px;">+8%</div>
<div style="left:760px;top:856px;width:319px;height:15px;background:#fff"></div>
<div style="left:760px;top:871px;width:319px;height:1px;background:#d9d9d9"></div>
<div style="left:833px;top:856px;width:1px;height:16px;background:#d9d9d9"></div>
<div style="left:907px;top:856px;width:1px;height:16px;background:#d9d9d9"></div>
<div style="left:980px;top:856px;width:1px;height:16px;background:#d9d9d9"></div>
<div style="left:1079px;top:856px;width:1px;height:16px;background:#d9d9d9"></div>
<div style="right:1083px;top:853.4px;height:20px;line-height:20px;white-space:nowrap;transform:scaleX(0.87);transform-origin:right;color:#222;font-size:10px;">2</div>
<div style="right:1009px;top:853.4px;height:20px;line-height:20px;white-space:nowrap;transform:scaleX(0.87);transform-origin:right;color:#222;font-size:10px;">3<span style="display:inline-block;width:2px"></span>943</div>
<div style="right:936px;top:853.4px;height:20px;line-height:20px;white-space:nowrap;transform:scaleX(0.87);transform-origin:right;color:#222;font-size:10px;">-137</div>
<div style="left:1024.3px;top:858px;width:5.699999999999999px;height:12px;background:linear-gradient(90deg,#ffe8e8,#ff2020);border:1px solid #ff3030;box-sizing:border-box"></div>
<div style="left:1030px;top:856px;width:1px;height:16px;background:repeating-linear-gradient(180deg,#222 0 2px,transparent 2px 3px)"></div>
<div style="right:837px;top:853.4px;height:20px;line-height:20px;white-space:nowrap;transform:scaleX(0.87);transform-origin:right;color:#222;font-size:10px;">-3%</div>
<div style="left:1091px;top:856px;width:147px;height:15px;background:#fff"></div>
<div style="left:1091px;top:871px;width:147px;height:1px;background:#d9d9d9"></div>
<div style="left:1164px;top:856px;width:1px;height:16px;background:#d9d9d9"></div>
<div style="left:1238px;top:856px;width:1px;height:16px;background:#d9d9d9"></div>
<div style="right:752px;top:853.4px;height:20px;line-height:20px;white-space:nowrap;transform:scaleX(0.87);transform-origin:right;color:#222;font-size:10px;">3</div>
<div style="right:678px;top:853.4px;height:20px;line-height:20px;white-space:nowrap;transform:scaleX(0.87);transform-origin:right;color:#222;font-size:10px;">4<span style="display:inline-block;width:2px"></span>080</div>
<div style="left:127px;top:872px;width:290px;height:16px;background:#fff"></div>
<div style="left:127px;top:888px;width:290px;height:1px;background:#d9d9d9"></div>
<div style="left:156px;top:869.9px;height:20px;line-height:20px;white-space:nowrap;transform:scaleX(0.87);transform-origin:left;color:#222;font-size:10px;">G03</div>
<div style="left:430px;top:872px;width:319px;height:16px;background:#fff"></div>
<div style="left:430px;top:888px;width:319px;height:1px;background:#d9d9d9"></div>
<div style="left:503px;top:872px;width:1px;height:17px;background:#d9d9d9"></div>
<div style="left:577px;top:872px;width:1px;height:17px;background:#d9d9d9"></div>
<div style="left:650px;top:872px;width:1px;height:17px;background:#d9d9d9"></div>
<div style="left:749px;top:872px;width:1px;height:17px;background:#d9d9d9"></div>
<div style="right:1413px;top:869.9px;height:20px;line-height:20px;white-space:nowrap;transform:scaleX(0.87);transform-origin:right;color:#222;font-size:10px;">29</div>
<div style="right:1339px;top:869.9px;height:20px;line-height:20px;white-space:nowrap;transform:scaleX(0.87);transform-origin:right;color:#222;font-size:10px;">4<span style="display:inline-block;width:2px"></span>155</div>
<div style="right:1266px;top:869.9px;height:20px;line-height:20px;white-space:nowrap;transform:scaleX(0.87);transform-origin:right;color:#222;font-size:10px;">-106</div>
<div style="left:696.2px;top:874px;width:3.8px;height:13px;background:linear-gradient(90deg,#ffe8e8,#ff2020);border:1px solid #ff3030;box-sizing:border-box"></div>
<div style="left:700px;top:872px;width:1px;height:17px;background:repeating-linear-gradient(180deg,#222 0 2px,transparent 2px 3px)"></div>
<div style="right:1167px;top:869.9px;height:20px;line-height:20px;white-space:nowrap;transform:scaleX(0.87);transform-origin:right;color:#222;font-size:10px;">-2%</div>
<div style="left:760px;top:872px;width:319px;height:16px;background:#fff"></div>
<div style="left:760px;top:888px;width:319px;height:1px;background:#d9d9d9"></div>
<div style="left:833px;top:872px;width:1px;height:17px;background:#d9d9d9"></div>
<div style="left:907px;top:872px;width:1px;height:17px;background:#d9d9d9"></div>
<div style="left:980px;top:872px;width:1px;height:17px;background:#d9d9d9"></div>
<div style="left:1079px;top:872px;width:1px;height:17px;background:#d9d9d9"></div>
<div style="right:1083px;top:869.9px;height:20px;line-height:20px;white-space:nowrap;transform:scaleX(0.87);transform-origin:right;color:#222;font-size:10px;">19</div>
<div style="right:1009px;top:869.9px;height:20px;line-height:20px;white-space:nowrap;transform:scaleX(0.87);transform-origin:right;color:#222;font-size:10px;">4<span style="display:inline-block;width:2px"></span>422</div>
<div style="right:936px;top:869.9px;height:20px;line-height:20px;white-space:nowrap;transform:scaleX(0.87);transform-origin:right;color:#222;font-size:10px;">161</div>
<div style="left:1030px;top:874px;width:7.6px;height:13px;background:linear-gradient(90deg,#5cb85c,#e8f5e8);border:1px solid #4ca64c;box-sizing:border-box"></div>
<div style="left:1030px;top:872px;width:1px;height:17px;background:repeating-linear-gradient(180deg,#222 0 2px,transparent 2px 3px)"></div>
<div style="right:837px;top:869.9px;height:20px;line-height:20px;white-space:nowrap;transform:scaleX(0.87);transform-origin:right;color:#222;font-size:10px;">+4%</div>
<div style="left:1091px;top:872px;width:147px;height:16px;background:#fff"></div>
<div style="left:1091px;top:888px;width:147px;height:1px;background:#d9d9d9"></div>
<div style="left:1164px;top:872px;width:1px;height:17px;background:#d9d9d9"></div>
<div style="left:1238px;top:872px;width:1px;height:17px;background:#d9d9d9"></div>
<div style="right:752px;top:869.9px;height:20px;line-height:20px;white-space:nowrap;transform:scaleX(0.87);transform-origin:right;color:#222;font-size:10px;">48</div>
<div style="right:678px;top:869.9px;height:20px;line-height:20px;white-space:nowrap;transform:scaleX(0.87);transform-origin:right;color:#222;font-size:10px;">4<span style="display:inline-block;width:2px"></span>261</div>
<div style="left:127px;top:889px;width:290px;height:15px;background:#c1e4f5"></div>
<div style="left:127px;top:904px;width:290px;height:1px;background:#d9d9d9"></div>
<div style="left:143px;top:886.4px;height:20px;line-height:20px;white-space:nowrap;transform:scaleX(0.87);transform-origin:left;color:#111;font-size:10px;font-weight:bold;">POZOSTAŁE</div>
<div style="left:430px;top:889px;width:319px;height:15px;background:#c1e4f5"></div>
<div style="left:430px;top:904px;width:319px;height:1px;background:#d9d9d9"></div>
<div style="left:503px;top:889px;width:1px;height:16px;background:#d9d9d9"></div>
<div style="left:577px;top:889px;width:1px;height:16px;background:#d9d9d9"></div>
<div style="left:650px;top:889px;width:1px;height:16px;background:#d9d9d9"></div>
<div style="left:749px;top:889px;width:1px;height:16px;background:#d9d9d9"></div>
<div style="right:1413px;top:886.4px;height:20px;line-height:20px;white-space:nowrap;transform:scaleX(0.87);transform-origin:right;color:#111;font-size:10px;font-weight:bold;">5</div>
<div style="right:1339px;top:886.4px;height:20px;line-height:20px;white-space:nowrap;transform:scaleX(0.87);transform-origin:right;color:#111;font-size:10px;font-weight:bold;">4<span style="display:inline-block;width:2px"></span>120</div>
<div style="right:1266px;top:886.4px;height:20px;line-height:20px;white-space:nowrap;transform:scaleX(0.87);transform-origin:right;color:#111;font-size:10px;font-weight:bold;">22</div>
<div style="left:700px;top:891px;width:1.9px;height:12px;background:linear-gradient(90deg,#5cb85c,#e8f5e8);border:1px solid #4ca64c;box-sizing:border-box"></div>
<div style="left:700px;top:889px;width:1px;height:16px;background:repeating-linear-gradient(180deg,#222 0 2px,transparent 2px 3px)"></div>
<div style="right:1167px;top:886.4px;height:20px;line-height:20px;white-space:nowrap;transform:scaleX(0.87);transform-origin:right;color:#111;font-size:10px;font-weight:bold;">+1%</div>
<div style="left:760px;top:889px;width:319px;height:15px;background:#c1e4f5"></div>
<div style="left:760px;top:904px;width:319px;height:1px;background:#d9d9d9"></div>
<div style="left:833px;top:889px;width:1px;height:16px;background:#d9d9d9"></div>
<div style="left:907px;top:889px;width:1px;height:16px;background:#d9d9d9"></div>
<div style="left:980px;top:889px;width:1px;height:16px;background:#d9d9d9"></div>
<div style="left:1079px;top:889px;width:1px;height:16px;background:#d9d9d9"></div>
<div style="right:1083px;top:886.4px;height:20px;line-height:20px;white-space:nowrap;transform:scaleX(0.87);transform-origin:right;color:#111;font-size:10px;font-weight:bold;">2</div>
<div style="right:1009px;top:886.4px;height:20px;line-height:20px;white-space:nowrap;transform:scaleX(0.87);transform-origin:right;color:#111;font-size:10px;font-weight:bold;">4<span style="display:inline-block;width:2px"></span>044</div>
<div style="right:936px;top:886.4px;height:20px;line-height:20px;white-space:nowrap;transform:scaleX(0.87);transform-origin:right;color:#111;font-size:10px;font-weight:bold;">-55</div>
<div style="left:1028.1px;top:891px;width:1.9px;height:12px;background:linear-gradient(90deg,#ffe8e8,#ff2020);border:1px solid #ff3030;box-sizing:border-box"></div>
<div style="left:1030px;top:889px;width:1px;height:16px;background:repeating-linear-gradient(180deg,#222 0 2px,transparent 2px 3px)"></div>
<div style="right:837px;top:886.4px;height:20px;line-height:20px;white-space:nowrap;transform:scaleX(0.87);transform-origin:right;color:#111;font-size:10px;font-weight:bold;">-1%</div>
<div style="left:1091px;top:889px;width:147px;height:15px;background:#c1e4f5"></div>
<div style="left:1091px;top:904px;width:147px;height:1px;background:#d9d9d9"></div>
<div style="left:1164px;top:889px;width:1px;height:16px;background:#d9d9d9"></div>
<div style="left:1238px;top:889px;width:1px;height:16px;background:#d9d9d9"></div>
<div style="right:752px;top:886.4px;height:20px;line-height:20px;white-space:nowrap;transform:scaleX(0.87);transform-origin:right;color:#111;font-size:10px;font-weight:bold;">7</div>
<div style="right:678px;top:886.4px;height:20px;line-height:20px;white-space:nowrap;transform:scaleX(0.87);transform-origin:right;color:#111;font-size:10px;font-weight:bold;">4<span style="display:inline-block;width:2px"></span>099</div>
<div style="left:127px;top:905px;width:290px;height:16px;background:#fff"></div>
<div style="left:127px;top:921px;width:290px;height:1px;background:#d9d9d9"></div>
<div style="left:156px;top:902.9px;height:20px;line-height:20px;white-space:nowrap;transform:scaleX(0.87);transform-origin:left;color:#222;font-size:10px;">G01</div>
<div style="left:430px;top:905px;width:319px;height:16px;background:#fff"></div>
<div style="left:430px;top:921px;width:319px;height:1px;background:#d9d9d9"></div>
<div style="left:503px;top:905px;width:1px;height:17px;background:#d9d9d9"></div>
<div style="left:577px;top:905px;width:1px;height:17px;background:#d9d9d9"></div>
<div style="left:650px;top:905px;width:1px;height:17px;background:#d9d9d9"></div>
<div style="left:749px;top:905px;width:1px;height:17px;background:#d9d9d9"></div>
<div style="right:1413px;top:902.9px;height:20px;line-height:20px;white-space:nowrap;transform:scaleX(0.87);transform-origin:right;color:#222;font-size:10px;">2</div>
<div style="right:1339px;top:902.9px;height:20px;line-height:20px;white-space:nowrap;transform:scaleX(0.87);transform-origin:right;color:#222;font-size:10px;">4<span style="display:inline-block;width:2px"></span>150</div>
<div style="right:1266px;top:902.9px;height:20px;line-height:20px;white-space:nowrap;transform:scaleX(0.87);transform-origin:right;color:#222;font-size:10px;">0</div>
<div style="left:700px;top:905px;width:1px;height:17px;background:repeating-linear-gradient(180deg,#222 0 2px,transparent 2px 3px)"></div>
<div style="right:1167px;top:902.9px;height:20px;line-height:20px;white-space:nowrap;transform:scaleX(0.87);transform-origin:right;color:#222;font-size:10px;">0%</div>
<div style="left:760px;top:905px;width:319px;height:16px;background:#fff"></div>
<div style="left:760px;top:921px;width:319px;height:1px;background:#d9d9d9"></div>
<div style="left:833px;top:905px;width:1px;height:17px;background:#d9d9d9"></div>
<div style="left:907px;top:905px;width:1px;height:17px;background:#d9d9d9"></div>
<div style="left:980px;top:905px;width:1px;height:17px;background:#d9d9d9"></div>
<div style="left:1079px;top:905px;width:1px;height:17px;background:#d9d9d9"></div>
<div style="left:1091px;top:905px;width:147px;height:16px;background:#fff"></div>
<div style="left:1091px;top:921px;width:147px;height:1px;background:#d9d9d9"></div>
<div style="left:1164px;top:905px;width:1px;height:17px;background:#d9d9d9"></div>
<div style="left:1238px;top:905px;width:1px;height:17px;background:#d9d9d9"></div>
<div style="right:752px;top:902.9px;height:20px;line-height:20px;white-space:nowrap;transform:scaleX(0.87);transform-origin:right;color:#222;font-size:10px;">2</div>
<div style="right:678px;top:902.9px;height:20px;line-height:20px;white-space:nowrap;transform:scaleX(0.87);transform-origin:right;color:#222;font-size:10px;">4<span style="display:inline-block;width:2px"></span>150</div>
<div style="left:127px;top:922px;width:290px;height:15px;background:#fff"></div>
<div style="left:127px;top:937px;width:290px;height:1px;background:#d9d9d9"></div>
<div style="left:156px;top:919.4px;height:20px;line-height:20px;white-space:nowrap;transform:scaleX(0.87);transform-origin:left;color:#222;font-size:10px;">G02</div>
<div style="left:430px;top:922px;width:319px;height:15px;background:#fff"></div>
<div style="left:430px;top:937px;width:319px;height:1px;background:#d9d9d9"></div>
<div style="left:503px;top:922px;width:1px;height:16px;background:#d9d9d9"></div>
<div style="left:577px;top:922px;width:1px;height:16px;background:#d9d9d9"></div>
<div style="left:650px;top:922px;width:1px;height:16px;background:#d9d9d9"></div>
<div style="left:749px;top:922px;width:1px;height:16px;background:#d9d9d9"></div>
<div style="right:1413px;top:919.4px;height:20px;line-height:20px;white-space:nowrap;transform:scaleX(0.87);transform-origin:right;color:#222;font-size:10px;">3</div>
<div style="right:1339px;top:919.4px;height:20px;line-height:20px;white-space:nowrap;transform:scaleX(0.87);transform-origin:right;color:#222;font-size:10px;">4<span style="display:inline-block;width:2px"></span>101</div>
<div style="right:1266px;top:919.4px;height:20px;line-height:20px;white-space:nowrap;transform:scaleX(0.87);transform-origin:right;color:#222;font-size:10px;">23</div>
<div style="left:700px;top:924px;width:1.9px;height:12px;background:linear-gradient(90deg,#5cb85c,#e8f5e8);border:1px solid #4ca64c;box-sizing:border-box"></div>
<div style="left:700px;top:922px;width:1px;height:16px;background:repeating-linear-gradient(180deg,#222 0 2px,transparent 2px 3px)"></div>
<div style="right:1167px;top:919.4px;height:20px;line-height:20px;white-space:nowrap;transform:scaleX(0.87);transform-origin:right;color:#222;font-size:10px;">+1%</div>
<div style="left:760px;top:922px;width:319px;height:15px;background:#fff"></div>
<div style="left:760px;top:937px;width:319px;height:1px;background:#d9d9d9"></div>
<div style="left:833px;top:922px;width:1px;height:16px;background:#d9d9d9"></div>
<div style="left:907px;top:922px;width:1px;height:16px;background:#d9d9d9"></div>
<div style="left:980px;top:922px;width:1px;height:16px;background:#d9d9d9"></div>
<div style="left:1079px;top:922px;width:1px;height:16px;background:#d9d9d9"></div>
<div style="right:1083px;top:919.4px;height:20px;line-height:20px;white-space:nowrap;transform:scaleX(0.87);transform-origin:right;color:#222;font-size:10px;">2</div>
<div style="right:1009px;top:919.4px;height:20px;line-height:20px;white-space:nowrap;transform:scaleX(0.87);transform-origin:right;color:#222;font-size:10px;">4<span style="display:inline-block;width:2px"></span>044</div>
<div style="right:936px;top:919.4px;height:20px;line-height:20px;white-space:nowrap;transform:scaleX(0.87);transform-origin:right;color:#222;font-size:10px;">-34</div>
<div style="left:1028.1px;top:924px;width:1.9px;height:12px;background:linear-gradient(90deg,#ffe8e8,#ff2020);border:1px solid #ff3030;box-sizing:border-box"></div>
<div style="left:1030px;top:922px;width:1px;height:16px;background:repeating-linear-gradient(180deg,#222 0 2px,transparent 2px 3px)"></div>
<div style="right:837px;top:919.4px;height:20px;line-height:20px;white-space:nowrap;transform:scaleX(0.87);transform-origin:right;color:#222;font-size:10px;">-1%</div>
<div style="left:1091px;top:922px;width:147px;height:15px;background:#fff"></div>
<div style="left:1091px;top:937px;width:147px;height:1px;background:#d9d9d9"></div>
<div style="left:1164px;top:922px;width:1px;height:16px;background:#d9d9d9"></div>
<div style="left:1238px;top:922px;width:1px;height:16px;background:#d9d9d9"></div>
<div style="right:752px;top:919.4px;height:20px;line-height:20px;white-space:nowrap;transform:scaleX(0.87);transform-origin:right;color:#222;font-size:10px;">5</div>
<div style="right:678px;top:919.4px;height:20px;line-height:20px;white-space:nowrap;transform:scaleX(0.87);transform-origin:right;color:#222;font-size:10px;">4<span style="display:inline-block;width:2px"></span>078</div>
<div style="left:127px;top:938px;width:290px;height:16px;background:#c1e4f5"></div>
<div style="left:127px;top:954px;width:290px;height:1px;background:#d9d9d9"></div>
<div style="left:143px;top:935.9px;height:20px;line-height:20px;white-space:nowrap;transform:scaleX(0.87);transform-origin:left;color:#111;font-size:10px;font-weight:bold;">PRZEDSTAWICIELE HANDLOWI</div>
<div style="left:430px;top:938px;width:319px;height:16px;background:#c1e4f5"></div>
<div style="left:430px;top:954px;width:319px;height:1px;background:#d9d9d9"></div>
<div style="left:503px;top:938px;width:1px;height:17px;background:#d9d9d9"></div>
<div style="left:577px;top:938px;width:1px;height:17px;background:#d9d9d9"></div>
<div style="left:650px;top:938px;width:1px;height:17px;background:#d9d9d9"></div>
<div style="left:749px;top:938px;width:1px;height:17px;background:#d9d9d9"></div>
<div style="right:1413px;top:935.9px;height:20px;line-height:20px;white-space:nowrap;transform:scaleX(0.87);transform-origin:right;color:#111;font-size:10px;font-weight:bold;">33</div>
<div style="right:1339px;top:935.9px;height:20px;line-height:20px;white-space:nowrap;transform:scaleX(0.87);transform-origin:right;color:#111;font-size:10px;font-weight:bold;">6<span style="display:inline-block;width:2px"></span>371</div>
<div style="right:1266px;top:935.9px;height:20px;line-height:20px;white-space:nowrap;transform:scaleX(0.87);transform-origin:right;color:#111;font-size:10px;font-weight:bold;">125</div>
<div style="left:700px;top:940px;width:3.8px;height:13px;background:linear-gradient(90deg,#5cb85c,#e8f5e8);border:1px solid #4ca64c;box-sizing:border-box"></div>
<div style="left:700px;top:938px;width:1px;height:17px;background:repeating-linear-gradient(180deg,#222 0 2px,transparent 2px 3px)"></div>
<div style="right:1167px;top:935.9px;height:20px;line-height:20px;white-space:nowrap;transform:scaleX(0.87);transform-origin:right;color:#111;font-size:10px;font-weight:bold;">+2%</div>
<div style="left:760px;top:938px;width:319px;height:16px;background:#c1e4f5"></div>
<div style="left:760px;top:954px;width:319px;height:1px;background:#d9d9d9"></div>
<div style="left:833px;top:938px;width:1px;height:17px;background:#d9d9d9"></div>
<div style="left:907px;top:938px;width:1px;height:17px;background:#d9d9d9"></div>
<div style="left:980px;top:938px;width:1px;height:17px;background:#d9d9d9"></div>
<div style="left:1079px;top:938px;width:1px;height:17px;background:#d9d9d9"></div>
<div style="right:1083px;top:935.9px;height:20px;line-height:20px;white-space:nowrap;transform:scaleX(0.87);transform-origin:right;color:#111;font-size:10px;font-weight:bold;">18</div>
<div style="right:1009px;top:935.9px;height:20px;line-height:20px;white-space:nowrap;transform:scaleX(0.87);transform-origin:right;color:#111;font-size:10px;font-weight:bold;">6<span style="display:inline-block;width:2px"></span>016</div>
<div style="right:936px;top:935.9px;height:20px;line-height:20px;white-space:nowrap;transform:scaleX(0.87);transform-origin:right;color:#111;font-size:10px;font-weight:bold;">-230</div>
<div style="left:1022.4px;top:940px;width:7.6px;height:13px;background:linear-gradient(90deg,#ffe8e8,#ff2020);border:1px solid #ff3030;box-sizing:border-box"></div>
<div style="left:1030px;top:938px;width:1px;height:17px;background:repeating-linear-gradient(180deg,#222 0 2px,transparent 2px 3px)"></div>
<div style="right:837px;top:935.9px;height:20px;line-height:20px;white-space:nowrap;transform:scaleX(0.87);transform-origin:right;color:#111;font-size:10px;font-weight:bold;">-4%</div>
<div style="left:1091px;top:938px;width:147px;height:16px;background:#c1e4f5"></div>
<div style="left:1091px;top:954px;width:147px;height:1px;background:#d9d9d9"></div>
<div style="left:1164px;top:938px;width:1px;height:17px;background:#d9d9d9"></div>
<div style="left:1238px;top:938px;width:1px;height:17px;background:#d9d9d9"></div>
<div style="right:752px;top:935.9px;height:20px;line-height:20px;white-space:nowrap;transform:scaleX(0.87);transform-origin:right;color:#111;font-size:10px;font-weight:bold;">51</div>
<div style="right:678px;top:935.9px;height:20px;line-height:20px;white-space:nowrap;transform:scaleX(0.87);transform-origin:right;color:#111;font-size:10px;font-weight:bold;">6<span style="display:inline-block;width:2px"></span>246</div>
<div style="left:127px;top:955px;width:290px;height:15px;background:#fff"></div>
<div style="left:127px;top:970px;width:290px;height:1px;background:#d9d9d9"></div>
<div style="left:156px;top:952.4px;height:20px;line-height:20px;white-space:nowrap;transform:scaleX(0.87);transform-origin:left;color:#222;font-size:10px;">G04</div>
<div style="left:430px;top:955px;width:319px;height:15px;background:#fff"></div>
<div style="left:430px;top:970px;width:319px;height:1px;background:#d9d9d9"></div>
<div style="left:503px;top:955px;width:1px;height:16px;background:#d9d9d9"></div>
<div style="left:577px;top:955px;width:1px;height:16px;background:#d9d9d9"></div>
<div style="left:650px;top:955px;width:1px;height:16px;background:#d9d9d9"></div>
<div style="left:749px;top:955px;width:1px;height:16px;background:#d9d9d9"></div>
<div style="right:1413px;top:952.4px;height:20px;line-height:20px;white-space:nowrap;transform:scaleX(0.87);transform-origin:right;color:#222;font-size:10px;">33</div>
<div style="right:1339px;top:952.4px;height:20px;line-height:20px;white-space:nowrap;transform:scaleX(0.87);transform-origin:right;color:#222;font-size:10px;">6<span style="display:inline-block;width:2px"></span>371</div>
<div style="right:1266px;top:952.4px;height:20px;line-height:20px;white-space:nowrap;transform:scaleX(0.87);transform-origin:right;color:#222;font-size:10px;">125</div>
<div style="left:700px;top:957px;width:3.8px;height:12px;background:linear-gradient(90deg,#5cb85c,#e8f5e8);border:1px solid #4ca64c;box-sizing:border-box"></div>
<div style="left:700px;top:955px;width:1px;height:16px;background:repeating-linear-gradient(180deg,#222 0 2px,transparent 2px 3px)"></div>
<div style="right:1167px;top:952.4px;height:20px;line-height:20px;white-space:nowrap;transform:scaleX(0.87);transform-origin:right;color:#222;font-size:10px;">+2%</div>
<div style="left:760px;top:955px;width:319px;height:15px;background:#fff"></div>
<div style="left:760px;top:970px;width:319px;height:1px;background:#d9d9d9"></div>
<div style="left:833px;top:955px;width:1px;height:16px;background:#d9d9d9"></div>
<div style="left:907px;top:955px;width:1px;height:16px;background:#d9d9d9"></div>
<div style="left:980px;top:955px;width:1px;height:16px;background:#d9d9d9"></div>
<div style="left:1079px;top:955px;width:1px;height:16px;background:#d9d9d9"></div>
<div style="right:1083px;top:952.4px;height:20px;line-height:20px;white-space:nowrap;transform:scaleX(0.87);transform-origin:right;color:#222;font-size:10px;">18</div>
<div style="right:1009px;top:952.4px;height:20px;line-height:20px;white-space:nowrap;transform:scaleX(0.87);transform-origin:right;color:#222;font-size:10px;">6<span style="display:inline-block;width:2px"></span>016</div>
<div style="right:936px;top:952.4px;height:20px;line-height:20px;white-space:nowrap;transform:scaleX(0.87);transform-origin:right;color:#222;font-size:10px;">-230</div>
<div style="left:1022.4px;top:957px;width:7.6px;height:12px;background:linear-gradient(90deg,#ffe8e8,#ff2020);border:1px solid #ff3030;box-sizing:border-box"></div>
<div style="left:1030px;top:955px;width:1px;height:16px;background:repeating-linear-gradient(180deg,#222 0 2px,transparent 2px 3px)"></div>
<div style="right:837px;top:952.4px;height:20px;line-height:20px;white-space:nowrap;transform:scaleX(0.87);transform-origin:right;color:#222;font-size:10px;">-4%</div>
<div style="left:1091px;top:955px;width:147px;height:15px;background:#fff"></div>
<div style="left:1091px;top:970px;width:147px;height:1px;background:#d9d9d9"></div>
<div style="left:1164px;top:955px;width:1px;height:16px;background:#d9d9d9"></div>
<div style="left:1238px;top:955px;width:1px;height:16px;background:#d9d9d9"></div>
<div style="right:752px;top:952.4px;height:20px;line-height:20px;white-space:nowrap;transform:scaleX(0.87);transform-origin:right;color:#222;font-size:10px;">51</div>
<div style="right:678px;top:952.4px;height:20px;line-height:20px;white-space:nowrap;transform:scaleX(0.87);transform-origin:right;color:#222;font-size:10px;">6<span style="display:inline-block;width:2px"></span>246</div>
<div style="left:127px;top:971px;width:290px;height:16px;background:#c1e4f5"></div>
<div style="left:127px;top:987px;width:290px;height:1px;background:#d9d9d9"></div>
<div style="left:143px;top:968.9px;height:20px;line-height:20px;white-space:nowrap;transform:scaleX(0.87);transform-origin:left;color:#111;font-size:10px;font-weight:bold;">SPECJALIŚCI HQ</div>
<div style="left:430px;top:971px;width:319px;height:16px;background:#c1e4f5"></div>
<div style="left:430px;top:987px;width:319px;height:1px;background:#d9d9d9"></div>
<div style="left:503px;top:971px;width:1px;height:17px;background:#d9d9d9"></div>
<div style="left:577px;top:971px;width:1px;height:17px;background:#d9d9d9"></div>
<div style="left:650px;top:971px;width:1px;height:17px;background:#d9d9d9"></div>
<div style="left:749px;top:971px;width:1px;height:17px;background:#d9d9d9"></div>
<div style="right:1413px;top:968.9px;height:20px;line-height:20px;white-space:nowrap;transform:scaleX(0.87);transform-origin:right;color:#111;font-size:10px;font-weight:bold;">49</div>
<div style="right:1339px;top:968.9px;height:20px;line-height:20px;white-space:nowrap;transform:scaleX(0.87);transform-origin:right;color:#111;font-size:10px;font-weight:bold;">5<span style="display:inline-block;width:2px"></span>800</div>
<div style="right:1266px;top:968.9px;height:20px;line-height:20px;white-space:nowrap;transform:scaleX(0.87);transform-origin:right;color:#111;font-size:10px;font-weight:bold;">-8</div>
<div style="left:700px;top:971px;width:1px;height:17px;background:repeating-linear-gradient(180deg,#222 0 2px,transparent 2px 3px)"></div>
<div style="right:1167px;top:968.9px;height:20px;line-height:20px;white-space:nowrap;transform:scaleX(0.87);transform-origin:right;color:#111;font-size:10px;font-weight:bold;">-0%</div>
<div style="left:760px;top:971px;width:319px;height:16px;background:#c1e4f5"></div>
<div style="left:760px;top:987px;width:319px;height:1px;background:#d9d9d9"></div>
<div style="left:833px;top:971px;width:1px;height:17px;background:#d9d9d9"></div>
<div style="left:907px;top:971px;width:1px;height:17px;background:#d9d9d9"></div>
<div style="left:980px;top:971px;width:1px;height:17px;background:#d9d9d9"></div>
<div style="left:1079px;top:971px;width:1px;height:17px;background:#d9d9d9"></div>
<div style="right:1083px;top:968.9px;height:20px;line-height:20px;white-space:nowrap;transform:scaleX(0.87);transform-origin:right;color:#111;font-size:10px;font-weight:bold;">37</div>
<div style="right:1009px;top:968.9px;height:20px;line-height:20px;white-space:nowrap;transform:scaleX(0.87);transform-origin:right;color:#111;font-size:10px;font-weight:bold;">5<span style="display:inline-block;width:2px"></span>819</div>
<div style="right:936px;top:968.9px;height:20px;line-height:20px;white-space:nowrap;transform:scaleX(0.87);transform-origin:right;color:#111;font-size:10px;font-weight:bold;">11</div>
<div style="left:1030px;top:971px;width:1px;height:17px;background:repeating-linear-gradient(180deg,#222 0 2px,transparent 2px 3px)"></div>
<div style="right:837px;top:968.9px;height:20px;line-height:20px;white-space:nowrap;transform:scaleX(0.87);transform-origin:right;color:#111;font-size:10px;font-weight:bold;">+0%</div>
<div style="left:1091px;top:971px;width:147px;height:16px;background:#c1e4f5"></div>
<div style="left:1091px;top:987px;width:147px;height:1px;background:#d9d9d9"></div>
<div style="left:1164px;top:971px;width:1px;height:17px;background:#d9d9d9"></div>
<div style="left:1238px;top:971px;width:1px;height:17px;background:#d9d9d9"></div>
<div style="right:752px;top:968.9px;height:20px;line-height:20px;white-space:nowrap;transform:scaleX(0.87);transform-origin:right;color:#111;font-size:10px;font-weight:bold;">86</div>
<div style="right:678px;top:968.9px;height:20px;line-height:20px;white-space:nowrap;transform:scaleX(0.87);transform-origin:right;color:#111;font-size:10px;font-weight:bold;">5<span style="display:inline-block;width:2px"></span>808</div>
<div style="left:117px;top:377px;width:1126px;height:1px;background:#a6a6a6"></div>
<div style="left:117px;top:427px;width:1126px;height:1px;background:#217346"></div>
<svg style="position:absolute;left:463px;top:201px" width="16" height="24" viewBox="0 0 16 24"><path d="M1 1v17l4-4 3 7 3-1-3-7h6z" fill="#fff" stroke="#000" stroke-width="1"/></svg>
<svg style="position:absolute;left:1240px;top:401px" width="8" height="14"><path d="M2.5 1Q.5 7 6 12" stroke="#3a86c8" stroke-width="1.6" fill="none"/></svg>
<div style="left:1477px;top:461px;width:1px;height:23px;background:#777"></div>
<div style="left:1474px;top:472px;width:8px;height:1px;background:#777"></div>
<div style="left:1504px;top:197px;width:409px;height:813px;background:#e6e6e6"></div>
<svg style="position:absolute;left:1849px;top:217px" width="12" height="8"><path d="M0 0h11L5.5 6z" fill="#555"/></svg>
<svg style="position:absolute;left:1890px;top:214px" width="14" height="14"><path d="M2 2l10 10M12 2L2 12" stroke="#333" stroke-width="1.6"/></svg>
<div style="left:1511px;top:239px;width:402px;height:770px;background:#f0f0f0"></div>
<svg style="position:absolute;left:1512px;top:234px" width="40" height="36" viewBox="0 0 40 36"><path d="M12.8 15L31.9 5.1 38.1 9 29.7 18.7 26.4 16.1 19.8 18.3z" fill="#f39621"/><path d="M26.4 16.1L34 12.5 29.7 18.7z" fill="#f2b817"/><path d="M5.1 19.1L12.1 15.2 26.4 22.4 26 16.9 30.4 19.8 38.1 29 31.9 33.2z" fill="#2170b0"/></svg>
<div style="left:1557px;top:243.0px;height:20px;line-height:20px;white-space:nowrap;transform:scaleX(0.98);transform-origin:left;color:#2b2b2b;font-size:18px;"><b>Flexi</b>EPM</div>
<div style="right:105px;top:243.0px;height:20px;line-height:20px;white-space:nowrap;transform:scaleX(0.85);transform-origin:right;color:#a0a0a0;font-size:12px;font-weight:bold;"><i>Polski</i></div>
<svg style="position:absolute;left:1814px;top:243px" width="92" height="20" viewBox="0 0 92 20"><circle cx="10" cy="10" r="6.2" fill="none" stroke="#3580c4" stroke-width="1.9"/><path d="M5 6.5c2-1.5 4-2 6-1.8l1 2.8-2.5 1.5-.5 2.5-3.5-.5-1.5-2z" fill="#3580c4"/><path d="M11.5 10.5l4.5-1.5.5 3-2.5 3.5-2.5.5z" fill="#3580c4"/><path d="M39.8 5.2A6.3 6.3 0 1 0 40.3 14" fill="none" stroke="#3580c4" stroke-width="2"/><path d="M35.5 3.2l5.8-.3-.3 5.8z" fill="#3580c4"/><circle cx="58" cy="10" r="4.3" fill="none" stroke="#3580c4" stroke-width="2.4"/><circle cx="58" cy="10" r="6.4" fill="none" stroke="#3580c4" stroke-width="2.2" stroke-dasharray="2.5 2.53"/><path d="M77.5 4.5h9.5v11h-9.5z" fill="none" stroke="#3580c4" stroke-width="1.7"/><path d="M77.5 3.5v14l4-1.5v-11z" fill="#3580c4"/></svg>
<svg style="position:absolute;left:1516px;top:277px" width="16" height="16" viewBox="0 0 16 16"><circle cx="8" cy="5.5" r="4" fill="none" stroke="#3b86c6" stroke-width="1.3"/><path d="M1.5 15c0-4 3-6 6.5-6s6.5 2 6.5 6z" fill="none" stroke="#3b86c6" stroke-width="1.3"/></svg>
<div style="left:1517px;top:305px;width:390px;height:1px;background:#dcdcdc"></div>
<div style="left:1515px;top:321px;width:80px;height:25px;background:#fff;border-radius:3px"></div>
<div style="left:1555.0px;top:324.0px;height:20px;line-height:20px;white-space:nowrap;transform:translateX(-50%) scaleX(1.07);color:#3b86c6;font-size:13px;">Nawigacja</div>
<div style="left:1598px;top:321px;width:77px;height:25px;background:#e2e2e2;border-radius:3px"></div>
<div style="left:1636.5px;top:324.0px;height:20px;line-height:20px;white-space:nowrap;transform:translateX(-50%) scaleX(1.07);color:#8a8a8a;font-size:13px;">Obliczenia</div>
<div style="left:1680px;top:321px;width:102px;height:25px;background:#e2e2e2;border-radius:3px"></div>
<div style="left:1731.0px;top:324.0px;height:20px;line-height:20px;white-space:nowrap;transform:translateX(-50%) scaleX(1.07);color:#8a8a8a;font-size:13px;">Źródła danych</div>
<div style="left:1786px;top:321px;width:86px;height:25px;background:#e2e2e2;border-radius:3px"></div>
<div style="left:1829.0px;top:324.0px;height:20px;line-height:20px;white-space:nowrap;transform:translateX(-50%) scaleX(1.07);color:#8a8a8a;font-size:13px;">Mapowania</div>
<div style="left:1515px;top:353px;width:395px;height:630px;background:#fff"></div>
<div style="left:1515px;top:353px;width:395px;height:22px;background:#a0c6df;border-bottom:3px solid #3683c6;box-sizing:border-box"></div>
<svg style="position:absolute;left:1524px;top:357px" width="16" height="14"><rect x="0" y="8" width="3" height="6" fill="#111"/><rect x="4.3" y="4" width="3" height="10" fill="#111"/><rect x="8.6" y="6" width="3" height="8" fill="#111"/><rect x="12.9" y="0" width="3" height="14" fill="#111"/></svg>
<div style="left:1551px;top:353.0px;height:20px;line-height:20px;white-space:nowrap;transform:scaleX(0.93);transform-origin:left;color:#1a1a1a;font-size:11.5px;font-weight:bold;">A. PLANOWANIE</div>
<svg style="position:absolute;left:1886px;top:359px" width="14" height="9"><path d="M1 7l6-6 6 6" fill="none" stroke="#fff" stroke-width="2"/></svg>
<div style="left:1515px;top:375px;width:395px;height:22px;background:#fff"></div>
<div style="left:1515px;top:396px;width:395px;height:1px;background:#d8d8d8"></div>
<div style="left:1559px;top:375.5px;height:20px;line-height:20px;white-space:nowrap;transform:scaleX(1.055);transform-origin:left;color:#1e1e1e;font-size:11px;font-weight:bold;">A.0. Planowanie wakatów i nowych etatów</div>
<svg style="position:absolute;left:1886px;top:382px" width="14" height="8"><path d="M1 1l6 5 6-5" fill="none" stroke="#f5b400" stroke-width="2.4"/></svg>
<div style="left:1515px;top:397px;width:395px;height:22px;background:#fff"></div>
<div style="left:1515px;top:418px;width:395px;height:1px;background:#d8d8d8"></div>
<div style="left:1559px;top:397.5px;height:20px;line-height:20px;white-space:nowrap;transform:scaleX(1.055);transform-origin:left;color:#1e1e1e;font-size:11px;font-weight:bold;">A.1. Planowanie kosztów zatrudnienia</div>
<svg style="position:absolute;left:1886px;top:404px" width="14" height="8"><path d="M1 1l6 5 6-5" fill="none" stroke="#f5b400" stroke-width="2.4"/></svg>
<svg style="position:absolute;left:1524px;top:401px" width="15" height="14" viewBox="0 0 24 23"><path d="M12 0l3.5 7.5 8.5 1-6.3 5.8 1.7 8.4L12 18.6 4.6 22.7l1.7-8.4L0 8.5l8.5-1z" fill="#c9c9c9"/></svg>
<div style="left:1515px;top:419px;width:395px;height:22px;background:#fff"></div>
<div style="left:1515px;top:440px;width:395px;height:1px;background:#d8d8d8"></div>
<div style="left:1559px;top:419.5px;height:20px;line-height:20px;white-space:nowrap;transform:scaleX(1.055);transform-origin:left;color:#1e1e1e;font-size:11px;font-weight:bold;">A.1.D Parametry zatrudnienia - formatka DETAILS</div>
<svg style="position:absolute;left:1886px;top:426px" width="14" height="8"><path d="M1 1l6 5 6-5" fill="none" stroke="#f5b400" stroke-width="2.4"/></svg>
<div style="left:1515px;top:441px;width:395px;height:22px;background:#fff"></div>
<div style="left:1515px;top:462px;width:395px;height:1px;background:#d8d8d8"></div>
<div style="left:1559px;top:441.5px;height:20px;line-height:20px;white-space:nowrap;transform:scaleX(1.055);transform-origin:left;color:#1e1e1e;font-size:11px;font-weight:bold;">A.2. Planowanie - formatki dodatkowe (admin)</div>
<svg style="position:absolute;left:1886px;top:448px" width="14" height="8"><path d="M1 1l6 5 6-5" fill="none" stroke="#f5b400" stroke-width="2.4"/></svg>
<div style="left:1515px;top:463px;width:395px;height:22px;background:#fff"></div>
<div style="left:1515px;top:484px;width:395px;height:1px;background:#d8d8d8"></div>
<div style="left:1559px;top:463.5px;height:20px;line-height:20px;white-space:nowrap;transform:scaleX(1.055);transform-origin:left;color:#1e1e1e;font-size:11px;font-weight:bold;">A.3. Planowanie per pracownik</div>
<svg style="position:absolute;left:1886px;top:470px" width="14" height="8"><path d="M1 1l6 5 6-5" fill="none" stroke="#f5b400" stroke-width="2.4"/></svg>
<div style="left:1515px;top:485px;width:395px;height:22px;background:#fff"></div>
<div style="left:1515px;top:506px;width:395px;height:1px;background:#d8d8d8"></div>
<div style="left:1559px;top:485.5px;height:20px;line-height:20px;white-space:nowrap;transform:scaleX(1.055);transform-origin:left;color:#1e1e1e;font-size:11px;font-weight:bold;">A.4. Parametry globalne</div>
<svg style="position:absolute;left:1886px;top:492px" width="14" height="8"><path d="M1 1l6 5 6-5" fill="none" stroke="#f5b400" stroke-width="2.4"/></svg>
<div style="left:1515px;top:507px;width:395px;height:22px;background:#fff"></div>
<div style="left:1515px;top:528px;width:395px;height:1px;background:#d8d8d8"></div>
<div style="left:1559px;top:507.5px;height:20px;line-height:20px;white-space:nowrap;transform:scaleX(1.055);transform-origin:left;color:#1e1e1e;font-size:11px;font-weight:bold;">A.5. Określenie wartości koszyka</div>
<svg style="position:absolute;left:1886px;top:514px" width="14" height="8"><path d="M1 1l6 5 6-5" fill="none" stroke="#f5b400" stroke-width="2.4"/></svg>
<div style="left:1515px;top:529px;width:395px;height:22px;background:#fff"></div>
<div style="left:1515px;top:550px;width:395px;height:1px;background:#d8d8d8"></div>
<div style="left:1559px;top:529.5px;height:20px;line-height:20px;white-space:nowrap;transform:scaleX(1.055);transform-origin:left;color:#1e1e1e;font-size:11px;font-weight:bold;">A.6. Planowanie premii</div>
<svg style="position:absolute;left:1886px;top:536px" width="14" height="8"><path d="M1 1l6 5 6-5" fill="none" stroke="#f5b400" stroke-width="2.4"/></svg>
<div style="left:1515px;top:551px;width:395px;height:22px;background:#fff"></div>
<div style="left:1515px;top:572px;width:395px;height:1px;background:#d8d8d8"></div>
<div style="left:1559px;top:551.5px;height:20px;line-height:20px;white-space:nowrap;transform:scaleX(1.055);transform-origin:left;color:#1e1e1e;font-size:11px;font-weight:bold;">A.7. Raporty - Jednostka planistyczna</div>
<svg style="position:absolute;left:1886px;top:558px" width="14" height="8"><path d="M1 1l6 5 6-5" fill="none" stroke="#f5b400" stroke-width="2.4"/></svg>
<div style="left:1515px;top:573px;width:395px;height:22px;background:#a0c6df;border-bottom:3px solid #3683c6;box-sizing:border-box"></div>
<svg style="position:absolute;left:1524px;top:577px" width="16" height="14"><rect x="0" y="8" width="3" height="6" fill="#111"/><rect x="4.3" y="4" width="3" height="10" fill="#111"/><rect x="8.6" y="6" width="3" height="8" fill="#111"/><rect x="12.9" y="0" width="3" height="14" fill="#111"/></svg>
<div style="left:1551px;top:573.0px;height:20px;line-height:20px;white-space:nowrap;transform:scaleX(0.93);transform-origin:left;color:#1a1a1a;font-size:11.5px;font-weight:bold;">B. RAPORTY</div>
<svg style="position:absolute;left:1886px;top:579px" width="14" height="9"><path d="M1 7l6-6 6 6" fill="none" stroke="#fff" stroke-width="2"/></svg>
<div style="left:1515px;top:595px;width:395px;height:22px;background:#fff"></div>
<div style="left:1515px;top:616px;width:395px;height:1px;background:#d8d8d8"></div>
<div style="left:1559px;top:595.5px;height:20px;line-height:20px;white-space:nowrap;transform:scaleX(1.055);transform-origin:left;color:#1e1e1e;font-size:11px;font-weight:bold;">B.1. Raporty</div>
<svg style="position:absolute;left:1886px;top:602px" width="14" height="8"><path d="M1 1l6 5 6-5" fill="none" stroke="#f5b400" stroke-width="2.4"/></svg>
<div style="left:1515px;top:617px;width:395px;height:22px;background:#fff"></div>
<div style="left:1515px;top:638px;width:395px;height:1px;background:#d8d8d8"></div>
<div style="left:1559px;top:617.5px;height:20px;line-height:20px;white-space:nowrap;transform:scaleX(1.055);transform-origin:left;color:#1e1e1e;font-size:11px;font-weight:bold;">B.2. Raporty OLAP</div>
<svg style="position:absolute;left:1886px;top:624px" width="14" height="8"><path d="M1 6l6-5 6 5" fill="none" stroke="#f5b400" stroke-width="2.4"/></svg>
<div style="left:1515px;top:639px;width:395px;height:22px;background:#f5f5f5"></div>
<div style="left:1559px;top:639.5px;height:20px;line-height:20px;white-space:nowrap;transform:scaleX(1.05);transform-origin:left;color:#444;font-size:11px;">B.2.1. Analiza odchyleń</div>
<svg style="position:absolute;left:1885px;top:643px" width="15" height="15"><circle cx="6" cy="6" r="4.8" fill="none" stroke="#3b86c6" stroke-width="1.6"/><path d="M9.5 9.5l4 4" stroke="#3b86c6" stroke-width="1.8"/></svg>
<div style="left:1515px;top:661px;width:395px;height:22px;background:#fff"></div>
<div style="left:1559px;top:661.5px;height:20px;line-height:20px;white-space:nowrap;transform:scaleX(1.05);transform-origin:left;color:#444;font-size:11px;">B.2.2. Przegląd linii HR</div>
<svg style="position:absolute;left:1885px;top:665px" width="15" height="15"><circle cx="6" cy="6" r="4.8" fill="none" stroke="#3b86c6" stroke-width="1.6"/><path d="M9.5 9.5l4 4" stroke="#3b86c6" stroke-width="1.8"/></svg>
<div style="left:1515px;top:684px;width:395px;height:22px;background:#f5f5f5"></div>
<div style="left:1559px;top:684.5px;height:20px;line-height:20px;white-space:nowrap;transform:scaleX(1.05);transform-origin:left;color:#444;font-size:11px;">B.2.3. Zestawienie 12M</div>
<svg style="position:absolute;left:1885px;top:688px" width="15" height="15"><circle cx="6" cy="6" r="4.8" fill="none" stroke="#3b86c6" stroke-width="1.6"/><path d="M9.5 9.5l4 4" stroke="#3b86c6" stroke-width="1.8"/></svg>
<div style="left:1515px;top:706px;width:395px;height:22px;background:#a0c6df;border-bottom:3px solid #3683c6;box-sizing:border-box"></div>
<svg style="position:absolute;left:1524px;top:710px" width="16" height="14"><rect x="0" y="8" width="3" height="6" fill="#111"/><rect x="4.3" y="4" width="3" height="10" fill="#111"/><rect x="8.6" y="6" width="3" height="8" fill="#111"/><rect x="12.9" y="0" width="3" height="14" fill="#111"/></svg>
<div style="left:1551px;top:706.0px;height:20px;line-height:20px;white-space:nowrap;transform:scaleX(0.93);transform-origin:left;color:#1a1a1a;font-size:11.5px;font-weight:bold;">C. SETUP</div>
<svg style="position:absolute;left:1886px;top:712px" width="14" height="9"><path d="M1 1l6 6 6-6" fill="none" stroke="#fff" stroke-width="2"/></svg>
<div style="left:1515px;top:728px;width:395px;height:22px;background:#a0c6df;border-bottom:3px solid #3683c6;box-sizing:border-box"></div>
<svg style="position:absolute;left:1524px;top:732px" width="16" height="14"><rect x="0" y="8" width="3" height="6" fill="#111"/><rect x="4.3" y="4" width="3" height="10" fill="#111"/><rect x="8.6" y="6" width="3" height="8" fill="#111"/><rect x="12.9" y="0" width="3" height="14" fill="#111"/></svg>
<div style="left:1551px;top:728.0px;height:20px;line-height:20px;white-space:nowrap;transform:scaleX(0.93);transform-origin:left;color:#1a1a1a;font-size:11.5px;font-weight:bold;">D. ADMINISTRACYJNE</div>
<svg style="position:absolute;left:1886px;top:734px" width="14" height="9"><path d="M1 1l6 6 6-6" fill="none" stroke="#fff" stroke-width="2"/></svg>
<div style="right:6px;top:990.0px;height:20px;line-height:20px;white-space:nowrap;transform:scaleX(0.82);transform-origin:right;color:#a8a8a8;font-size:11px;font-weight:bold;"><i>v. 2.1.12.6</i></div>
<div style="left:0px;top:988px;width:1504px;height:28px;background:#e6e6e6"></div>
<div style="left:1504px;top:1009px;width:409px;height:7px;background:#e6e6e6"></div>
<svg style="position:absolute;left:18px;top:995px" width="40" height="12"><path d="M8 2.5v7l-4-3.5z" fill="#b8b8b8"/><path d="M34 2.5v7l4-3.5z" fill="#b8b8b8"/></svg>
<div style="left:95px;top:991px;width:1px;height:24px;background:#c6c6c6"></div>
<div style="left:127px;top:992.0px;height:20px;line-height:20px;white-space:nowrap;transform:translateX(-50%) scaleX(0.95);color:#444;font-size:13px;">Sheet1</div>
<div style="left:160px;top:988px;width:96px;height:24px;background:#fff;border-left:1px solid #c6c6c6;border-right:1px solid #c6c6c6;box-sizing:border-box"></div>
<div style="left:160px;top:1010px;width:96px;height:2px;background:#217346"></div>
<div style="left:208px;top:991.8px;height:20px;line-height:20px;white-space:nowrap;transform:translateX(-50%) scaleX(0.95);color:#217346;font-size:13px;font-weight:bold;">COSTS_12M</div>
<svg style="position:absolute;left:288px;top:993px" width="17" height="17"><circle cx="8.5" cy="8.5" r="7.3" fill="none" stroke="#666" stroke-width="1.2"/><path d="M8.5 4.5v8M4.5 8.5h8" stroke="#666" stroke-width="1.3"/></svg>
<div style="left:900px;top:995px;width:2px;height:2px;background:#a0a0a0"></div>
<div style="left:900px;top:1000px;width:2px;height:2px;background:#a0a0a0"></div>
<div style="left:900px;top:1005px;width:2px;height:2px;background:#a0a0a0"></div>
<div style="left:917px;top:995px;width:16px;height:15px;background:#fff;border:1px solid #c6c6c6;box-sizing:border-box"></div>
<svg style="position:absolute;left:921px;top:998px" width="8" height="9"><path d="M6 0v9L1 4.5z" fill="#555"/></svg>
<div style="left:932px;top:995px;width:519px;height:15px;background:#fff;border:1px solid #c6c6c6;box-sizing:border-box"></div>
<div style="left:1451px;top:995px;width:16px;height:15px;background:#dcdcdc"></div>
<div style="left:1467px;top:995px;width:16px;height:15px;background:#fff;border:1px solid #c6c6c6;box-sizing:border-box"></div>
<svg style="position:absolute;left:1472px;top:998px" width="8" height="9"><path d="M1 0v9l5-4.5z" fill="#555"/></svg>
<div style="left:0px;top:1016px;width:1913px;height:21px;background:#f3f3f3;border-top:1px solid #dadada;box-sizing:border-box"></div>
<div style="left:2px;top:1017.0px;height:20px;line-height:20px;white-space:nowrap;transform:scaleX(0.95);transform-origin:left;color:#333;font-size:12px;">Ready</div>
<svg style="position:absolute;left:1514px;top:1019px" width="16" height="16" viewBox="0 0 16 16"><rect x="0" y="0" width="15" height="10" fill="#555"/><rect x="4" y="11" width="2" height="4" fill="#555"/><circle cx="11" cy="11" r="3.5" fill="#f3f3f3"/><circle cx="11" cy="11" r="2.8" fill="none" stroke="#555" stroke-width="1.8" stroke-dasharray="1.5 1"/></svg>
<div style="left:1533px;top:1017.0px;height:20px;line-height:20px;white-space:nowrap;transform:scaleX(0.97);transform-origin:left;color:#333;font-size:12px;">Display Settings</div>
<div style="left:1634px;top:1017px;width:38px;height:20px;background:#d6d6d6"></div>
<svg style="position:absolute;left:1644px;top:1020px" width="110" height="14" viewBox="0 0 110 14"><rect x="1.5" y="1.5" width="12" height="11" fill="none" stroke="#666"/><path d="M5.5 1.5v11M9.5 1.5v11M1.5 5.5h12M1.5 9.5h12" stroke="#666"/><rect x="40.5" y="1.5" width="12" height="11" fill="none" stroke="#666"/><rect x="43.5" y="4.5" width="6" height="5" fill="none" stroke="#666"/><rect x="78.5" y="1.5" width="12" height="11" fill="none" stroke="#666"/><path d="M78.5 6.5h12M84.5 1.5v5" stroke="#666"/></svg>
<div style="left:1752px;top:1026px;width:8px;height:2px;background:#555"></div>
<div style="left:1763px;top:1027px;width:101px;height:1px;background:#999"></div>
<div style="left:1812px;top:1021px;width:4px;height:12px;background:#666"></div>
<svg style="position:absolute;left:1865px;top:1022px" width="10" height="10"><path d="M5 0v10M0 5h10" stroke="#555" stroke-width="1.6"/></svg>
<div style="left:1887px;top:1017.0px;height:20px;line-height:20px;white-space:nowrap;transform:scaleX(0.95);transform-origin:left;color:#333;font-size:12px;">100%</div>
</body></html>
